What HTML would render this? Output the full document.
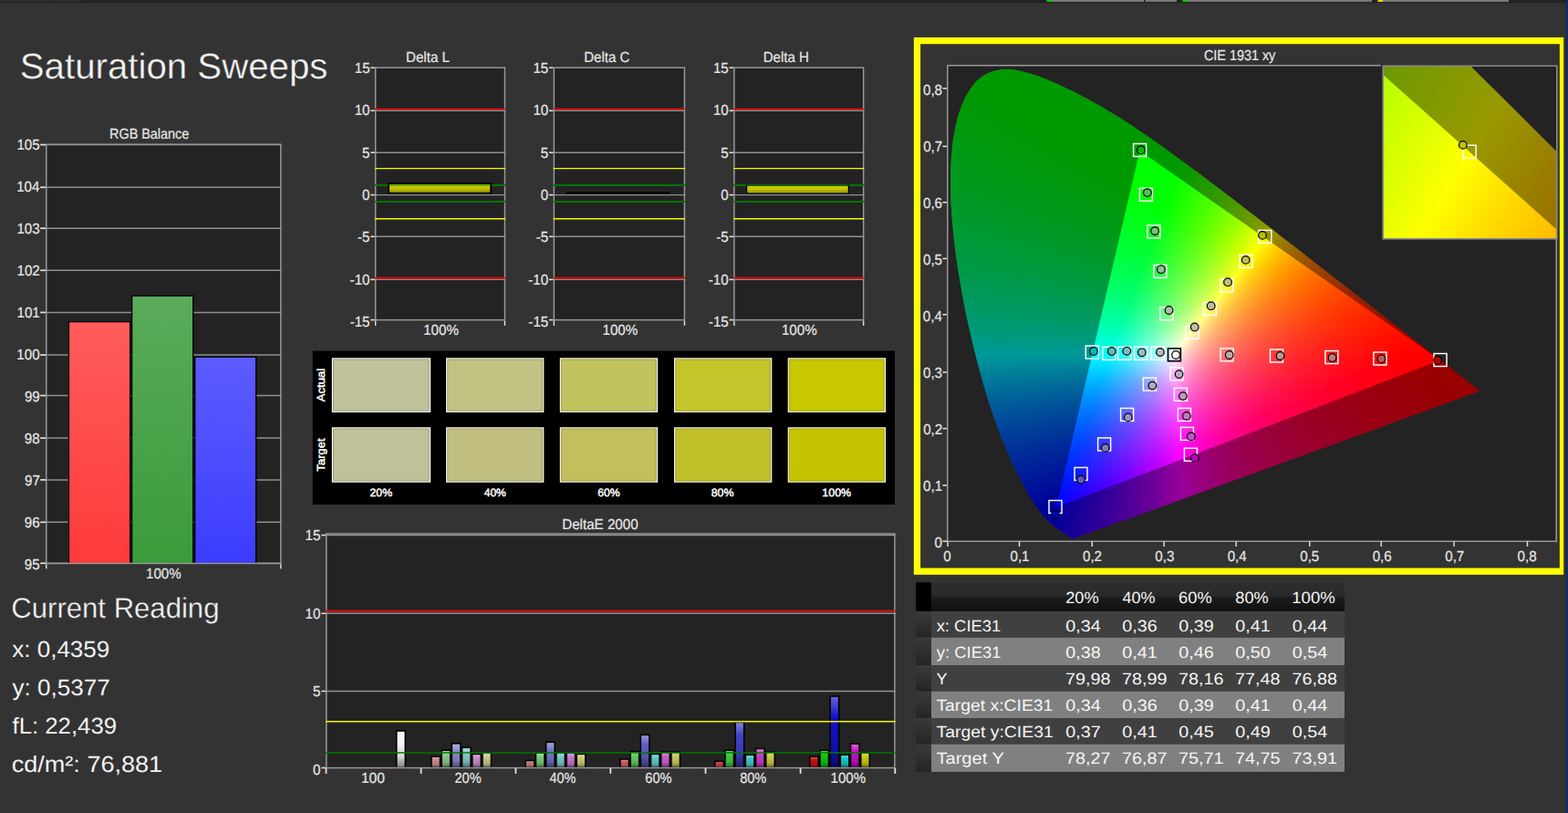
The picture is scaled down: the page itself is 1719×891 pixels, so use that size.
<!DOCTYPE html>
<html lang="en"><head><meta charset="utf-8"><title>Saturation Sweeps</title>
<style>
html,body{margin:0;padding:0;background:#333333}
body{width:1719px;height:891px;overflow:hidden;position:relative;font-family:"Liberation Sans", sans-serif}
svg{position:absolute;left:0;top:0;font-family:"Liberation Sans", sans-serif;fill:#e6e6e6;text-rendering:geometricPrecision}
.t{stroke:#e6e6e6;stroke-width:.22px}
.g{position:absolute}
.g i{display:block;height:1px}
</style></head>
<body>
<svg width="1719" height="891" viewBox="0 0 1719 891">
<defs><linearGradient id="gr" x1="0" y1="0" x2="0" y2="1"><stop offset="0" stop-color="#ff5c5c"/><stop offset="1" stop-color="#ff3a3a"/></linearGradient><linearGradient id="gg" x1="0" y1="0" x2="0" y2="1"><stop offset="0" stop-color="#5aab5a"/><stop offset="1" stop-color="#3a9b3a"/></linearGradient><linearGradient id="gb" x1="0" y1="0" x2="0" y2="1"><stop offset="0" stop-color="#5c5cff"/><stop offset="1" stop-color="#3c3cff"/></linearGradient><linearGradient id="gy" x1="0" y1="0" x2="0" y2="1"><stop offset="0" stop-color="#cdcd00"/><stop offset="0.5" stop-color="#c3c300"/><stop offset="1" stop-color="#8e8e00"/></linearGradient><linearGradient id="b0" x1="0" y1="0" x2="0" y2="1"><stop offset="0" stop-color="#f9f9f9"/><stop offset="0.3" stop-color="#f6f6f6"/><stop offset="0.7" stop-color="#d8d8d8"/><stop offset="1" stop-color="#7b7b7b"/></linearGradient><linearGradient id="b1" x1="0" y1="0" x2="0" y2="1"><stop offset="0" stop-color="#dbb3b3"/><stop offset="0.3" stop-color="#c88a8a"/><stop offset="0.7" stop-color="#b07979"/><stop offset="1" stop-color="#644545"/></linearGradient><linearGradient id="b2" x1="0" y1="0" x2="0" y2="1"><stop offset="0" stop-color="#b3dbb3"/><stop offset="0.3" stop-color="#8ac88a"/><stop offset="0.7" stop-color="#79b079"/><stop offset="1" stop-color="#456445"/></linearGradient><linearGradient id="b3" x1="0" y1="0" x2="0" y2="1"><stop offset="0" stop-color="#b3b3db"/><stop offset="0.3" stop-color="#8a8ac8"/><stop offset="0.7" stop-color="#7979b0"/><stop offset="1" stop-color="#454564"/></linearGradient><linearGradient id="b4" x1="0" y1="0" x2="0" y2="1"><stop offset="0" stop-color="#b3dbdb"/><stop offset="0.3" stop-color="#8ac8c8"/><stop offset="0.7" stop-color="#79b0b0"/><stop offset="1" stop-color="#456464"/></linearGradient><linearGradient id="b5" x1="0" y1="0" x2="0" y2="1"><stop offset="0" stop-color="#dbb3db"/><stop offset="0.3" stop-color="#c88ac8"/><stop offset="0.7" stop-color="#b079b0"/><stop offset="1" stop-color="#644564"/></linearGradient><linearGradient id="b6" x1="0" y1="0" x2="0" y2="1"><stop offset="0" stop-color="#dbdbb3"/><stop offset="0.3" stop-color="#c8c88a"/><stop offset="0.7" stop-color="#b0b079"/><stop offset="1" stop-color="#646445"/></linearGradient><linearGradient id="b7" x1="0" y1="0" x2="0" y2="1"><stop offset="0" stop-color="#dba6a6"/><stop offset="0.3" stop-color="#c87676"/><stop offset="0.7" stop-color="#b06868"/><stop offset="1" stop-color="#643b3b"/></linearGradient><linearGradient id="b8" x1="0" y1="0" x2="0" y2="1"><stop offset="0" stop-color="#a6dba6"/><stop offset="0.3" stop-color="#76c876"/><stop offset="0.7" stop-color="#68b068"/><stop offset="1" stop-color="#3b643b"/></linearGradient><linearGradient id="b9" x1="0" y1="0" x2="0" y2="1"><stop offset="0" stop-color="#a6a6db"/><stop offset="0.3" stop-color="#7676c8"/><stop offset="0.7" stop-color="#6868b0"/><stop offset="1" stop-color="#3b3b64"/></linearGradient><linearGradient id="b10" x1="0" y1="0" x2="0" y2="1"><stop offset="0" stop-color="#a6dbdb"/><stop offset="0.3" stop-color="#76c8c8"/><stop offset="0.7" stop-color="#68b0b0"/><stop offset="1" stop-color="#3b6464"/></linearGradient><linearGradient id="b11" x1="0" y1="0" x2="0" y2="1"><stop offset="0" stop-color="#dba6db"/><stop offset="0.3" stop-color="#c876c8"/><stop offset="0.7" stop-color="#b068b0"/><stop offset="1" stop-color="#643b64"/></linearGradient><linearGradient id="b12" x1="0" y1="0" x2="0" y2="1"><stop offset="0" stop-color="#dbdba6"/><stop offset="0.3" stop-color="#c8c876"/><stop offset="0.7" stop-color="#b0b068"/><stop offset="1" stop-color="#64643b"/></linearGradient><linearGradient id="b13" x1="0" y1="0" x2="0" y2="1"><stop offset="0" stop-color="#db9797"/><stop offset="0.3" stop-color="#c85e5e"/><stop offset="0.7" stop-color="#b05353"/><stop offset="1" stop-color="#642f2f"/></linearGradient><linearGradient id="b14" x1="0" y1="0" x2="0" y2="1"><stop offset="0" stop-color="#97db97"/><stop offset="0.3" stop-color="#5ec85e"/><stop offset="0.7" stop-color="#53b053"/><stop offset="1" stop-color="#2f642f"/></linearGradient><linearGradient id="b15" x1="0" y1="0" x2="0" y2="1"><stop offset="0" stop-color="#9797db"/><stop offset="0.3" stop-color="#5e5ec8"/><stop offset="0.7" stop-color="#5353b0"/><stop offset="1" stop-color="#2f2f64"/></linearGradient><linearGradient id="b16" x1="0" y1="0" x2="0" y2="1"><stop offset="0" stop-color="#97dbdb"/><stop offset="0.3" stop-color="#5ec8c8"/><stop offset="0.7" stop-color="#53b0b0"/><stop offset="1" stop-color="#2f6464"/></linearGradient><linearGradient id="b17" x1="0" y1="0" x2="0" y2="1"><stop offset="0" stop-color="#db97db"/><stop offset="0.3" stop-color="#c85ec8"/><stop offset="0.7" stop-color="#b053b0"/><stop offset="1" stop-color="#642f64"/></linearGradient><linearGradient id="b18" x1="0" y1="0" x2="0" y2="1"><stop offset="0" stop-color="#dbdb97"/><stop offset="0.3" stop-color="#c8c85e"/><stop offset="0.7" stop-color="#b0b053"/><stop offset="1" stop-color="#64642f"/></linearGradient><linearGradient id="b19" x1="0" y1="0" x2="0" y2="1"><stop offset="0" stop-color="#db8383"/><stop offset="0.3" stop-color="#c84040"/><stop offset="0.7" stop-color="#b03939"/><stop offset="1" stop-color="#642020"/></linearGradient><linearGradient id="b20" x1="0" y1="0" x2="0" y2="1"><stop offset="0" stop-color="#83db83"/><stop offset="0.3" stop-color="#40c840"/><stop offset="0.7" stop-color="#39b039"/><stop offset="1" stop-color="#206420"/></linearGradient><linearGradient id="b21" x1="0" y1="0" x2="0" y2="1"><stop offset="0" stop-color="#8383db"/><stop offset="0.3" stop-color="#4040c8"/><stop offset="0.7" stop-color="#3939b0"/><stop offset="1" stop-color="#202064"/></linearGradient><linearGradient id="b22" x1="0" y1="0" x2="0" y2="1"><stop offset="0" stop-color="#83dbdb"/><stop offset="0.3" stop-color="#40c8c8"/><stop offset="0.7" stop-color="#39b0b0"/><stop offset="1" stop-color="#206464"/></linearGradient><linearGradient id="b23" x1="0" y1="0" x2="0" y2="1"><stop offset="0" stop-color="#db83db"/><stop offset="0.3" stop-color="#c840c8"/><stop offset="0.7" stop-color="#b039b0"/><stop offset="1" stop-color="#642064"/></linearGradient><linearGradient id="b24" x1="0" y1="0" x2="0" y2="1"><stop offset="0" stop-color="#dbdb83"/><stop offset="0.3" stop-color="#c8c840"/><stop offset="0.7" stop-color="#b0b039"/><stop offset="1" stop-color="#646420"/></linearGradient><linearGradient id="b25" x1="0" y1="0" x2="0" y2="1"><stop offset="0" stop-color="#db6565"/><stop offset="0.3" stop-color="#c81212"/><stop offset="0.7" stop-color="#b01010"/><stop offset="1" stop-color="#640909"/></linearGradient><linearGradient id="b26" x1="0" y1="0" x2="0" y2="1"><stop offset="0" stop-color="#65db65"/><stop offset="0.3" stop-color="#12c812"/><stop offset="0.7" stop-color="#10b010"/><stop offset="1" stop-color="#096409"/></linearGradient><linearGradient id="b27" x1="0" y1="0" x2="0" y2="1"><stop offset="0" stop-color="#6565db"/><stop offset="0.3" stop-color="#1212c8"/><stop offset="0.7" stop-color="#1010b0"/><stop offset="1" stop-color="#090964"/></linearGradient><linearGradient id="b28" x1="0" y1="0" x2="0" y2="1"><stop offset="0" stop-color="#65dbdb"/><stop offset="0.3" stop-color="#12c8c8"/><stop offset="0.7" stop-color="#10b0b0"/><stop offset="1" stop-color="#096464"/></linearGradient><linearGradient id="b29" x1="0" y1="0" x2="0" y2="1"><stop offset="0" stop-color="#db65db"/><stop offset="0.3" stop-color="#c812c8"/><stop offset="0.7" stop-color="#b010b0"/><stop offset="1" stop-color="#640964"/></linearGradient><linearGradient id="b30" x1="0" y1="0" x2="0" y2="1"><stop offset="0" stop-color="#dbdb65"/><stop offset="0.3" stop-color="#c8c812"/><stop offset="0.7" stop-color="#b0b010"/><stop offset="1" stop-color="#646409"/></linearGradient><linearGradient id="th" x1="0" y1="0" x2="0" y2="1"><stop offset="0" stop-color="#2d2d2d"/><stop offset="0.48" stop-color="#292929"/><stop offset="0.5" stop-color="#1d1d1d"/><stop offset="1" stop-color="#101010"/></linearGradient><linearGradient id="rh" x1="0" y1="0" x2="0" y2="1"><stop offset="0" stop-color="#3a3a3a"/><stop offset="1" stop-color="#242424"/></linearGradient></defs>
<rect x="0" y="0" width="1719" height="3.2" fill="#222"/>
<rect x="0" y="0" width="56" height="2" fill="#2c2c2c"/>
<rect x="57" y="0" width="32" height="2" fill="#2c2c2c"/>
<rect x="1153" y="0" width="101" height="2" fill="#787878"/>
<rect x="1255.5" y="0" width="34.5" height="2" fill="#787878"/>
<rect x="1302" y="0" width="202" height="2" fill="#787878"/>
<rect x="1516" y="0" width="138" height="2" fill="#787878"/>
<rect x="1147.5" y="0" width="5.5" height="2" fill="#00c800"/>
<rect x="1296.5" y="0" width="5.5" height="2" fill="#00c800"/>
<rect x="1510.5" y="0" width="5.5" height="2" fill="#dcdc00"/>
<rect x="1717.6" y="0" width="1.4" height="891" fill="#0a2c8c"/>
<rect x="1716.9" y="0" width="0.7" height="891" fill="#1c2230"/>
<text x="21.79" y="86.20" font-size="39.3" textLength="337.69" lengthAdjust="spacingAndGlyphs" fill="#f4f4f4" stroke="#333" stroke-width="0.35">Saturation Sweeps</text>
<rect x="50" y="157.6" width="258.6" height="460.7" fill="#232323"/>
<line x1="50" y1="617.3" x2="308.6" y2="617.3" stroke="#909090" stroke-width="1.5"/>
<line x1="44.2" y1="617.3" x2="50" y2="617.3" stroke="#e4e4e4" stroke-width="1.7"/>
<text x="26.82" y="624.00" font-size="16" textLength="16.82" lengthAdjust="spacingAndGlyphs" class="t">95</text>
<line x1="50" y1="572.3" x2="308.6" y2="572.3" stroke="#909090" stroke-width="1.5"/>
<line x1="44.2" y1="572.3" x2="50" y2="572.3" stroke="#e4e4e4" stroke-width="1.7"/>
<text x="26.86" y="578.00" font-size="16" textLength="16.82" lengthAdjust="spacingAndGlyphs" class="t">96</text>
<line x1="50" y1="525.9" x2="308.6" y2="525.9" stroke="#909090" stroke-width="1.5"/>
<line x1="44.2" y1="525.9" x2="50" y2="525.9" stroke="#e4e4e4" stroke-width="1.7"/>
<text x="26.97" y="532.00" font-size="16" textLength="16.82" lengthAdjust="spacingAndGlyphs" class="t">97</text>
<line x1="50" y1="480.1" x2="308.6" y2="480.1" stroke="#909090" stroke-width="1.5"/>
<line x1="44.2" y1="480.1" x2="50" y2="480.1" stroke="#e4e4e4" stroke-width="1.7"/>
<text x="26.86" y="486.00" font-size="16" textLength="16.82" lengthAdjust="spacingAndGlyphs" class="t">98</text>
<line x1="50" y1="433.5" x2="308.6" y2="433.5" stroke="#909090" stroke-width="1.5"/>
<line x1="44.2" y1="433.5" x2="50" y2="433.5" stroke="#e4e4e4" stroke-width="1.7"/>
<text x="26.90" y="440.00" font-size="16" textLength="16.82" lengthAdjust="spacingAndGlyphs" class="t">99</text>
<line x1="50" y1="389" x2="308.6" y2="389" stroke="#909090" stroke-width="1.5"/>
<line x1="44.2" y1="389" x2="50" y2="389" stroke="#e4e4e4" stroke-width="1.7"/>
<text x="18.35" y="394.00" font-size="16" textLength="25.23" lengthAdjust="spacingAndGlyphs" class="t">100</text>
<line x1="50" y1="342.4" x2="308.6" y2="342.4" stroke="#909090" stroke-width="1.5"/>
<line x1="44.2" y1="342.4" x2="50" y2="342.4" stroke="#e4e4e4" stroke-width="1.7"/>
<text x="18.51" y="348.00" font-size="16" textLength="25.23" lengthAdjust="spacingAndGlyphs" class="t">101</text>
<line x1="50" y1="296.3" x2="308.6" y2="296.3" stroke="#909090" stroke-width="1.5"/>
<line x1="44.2" y1="296.3" x2="50" y2="296.3" stroke="#e4e4e4" stroke-width="1.7"/>
<text x="18.54" y="302.00" font-size="16" textLength="25.23" lengthAdjust="spacingAndGlyphs" class="t">102</text>
<line x1="50" y1="250.2" x2="308.6" y2="250.2" stroke="#909090" stroke-width="1.5"/>
<line x1="44.2" y1="250.2" x2="50" y2="250.2" stroke="#e4e4e4" stroke-width="1.7"/>
<text x="18.43" y="256.00" font-size="16" textLength="25.23" lengthAdjust="spacingAndGlyphs" class="t">103</text>
<line x1="50" y1="205.3" x2="308.6" y2="205.3" stroke="#909090" stroke-width="1.5"/>
<line x1="44.2" y1="205.3" x2="50" y2="205.3" stroke="#e4e4e4" stroke-width="1.7"/>
<text x="18.20" y="210.00" font-size="16" textLength="25.23" lengthAdjust="spacingAndGlyphs" class="t">104</text>
<line x1="50" y1="158.6" x2="308.6" y2="158.6" stroke="#909090" stroke-width="1.5"/>
<line x1="44.2" y1="158.6" x2="50" y2="158.6" stroke="#e4e4e4" stroke-width="1.7"/>
<text x="18.39" y="164.00" font-size="16" textLength="25.23" lengthAdjust="spacingAndGlyphs" class="t">105</text>
<rect x="75.4" y="352.6" width="67.3" height="265" fill="url(#gr)" stroke="#000" stroke-width="1.3"/>
<rect x="144.6" y="324.2" width="67.1" height="293.4" fill="url(#gg)" stroke="#000" stroke-width="1.3"/>
<rect x="213.7" y="391.2" width="67" height="226.4" fill="url(#gb)" stroke="#000" stroke-width="1.3"/>
<rect x="50.75" y="158.35" width="257.1" height="459.2" fill="none" stroke="#999999" stroke-width="1.5"/>
<line x1="50.75" y1="618.3" x2="50.75" y2="623.3" stroke="#e4e4e4" stroke-width="1.4"/>
<line x1="307.85" y1="618.3" x2="307.85" y2="623.3" stroke="#e4e4e4" stroke-width="1.4"/>
<text x="120.11" y="152.10" font-size="16" textLength="87.12" lengthAdjust="spacingAndGlyphs" class="t">RGB Balance</text>
<text x="160.06" y="633.90" font-size="16" textLength="38.67" lengthAdjust="spacingAndGlyphs" class="t">100%</text>
<rect x="410.9" y="73.4" width="143.3" height="278" fill="#232323"/>
<line x1="406.3" y1="350.6" x2="410.9" y2="350.6" stroke="#e4e4e4" stroke-width="1.5"/>
<text x="383.66" y="357.90" font-size="16" textLength="21.85" lengthAdjust="spacingAndGlyphs" class="t">-15</text>
<line x1="410.9" y1="306.4" x2="554.2" y2="306.4" stroke="#909090" stroke-width="1.4"/>
<line x1="406.3" y1="306.4" x2="410.9" y2="306.4" stroke="#e4e4e4" stroke-width="1.5"/>
<text x="383.62" y="311.60" font-size="16" textLength="21.85" lengthAdjust="spacingAndGlyphs" class="t">-10</text>
<line x1="410.9" y1="259.3" x2="554.2" y2="259.3" stroke="#909090" stroke-width="1.4"/>
<line x1="406.3" y1="259.3" x2="410.9" y2="259.3" stroke="#e4e4e4" stroke-width="1.5"/>
<text x="392.09" y="265.30" font-size="16" textLength="13.44" lengthAdjust="spacingAndGlyphs" class="t">-5</text>
<line x1="410.9" y1="213.6" x2="554.2" y2="213.6" stroke="#909090" stroke-width="1.4"/>
<line x1="406.3" y1="213.6" x2="410.9" y2="213.6" stroke="#e4e4e4" stroke-width="1.5"/>
<text x="397.08" y="219.00" font-size="16" textLength="8.41" lengthAdjust="spacingAndGlyphs" class="t">0</text>
<line x1="410.9" y1="167.2" x2="554.2" y2="167.2" stroke="#909090" stroke-width="1.4"/>
<line x1="406.3" y1="167.2" x2="410.9" y2="167.2" stroke="#e4e4e4" stroke-width="1.5"/>
<text x="397.11" y="172.70" font-size="16" textLength="8.41" lengthAdjust="spacingAndGlyphs" class="t">5</text>
<line x1="410.9" y1="121.3" x2="554.2" y2="121.3" stroke="#909090" stroke-width="1.4"/>
<line x1="406.3" y1="121.3" x2="410.9" y2="121.3" stroke="#e4e4e4" stroke-width="1.5"/>
<text x="388.68" y="126.40" font-size="16" textLength="16.82" lengthAdjust="spacingAndGlyphs" class="t">10</text>
<line x1="406.3" y1="74.2" x2="410.9" y2="74.2" stroke="#e4e4e4" stroke-width="1.5"/>
<text x="388.72" y="80.10" font-size="16" textLength="16.82" lengthAdjust="spacingAndGlyphs" class="t">15</text>
<rect x="411.65" y="74.15" width="141.8" height="276.5" fill="none" stroke="#999999" stroke-width="1.5"/>
<line x1="410.9" y1="119.5" x2="554.2" y2="119.5" stroke="#ff0000" stroke-width="1.7"/>
<line x1="410.9" y1="304.6" x2="554.2" y2="304.6" stroke="#ff0000" stroke-width="1.7"/>
<line x1="410.9" y1="203" x2="554.2" y2="203" stroke="#007600" stroke-width="1.8"/>
<line x1="410.9" y1="221" x2="554.2" y2="221" stroke="#007600" stroke-width="1.8"/>
<rect x="426" y="201" width="112.2" height="10.8" fill="url(#gy)" stroke="#000" stroke-width="2"/>
<line x1="427" y1="203" x2="537.2" y2="203" stroke="#1e8c00" stroke-width="1.8" opacity="0.5"/>
<line x1="410.9" y1="184.6" x2="554.2" y2="184.6" stroke="#f8f800" stroke-width="1.35"/>
<line x1="410.9" y1="239.7" x2="554.2" y2="239.7" stroke="#f8f800" stroke-width="1.35"/>
<line x1="411.65" y1="351.4" x2="411.65" y2="356.9" stroke="#e4e4e4" stroke-width="1.4"/>
<line x1="553.45" y1="351.4" x2="553.45" y2="356.9" stroke="#e4e4e4" stroke-width="1.4"/>
<rect x="606.6" y="73.4" width="144.6" height="278" fill="#232323"/>
<line x1="602" y1="350.6" x2="606.6" y2="350.6" stroke="#e4e4e4" stroke-width="1.5"/>
<text x="579.36" y="357.90" font-size="16" textLength="21.85" lengthAdjust="spacingAndGlyphs" class="t">-15</text>
<line x1="606.6" y1="306.4" x2="751.2" y2="306.4" stroke="#909090" stroke-width="1.4"/>
<line x1="602" y1="306.4" x2="606.6" y2="306.4" stroke="#e4e4e4" stroke-width="1.5"/>
<text x="579.32" y="311.60" font-size="16" textLength="21.85" lengthAdjust="spacingAndGlyphs" class="t">-10</text>
<line x1="606.6" y1="259.3" x2="751.2" y2="259.3" stroke="#909090" stroke-width="1.4"/>
<line x1="602" y1="259.3" x2="606.6" y2="259.3" stroke="#e4e4e4" stroke-width="1.5"/>
<text x="587.79" y="265.30" font-size="16" textLength="13.44" lengthAdjust="spacingAndGlyphs" class="t">-5</text>
<line x1="606.6" y1="213.6" x2="751.2" y2="213.6" stroke="#909090" stroke-width="1.4"/>
<line x1="602" y1="213.6" x2="606.6" y2="213.6" stroke="#e4e4e4" stroke-width="1.5"/>
<text x="592.78" y="219.00" font-size="16" textLength="8.41" lengthAdjust="spacingAndGlyphs" class="t">0</text>
<line x1="606.6" y1="167.2" x2="751.2" y2="167.2" stroke="#909090" stroke-width="1.4"/>
<line x1="602" y1="167.2" x2="606.6" y2="167.2" stroke="#e4e4e4" stroke-width="1.5"/>
<text x="592.81" y="172.70" font-size="16" textLength="8.41" lengthAdjust="spacingAndGlyphs" class="t">5</text>
<line x1="606.6" y1="121.3" x2="751.2" y2="121.3" stroke="#909090" stroke-width="1.4"/>
<line x1="602" y1="121.3" x2="606.6" y2="121.3" stroke="#e4e4e4" stroke-width="1.5"/>
<text x="584.38" y="126.40" font-size="16" textLength="16.82" lengthAdjust="spacingAndGlyphs" class="t">10</text>
<line x1="602" y1="74.2" x2="606.6" y2="74.2" stroke="#e4e4e4" stroke-width="1.5"/>
<text x="584.42" y="80.10" font-size="16" textLength="16.82" lengthAdjust="spacingAndGlyphs" class="t">15</text>
<rect x="607.35" y="74.15" width="143.1" height="276.5" fill="none" stroke="#999999" stroke-width="1.5"/>
<line x1="606.6" y1="119.5" x2="751.2" y2="119.5" stroke="#ff0000" stroke-width="1.7"/>
<line x1="606.6" y1="304.6" x2="751.2" y2="304.6" stroke="#ff0000" stroke-width="1.7"/>
<line x1="606.6" y1="203" x2="751.2" y2="203" stroke="#007600" stroke-width="1.8"/>
<line x1="606.6" y1="221" x2="751.2" y2="221" stroke="#007600" stroke-width="1.8"/>
<rect x="620.8" y="210.3" width="114.2" height="2.6" fill="#000"/>
<line x1="606.6" y1="184.6" x2="751.2" y2="184.6" stroke="#f8f800" stroke-width="1.35"/>
<line x1="606.6" y1="239.7" x2="751.2" y2="239.7" stroke="#f8f800" stroke-width="1.35"/>
<line x1="607.35" y1="351.4" x2="607.35" y2="356.9" stroke="#e4e4e4" stroke-width="1.4"/>
<line x1="750.45" y1="351.4" x2="750.45" y2="356.9" stroke="#e4e4e4" stroke-width="1.4"/>
<rect x="804.1" y="73.4" width="143.3" height="278" fill="#232323"/>
<line x1="799.5" y1="350.6" x2="804.1" y2="350.6" stroke="#e4e4e4" stroke-width="1.5"/>
<text x="776.86" y="357.90" font-size="16" textLength="21.85" lengthAdjust="spacingAndGlyphs" class="t">-15</text>
<line x1="804.1" y1="306.4" x2="947.4" y2="306.4" stroke="#909090" stroke-width="1.4"/>
<line x1="799.5" y1="306.4" x2="804.1" y2="306.4" stroke="#e4e4e4" stroke-width="1.5"/>
<text x="776.82" y="311.60" font-size="16" textLength="21.85" lengthAdjust="spacingAndGlyphs" class="t">-10</text>
<line x1="804.1" y1="259.3" x2="947.4" y2="259.3" stroke="#909090" stroke-width="1.4"/>
<line x1="799.5" y1="259.3" x2="804.1" y2="259.3" stroke="#e4e4e4" stroke-width="1.5"/>
<text x="785.29" y="265.30" font-size="16" textLength="13.44" lengthAdjust="spacingAndGlyphs" class="t">-5</text>
<line x1="804.1" y1="213.6" x2="947.4" y2="213.6" stroke="#909090" stroke-width="1.4"/>
<line x1="799.5" y1="213.6" x2="804.1" y2="213.6" stroke="#e4e4e4" stroke-width="1.5"/>
<text x="790.28" y="219.00" font-size="16" textLength="8.41" lengthAdjust="spacingAndGlyphs" class="t">0</text>
<line x1="804.1" y1="167.2" x2="947.4" y2="167.2" stroke="#909090" stroke-width="1.4"/>
<line x1="799.5" y1="167.2" x2="804.1" y2="167.2" stroke="#e4e4e4" stroke-width="1.5"/>
<text x="790.31" y="172.70" font-size="16" textLength="8.41" lengthAdjust="spacingAndGlyphs" class="t">5</text>
<line x1="804.1" y1="121.3" x2="947.4" y2="121.3" stroke="#909090" stroke-width="1.4"/>
<line x1="799.5" y1="121.3" x2="804.1" y2="121.3" stroke="#e4e4e4" stroke-width="1.5"/>
<text x="781.88" y="126.40" font-size="16" textLength="16.82" lengthAdjust="spacingAndGlyphs" class="t">10</text>
<line x1="799.5" y1="74.2" x2="804.1" y2="74.2" stroke="#e4e4e4" stroke-width="1.5"/>
<text x="781.92" y="80.10" font-size="16" textLength="16.82" lengthAdjust="spacingAndGlyphs" class="t">15</text>
<rect x="804.85" y="74.15" width="141.8" height="276.5" fill="none" stroke="#999999" stroke-width="1.5"/>
<line x1="804.1" y1="119.5" x2="947.4" y2="119.5" stroke="#ff0000" stroke-width="1.7"/>
<line x1="804.1" y1="304.6" x2="947.4" y2="304.6" stroke="#ff0000" stroke-width="1.7"/>
<line x1="804.1" y1="203" x2="947.4" y2="203" stroke="#007600" stroke-width="1.8"/>
<line x1="804.1" y1="221" x2="947.4" y2="221" stroke="#007600" stroke-width="1.8"/>
<rect x="818.55" y="203.15" width="111.8" height="9" fill="url(#gy)" stroke="#000" stroke-width="1.3"/>
<line x1="819.2" y1="203" x2="929.7" y2="203" stroke="#1e8c00" stroke-width="1.8" opacity="0.5"/>
<line x1="804.1" y1="184.6" x2="947.4" y2="184.6" stroke="#f8f800" stroke-width="1.35"/>
<line x1="804.1" y1="239.7" x2="947.4" y2="239.7" stroke="#f8f800" stroke-width="1.35"/>
<line x1="804.85" y1="351.4" x2="804.85" y2="356.9" stroke="#e4e4e4" stroke-width="1.4"/>
<line x1="946.65" y1="351.4" x2="946.65" y2="356.9" stroke="#e4e4e4" stroke-width="1.4"/>
<text x="445.05" y="68.00" font-size="16" textLength="47.85" lengthAdjust="spacingAndGlyphs" class="t">Delta L</text>
<text x="640.18" y="68.00" font-size="16" textLength="50.15" lengthAdjust="spacingAndGlyphs" class="t">Delta C</text>
<text x="836.72" y="68.00" font-size="16" textLength="50.15" lengthAdjust="spacingAndGlyphs" class="t">Delta H</text>
<text x="464.16" y="367.20" font-size="16" textLength="38.67" lengthAdjust="spacingAndGlyphs" class="t">100%</text>
<text x="660.56" y="367.20" font-size="16" textLength="38.67" lengthAdjust="spacingAndGlyphs" class="t">100%</text>
<text x="856.96" y="367.20" font-size="16" textLength="38.67" lengthAdjust="spacingAndGlyphs" class="t">100%</text>
<rect x="342.8" y="384.5" width="638.2" height="168.5" fill="#000"/>
<rect x="364.4" y="392.9" width="107.1" height="58.4" fill="#c1c19b" stroke="#fcfcf4" stroke-width="1.2"/>
<rect x="365.5" y="394" width="104.9" height="56.2" fill="none" stroke="#000" stroke-opacity="0.18" stroke-width="1"/>
<rect x="364.4" y="468.9" width="107.1" height="59.2" fill="#c0c09a" stroke="#fcfcf4" stroke-width="1.2"/>
<rect x="365.5" y="470" width="104.9" height="57" fill="none" stroke="#000" stroke-opacity="0.18" stroke-width="1"/>
<rect x="489.6" y="392.9" width="106.1" height="58.4" fill="#c2c282" stroke="#fcfcf4" stroke-width="1.2"/>
<rect x="490.7" y="394" width="103.9" height="56.2" fill="none" stroke="#000" stroke-opacity="0.18" stroke-width="1"/>
<rect x="489.6" y="468.9" width="106.1" height="59.2" fill="#c0bf80" stroke="#fcfcf4" stroke-width="1.2"/>
<rect x="490.7" y="470" width="103.9" height="57" fill="none" stroke="#000" stroke-opacity="0.18" stroke-width="1"/>
<rect x="614.4" y="392.9" width="106.1" height="58.4" fill="#c2c25e" stroke="#fcfcf4" stroke-width="1.2"/>
<rect x="615.5" y="394" width="103.9" height="56.2" fill="none" stroke="#000" stroke-opacity="0.18" stroke-width="1"/>
<rect x="614.4" y="468.9" width="106.1" height="59.2" fill="#c1c05c" stroke="#fcfcf4" stroke-width="1.2"/>
<rect x="615.5" y="470" width="103.9" height="57" fill="none" stroke="#000" stroke-opacity="0.18" stroke-width="1"/>
<rect x="739.6" y="392.9" width="106.1" height="58.4" fill="#c4c42b" stroke="#fcfcf4" stroke-width="1.2"/>
<rect x="740.7" y="394" width="103.9" height="56.2" fill="none" stroke="#000" stroke-opacity="0.18" stroke-width="1"/>
<rect x="739.6" y="468.9" width="106.1" height="59.2" fill="#c2c02a" stroke="#fcfcf4" stroke-width="1.2"/>
<rect x="740.7" y="470" width="103.9" height="57" fill="none" stroke="#000" stroke-opacity="0.18" stroke-width="1"/>
<rect x="864.3" y="392.9" width="106.1" height="58.4" fill="#c8c800" stroke="#fcfcf4" stroke-width="1.2"/>
<rect x="865.4" y="394" width="103.9" height="56.2" fill="none" stroke="#000" stroke-opacity="0.18" stroke-width="1"/>
<rect x="864.3" y="468.9" width="106.1" height="59.2" fill="#c6c400" stroke="#fcfcf4" stroke-width="1.2"/>
<rect x="865.4" y="470" width="103.9" height="57" fill="none" stroke="#000" stroke-opacity="0.18" stroke-width="1"/>
<text x="405.59" y="543.70" font-size="12.2" textLength="24.43" lengthAdjust="spacingAndGlyphs" fill="#fff" stroke="#fff" stroke-width="0.45">20%</text>
<text x="530.73" y="543.70" font-size="12.2" textLength="24.08" lengthAdjust="spacingAndGlyphs" fill="#fff" stroke="#fff" stroke-width="0.45">40%</text>
<text x="655.19" y="543.70" font-size="12.2" textLength="24.43" lengthAdjust="spacingAndGlyphs" fill="#fff" stroke="#fff" stroke-width="0.45">60%</text>
<text x="779.67" y="543.70" font-size="12.2" textLength="24.75" lengthAdjust="spacingAndGlyphs" fill="#fff" stroke="#fff" stroke-width="0.45">80%</text>
<text x="901.37" y="543.70" font-size="12.2" textLength="31.66" lengthAdjust="spacingAndGlyphs" fill="#fff" stroke="#fff" stroke-width="0.45">100%</text>
<text transform="translate(356.4,422) rotate(-90)" font-size="12.2" fill="#fff" text-anchor="middle" textLength="36.51" lengthAdjust="spacingAndGlyphs" stroke="#fff" stroke-width="0.45">Actual</text>
<text transform="translate(356.4,498.4) rotate(-90)" font-size="12.2" fill="#fff" text-anchor="middle" textLength="35.98" lengthAdjust="spacingAndGlyphs" stroke="#fff" stroke-width="0.45">Target</text>
<rect x="357" y="584.2" width="624.6" height="258.1" fill="#232323"/>
<line x1="352.4" y1="841.5" x2="357" y2="841.5" stroke="#e4e4e4" stroke-width="1.5"/>
<text x="342.98" y="849.20" font-size="16" textLength="8.41" lengthAdjust="spacingAndGlyphs" class="t">0</text>
<line x1="357" y1="757.5" x2="981.6" y2="757.5" stroke="#909090" stroke-width="1.4"/>
<line x1="352.4" y1="757.5" x2="357" y2="757.5" stroke="#e4e4e4" stroke-width="1.5"/>
<text x="343.01" y="763.43" font-size="16" textLength="8.41" lengthAdjust="spacingAndGlyphs" class="t">5</text>
<line x1="357" y1="672.3" x2="981.6" y2="672.3" stroke="#909090" stroke-width="1.4"/>
<line x1="352.4" y1="672.3" x2="357" y2="672.3" stroke="#e4e4e4" stroke-width="1.5"/>
<text x="334.58" y="677.66" font-size="16" textLength="16.82" lengthAdjust="spacingAndGlyphs" class="t">10</text>
<line x1="357" y1="586.5" x2="981.6" y2="586.5" stroke="#909090" stroke-width="1.4"/>
<line x1="352.4" y1="586.5" x2="357" y2="586.5" stroke="#e4e4e4" stroke-width="1.5"/>
<text x="334.62" y="591.89" font-size="16" textLength="16.82" lengthAdjust="spacingAndGlyphs" class="t">15</text>
<rect x="434.7" y="801" width="9.6" height="40.4" fill="url(#b0)" stroke="#000" stroke-width="1.6"/>
<rect x="472.9" y="829.15" width="9.6" height="12.25" fill="url(#b1)" stroke="#000" stroke-width="1.6"/>
<rect x="484.1" y="822.25" width="9.6" height="19.15" fill="url(#b2)" stroke="#000" stroke-width="1.6"/>
<rect x="495.3" y="814.85" width="9.6" height="26.55" fill="url(#b3)" stroke="#000" stroke-width="1.6"/>
<rect x="506.5" y="819.25" width="9.6" height="22.15" fill="url(#b4)" stroke="#000" stroke-width="1.6"/>
<rect x="517.7" y="826.35" width="9.6" height="15.05" fill="url(#b5)" stroke="#000" stroke-width="1.6"/>
<rect x="528.9" y="824.85" width="9.6" height="16.55" fill="url(#b6)" stroke="#000" stroke-width="1.6"/>
<rect x="576.2" y="833.45" width="9.6" height="7.95" fill="url(#b7)" stroke="#000" stroke-width="1.6"/>
<rect x="587.4" y="825.05" width="9.6" height="16.35" fill="url(#b8)" stroke="#000" stroke-width="1.6"/>
<rect x="598.6" y="813.35" width="9.6" height="28.05" fill="url(#b9)" stroke="#000" stroke-width="1.6"/>
<rect x="609.8" y="825.05" width="9.6" height="16.35" fill="url(#b10)" stroke="#000" stroke-width="1.6"/>
<rect x="621" y="825.05" width="9.6" height="16.35" fill="url(#b11)" stroke="#000" stroke-width="1.6"/>
<rect x="632.2" y="826.35" width="9.6" height="15.05" fill="url(#b12)" stroke="#000" stroke-width="1.6"/>
<rect x="679.9" y="831.95" width="9.6" height="9.45" fill="url(#b13)" stroke="#000" stroke-width="1.6"/>
<rect x="691.1" y="823.55" width="9.6" height="17.85" fill="url(#b14)" stroke="#000" stroke-width="1.6"/>
<rect x="702.3" y="805.35" width="9.6" height="36.05" fill="url(#b15)" stroke="#000" stroke-width="1.6"/>
<rect x="713.5" y="826.35" width="9.6" height="15.05" fill="url(#b16)" stroke="#000" stroke-width="1.6"/>
<rect x="724.7" y="824.15" width="9.6" height="17.25" fill="url(#b17)" stroke="#000" stroke-width="1.6"/>
<rect x="735.9" y="824.15" width="9.6" height="17.25" fill="url(#b18)" stroke="#000" stroke-width="1.6"/>
<rect x="783.7" y="834.35" width="9.6" height="7.05" fill="url(#b19)" stroke="#000" stroke-width="1.6"/>
<rect x="794.9" y="822.25" width="9.6" height="19.15" fill="url(#b20)" stroke="#000" stroke-width="1.6"/>
<rect x="806.1" y="791.35" width="9.6" height="50.05" fill="url(#b21)" stroke="#000" stroke-width="1.6"/>
<rect x="817.3" y="827.25" width="9.6" height="14.15" fill="url(#b22)" stroke="#000" stroke-width="1.6"/>
<rect x="828.5" y="820.45" width="9.6" height="20.95" fill="url(#b23)" stroke="#000" stroke-width="1.6"/>
<rect x="839.7" y="824.15" width="9.6" height="17.25" fill="url(#b24)" stroke="#000" stroke-width="1.6"/>
<rect x="887.7" y="829.15" width="9.6" height="12.25" fill="url(#b25)" stroke="#000" stroke-width="1.6"/>
<rect x="898.9" y="822.25" width="9.6" height="19.15" fill="url(#b26)" stroke="#000" stroke-width="1.6"/>
<rect x="910.1" y="763.05" width="9.6" height="78.35" fill="url(#b27)" stroke="#000" stroke-width="1.6"/>
<rect x="921.3" y="827.25" width="9.6" height="14.15" fill="url(#b28)" stroke="#000" stroke-width="1.6"/>
<rect x="932.5" y="815.15" width="9.6" height="26.25" fill="url(#b29)" stroke="#000" stroke-width="1.6"/>
<rect x="943.7" y="825.05" width="9.6" height="16.35" fill="url(#b30)" stroke="#000" stroke-width="1.6"/>
<rect x="357.75" y="584.95" width="623.1" height="256.6" fill="none" stroke="#999999" stroke-width="1.5"/>
<line x1="357" y1="669.7" x2="981.6" y2="669.7" stroke="#cc1212" stroke-width="2.2"/>
<line x1="357" y1="790.7" x2="981.6" y2="790.7" stroke="#f4f400" stroke-width="1.5"/>
<line x1="357" y1="825" x2="981.6" y2="825" stroke="#007a00" stroke-width="1.5"/>
<line x1="357.5" y1="841.8" x2="357.5" y2="847.9" stroke="#e4e4e4" stroke-width="1.8"/>
<line x1="461.6" y1="841.8" x2="461.6" y2="847.9" stroke="#e4e4e4" stroke-width="1.8"/>
<line x1="565.4" y1="841.8" x2="565.4" y2="847.9" stroke="#e4e4e4" stroke-width="1.8"/>
<line x1="669.3" y1="841.8" x2="669.3" y2="847.9" stroke="#e4e4e4" stroke-width="1.8"/>
<line x1="773.5" y1="841.8" x2="773.5" y2="847.9" stroke="#e4e4e4" stroke-width="1.8"/>
<line x1="877.6" y1="841.8" x2="877.6" y2="847.9" stroke="#e4e4e4" stroke-width="1.8"/>
<line x1="981.3" y1="841.8" x2="981.3" y2="847.9" stroke="#e4e4e4" stroke-width="1.8"/>
<text x="395.93" y="858.40" font-size="16" textLength="25.97" lengthAdjust="spacingAndGlyphs" class="t">100</text>
<text x="498.47" y="858.40" font-size="16" textLength="29.23" lengthAdjust="spacingAndGlyphs" class="t">20%</text>
<text x="602.48" y="858.40" font-size="16" textLength="28.81" lengthAdjust="spacingAndGlyphs" class="t">40%</text>
<text x="707.27" y="858.40" font-size="16" textLength="29.23" lengthAdjust="spacingAndGlyphs" class="t">60%</text>
<text x="811.18" y="858.40" font-size="16" textLength="29.11" lengthAdjust="spacingAndGlyphs" class="t">80%</text>
<text x="910.52" y="858.40" font-size="16" textLength="38.56" lengthAdjust="spacingAndGlyphs" class="t">100%</text>
<text x="616.25" y="579.80" font-size="16" textLength="83.34" lengthAdjust="spacingAndGlyphs" class="t">DeltaE 2000</text>
<text x="12.35" y="676.90" font-size="31.2" textLength="228.10" lengthAdjust="spacingAndGlyphs" fill="#f2f2f2" stroke="#333" stroke-width="0.3">Current Reading</text>
<text x="13.28" y="719.80" font-size="25" textLength="106.94" lengthAdjust="spacingAndGlyphs" fill="#f2f2f2">x: 0,4359</text>
<text x="13.53" y="761.70" font-size="25" textLength="107.12" lengthAdjust="spacingAndGlyphs" fill="#f2f2f2">y: 0,5377</text>
<text x="13.51" y="803.70" font-size="25" textLength="114.57" lengthAdjust="spacingAndGlyphs" fill="#f2f2f2">fL: 22,439</text>
<text x="12.75" y="845.70" font-size="25" textLength="165.39" lengthAdjust="spacingAndGlyphs" fill="#f2f2f2">cd/m²: 76,881</text>
<rect x="1004" y="638.2" width="470" height="31.8" fill="url(#th)"/>
<rect x="1004" y="638.2" width="17" height="31.8" fill="#000"/>
<text x="1168.19" y="661.20" font-size="17.8" textLength="36.53" lengthAdjust="spacingAndGlyphs" fill="#f6f6f6">20%</text>
<text x="1230.60" y="661.20" font-size="17.8" textLength="36.02" lengthAdjust="spacingAndGlyphs" fill="#f6f6f6">40%</text>
<text x="1292.09" y="661.20" font-size="17.8" textLength="36.53" lengthAdjust="spacingAndGlyphs" fill="#f6f6f6">60%</text>
<text x="1354.33" y="661.20" font-size="17.8" textLength="36.39" lengthAdjust="spacingAndGlyphs" fill="#f6f6f6">80%</text>
<text x="1416.20" y="661.20" font-size="17.8" textLength="47.65" lengthAdjust="spacingAndGlyphs" fill="#f6f6f6">100%</text>
<rect x="1021" y="670" width="453" height="28.8" fill="#404040"/>
<rect x="1004" y="670" width="17" height="28.8" fill="url(#rh)"/>
<text x="1026.67" y="691.80" font-size="17.8" textLength="70.71" lengthAdjust="spacingAndGlyphs" fill="#f6f6f6">x: CIE31</text>
<text x="1168.31" y="691.80" font-size="17.8" textLength="38.46" lengthAdjust="spacingAndGlyphs" fill="#f6f6f6">0,34</text>
<text x="1230.21" y="691.80" font-size="17.8" textLength="38.46" lengthAdjust="spacingAndGlyphs" fill="#f6f6f6">0,36</text>
<text x="1292.21" y="691.80" font-size="17.8" textLength="38.46" lengthAdjust="spacingAndGlyphs" fill="#f6f6f6">0,39</text>
<text x="1354.31" y="691.80" font-size="17.8" textLength="38.46" lengthAdjust="spacingAndGlyphs" fill="#f6f6f6">0,41</text>
<text x="1416.81" y="691.80" font-size="17.8" textLength="38.46" lengthAdjust="spacingAndGlyphs" fill="#f6f6f6">0,44</text>
<rect x="1021" y="698.8" width="453" height="30.4" fill="#808080"/>
<rect x="1004" y="698.8" width="17" height="30.4" fill="url(#rh)"/>
<text x="1026.85" y="720.80" font-size="17.8" textLength="70.52" lengthAdjust="spacingAndGlyphs" fill="#f6f6f6">y: CIE31</text>
<text x="1168.31" y="720.80" font-size="17.8" textLength="38.46" lengthAdjust="spacingAndGlyphs" fill="#f6f6f6">0,38</text>
<text x="1230.21" y="720.80" font-size="17.8" textLength="38.46" lengthAdjust="spacingAndGlyphs" fill="#f6f6f6">0,41</text>
<text x="1292.21" y="720.80" font-size="17.8" textLength="38.46" lengthAdjust="spacingAndGlyphs" fill="#f6f6f6">0,46</text>
<text x="1354.31" y="720.80" font-size="17.8" textLength="38.46" lengthAdjust="spacingAndGlyphs" fill="#f6f6f6">0,50</text>
<text x="1416.81" y="720.80" font-size="17.8" textLength="38.46" lengthAdjust="spacingAndGlyphs" fill="#f6f6f6">0,54</text>
<rect x="1021" y="729.2" width="453" height="28.5" fill="#404040"/>
<rect x="1004" y="729.2" width="17" height="28.5" fill="url(#rh)"/>
<text x="1026.50" y="750.10" font-size="17.8" textLength="12.00" lengthAdjust="spacingAndGlyphs" fill="#f6f6f6">Y</text>
<text x="1168.11" y="750.10" font-size="17.8" textLength="49.45" lengthAdjust="spacingAndGlyphs" fill="#f6f6f6">79,98</text>
<text x="1230.01" y="750.10" font-size="17.8" textLength="49.45" lengthAdjust="spacingAndGlyphs" fill="#f6f6f6">78,99</text>
<text x="1292.01" y="750.10" font-size="17.8" textLength="49.45" lengthAdjust="spacingAndGlyphs" fill="#f6f6f6">78,16</text>
<text x="1354.11" y="750.10" font-size="17.8" textLength="49.45" lengthAdjust="spacingAndGlyphs" fill="#f6f6f6">77,48</text>
<text x="1416.61" y="750.10" font-size="17.8" textLength="49.45" lengthAdjust="spacingAndGlyphs" fill="#f6f6f6">76,88</text>
<rect x="1021" y="757.7" width="453" height="29.5" fill="#808080"/>
<rect x="1004" y="757.7" width="17" height="29.5" fill="url(#rh)"/>
<text x="1026.46" y="778.60" font-size="17.8" textLength="127.89" lengthAdjust="spacingAndGlyphs" fill="#f6f6f6">Target x:CIE31</text>
<text x="1168.31" y="778.60" font-size="17.8" textLength="38.46" lengthAdjust="spacingAndGlyphs" fill="#f6f6f6">0,34</text>
<text x="1230.21" y="778.60" font-size="17.8" textLength="38.46" lengthAdjust="spacingAndGlyphs" fill="#f6f6f6">0,36</text>
<text x="1292.21" y="778.60" font-size="17.8" textLength="38.46" lengthAdjust="spacingAndGlyphs" fill="#f6f6f6">0,39</text>
<text x="1354.31" y="778.60" font-size="17.8" textLength="38.46" lengthAdjust="spacingAndGlyphs" fill="#f6f6f6">0,41</text>
<text x="1416.81" y="778.60" font-size="17.8" textLength="38.46" lengthAdjust="spacingAndGlyphs" fill="#f6f6f6">0,44</text>
<rect x="1021" y="787.2" width="453" height="28.5" fill="#404040"/>
<rect x="1004" y="787.2" width="17" height="28.5" fill="url(#rh)"/>
<text x="1026.46" y="808.40" font-size="17.8" textLength="128.30" lengthAdjust="spacingAndGlyphs" fill="#f6f6f6">Target y:CIE31</text>
<text x="1168.31" y="808.40" font-size="17.8" textLength="38.46" lengthAdjust="spacingAndGlyphs" fill="#f6f6f6">0,37</text>
<text x="1230.21" y="808.40" font-size="17.8" textLength="38.46" lengthAdjust="spacingAndGlyphs" fill="#f6f6f6">0,41</text>
<text x="1292.21" y="808.40" font-size="17.8" textLength="38.46" lengthAdjust="spacingAndGlyphs" fill="#f6f6f6">0,45</text>
<text x="1354.31" y="808.40" font-size="17.8" textLength="38.46" lengthAdjust="spacingAndGlyphs" fill="#f6f6f6">0,49</text>
<text x="1416.81" y="808.40" font-size="17.8" textLength="38.46" lengthAdjust="spacingAndGlyphs" fill="#f6f6f6">0,54</text>
<rect x="1021" y="815.7" width="453" height="30.2" fill="#808080"/>
<rect x="1004" y="815.7" width="17" height="30.2" fill="url(#rh)"/>
<text x="1026.45" y="837.20" font-size="17.8" textLength="74.48" lengthAdjust="spacingAndGlyphs" fill="#f6f6f6">Target Y</text>
<text x="1168.11" y="837.20" font-size="17.8" textLength="49.45" lengthAdjust="spacingAndGlyphs" fill="#f6f6f6">78,27</text>
<text x="1230.01" y="837.20" font-size="17.8" textLength="49.45" lengthAdjust="spacingAndGlyphs" fill="#f6f6f6">76,87</text>
<text x="1292.01" y="837.20" font-size="17.8" textLength="49.45" lengthAdjust="spacingAndGlyphs" fill="#f6f6f6">75,71</text>
<text x="1354.11" y="837.20" font-size="17.8" textLength="49.45" lengthAdjust="spacingAndGlyphs" fill="#f6f6f6">74,75</text>
<text x="1416.61" y="837.20" font-size="17.8" textLength="49.45" lengthAdjust="spacingAndGlyphs" fill="#f6f6f6">73,91</text>
<clipPath id="yc"><rect x="0" y="0" width="1714.2" height="891"/></clipPath>
<rect x="1005.45" y="44.6" width="708.05" height="581.6" fill="none" stroke="#ffff00" stroke-width="7.3" clip-path="url(#yc)"/>
<rect x="1038" y="71" width="669" height="523.2" fill="#232323"/>
</svg>
<div class="g" style="left:1039px;top:74px;width:590px;height:520px;clip-path:polygon(138.3px 516.1px,138.3px 516.1px,138.3px 516.1px,138.2px 516.1px,138.2px 516.1px,138.2px 516.1px,138.1px 516.1px,138.1px 516.1px,138.0px 516.2px,138.0px 516.2px,138.0px 516.2px,137.9px 516.2px,137.9px 516.2px,137.8px 516.2px,137.8px 516.2px,137.7px 516.2px,137.7px 516.2px,137.6px 516.2px,137.5px 516.2px,137.5px 516.2px,137.4px 516.2px,137.3px 516.2px,137.3px 516.2px,137.2px 516.2px,137.1px 516.2px,137.0px 516.2px,136.9px 516.2px,136.8px 516.2px,136.7px 516.2px,136.6px 516.2px,136.5px 516.2px,136.3px 516.1px,136.1px 516.0px,136.0px 516.0px,135.7px 515.9px,135.5px 515.7px,135.3px 515.6px,135.0px 515.5px,134.8px 515.3px,134.5px 515.1px,134.2px 514.9px,133.8px 514.7px,133.4px 514.4px,133.0px 514.2px,132.6px 513.9px,132.1px 513.5px,131.6px 513.2px,131.1px 512.8px,130.6px 512.4px,130.0px 512.0px,129.4px 511.6px,128.7px 511.1px,128.0px 510.6px,127.2px 510.1px,126.3px 509.5px,125.4px 508.9px,124.4px 508.2px,123.4px 507.5px,122.3px 506.8px,121.1px 506.0px,119.9px 505.1px,118.7px 504.2px,117.3px 503.1px,115.9px 502.0px,114.4px 500.8px,112.8px 499.4px,111.2px 498.0px,109.5px 496.4px,107.6px 494.5px,105.6px 492.2px,103.4px 489.6px,101.1px 486.7px,98.6px 483.3px,95.9px 479.6px,93.2px 475.4px,90.2px 470.8px,87.1px 465.4px,83.7px 459.3px,80.2px 452.6px,76.5px 445.2px,72.5px 436.9px,68.3px 427.7px,63.8px 417.7px,59.2px 406.7px,54.6px 394.7px,50.0px 381.6px,45.3px 367.4px,40.6px 352.2px,36.1px 336.2px,31.5px 319.1px,27.0px 300.9px,22.6px 282.1px,18.7px 263.2px,15.1px 243.9px,11.7px 224.2px,8.8px 204.4px,6.5px 185.2px,4.8px 166.5px,3.5px 148.0px,2.9px 130.0px,3.1px 113.0px,4.0px 96.8px,5.6px 81.3px,8.0px 66.9px,11.0px 53.9px,15.0px 42.2px,19.7px 31.8px,25.1px 22.9px,30.9px 15.5px,37.3px 10.0px,44.2px 6.1px,51.5px 3.5px,59.0px 2.0px,66.7px 1.7px,74.6px 2.7px,82.7px 4.5px,90.7px 6.7px,98.8px 9.2px,106.9px 12.4px,115.0px 15.8px,122.9px 19.3px,130.6px 22.9px,138.2px 26.6px,145.8px 30.4px,153.2px 34.4px,160.6px 38.4px,167.9px 42.6px,175.1px 46.9px,182.4px 51.3px,189.6px 55.8px,196.8px 60.4px,204.0px 65.1px,211.1px 69.9px,218.3px 74.8px,225.4px 79.7px,232.5px 84.7px,239.6px 89.8px,246.7px 94.9px,253.7px 100.0px,260.8px 105.2px,267.9px 110.5px,275.0px 115.8px,282.1px 121.1px,289.3px 126.5px,296.4px 131.8px,303.4px 137.2px,310.5px 142.6px,317.6px 148.1px,324.6px 153.5px,331.7px 158.9px,338.7px 164.3px,345.8px 169.7px,352.7px 175.1px,359.7px 180.5px,366.6px 185.9px,373.5px 191.2px,380.3px 196.5px,387.1px 201.8px,393.8px 207.0px,400.5px 212.2px,407.1px 217.4px,413.6px 222.4px,420.1px 227.5px,426.5px 232.4px,432.7px 237.3px,438.9px 242.1px,445.0px 246.9px,451.0px 251.5px,456.9px 256.1px,462.6px 260.5px,468.2px 264.9px,473.6px 269.2px,478.9px 273.3px,483.9px 277.2px,488.8px 281.0px,493.5px 284.6px,498.0px 288.1px,502.5px 291.6px,506.8px 294.9px,510.9px 298.2px,514.9px 301.2px,518.6px 304.1px,522.2px 306.9px,525.6px 309.5px,528.8px 312.0px,531.9px 314.4px,534.8px 316.7px,537.6px 318.8px,540.2px 320.9px,542.7px 322.8px,545.0px 324.6px,547.2px 326.3px,549.3px 328.0px,551.2px 329.5px,553.1px 330.9px,554.8px 332.3px,556.5px 333.5px,558.1px 334.8px,559.5px 335.9px,560.9px 337.0px,562.3px 338.1px,563.6px 339.1px,564.8px 340.1px,566.0px 341.0px,567.1px 341.9px,568.2px 342.7px,569.2px 343.5px,570.2px 344.2px,571.1px 345.0px,572.0px 345.6px,572.8px 346.2px,573.6px 346.8px,574.3px 347.4px,574.9px 347.9px,575.6px 348.4px,576.1px 348.8px,576.7px 349.2px,577.2px 349.6px,577.6px 350.0px,578.1px 350.3px,578.5px 350.7px,578.9px 351.0px,579.2px 351.2px,579.5px 351.5px,579.8px 351.7px,580.1px 351.9px,580.3px 352.1px,580.5px 352.2px,580.7px 352.4px,580.9px 352.6px,581.1px 352.7px,581.3px 352.8px,581.4px 353.0px,581.6px 353.1px,581.7px 353.2px,581.8px 353.3px,582.0px 353.4px,582.1px 353.5px,582.3px 353.6px,582.4px 353.7px,582.5px 353.8px,582.7px 353.9px,582.8px 354.0px,582.9px 354.1px,583.0px 354.2px,583.1px 354.3px,583.2px 354.3px,583.3px 354.4px,583.3px 354.4px,583.4px 354.5px,583.4px 354.5px,583.5px 354.5px,583.5px 354.6px,583.5px 354.6px,583.5px 354.6px,583.6px 354.6px,583.6px 354.6px)"><i></i><i style="background:linear-gradient(90deg,#0f0 57px,#0f0 70px)"></i><i style="background:linear-gradient(90deg,#0f0 53px,#0f0 77px)"></i><i style="background:linear-gradient(90deg,#0f0 49px,#0f0 82px)"></i><i style="background:linear-gradient(90deg,#0f0 46px,#0f0 86px)"></i><i style="background:linear-gradient(90deg,#0f0 43px,#0f0 90px)"></i><i style="background:linear-gradient(90deg,#0f0 41px,#0f0 93px)"></i><i style="background:linear-gradient(90deg,#0f0 39px,#0f0 96px)"></i><i style="background:linear-gradient(90deg,#0f0 37px,#0f0 99px)"></i><i style="background:linear-gradient(90deg,#0f0 36px,#0f0 102px)"></i><i style="background:linear-gradient(90deg,#0f0 35px,#0f0 105px)"></i><i style="background:linear-gradient(90deg,#0f0 33px,#0f0 107px)"></i><i style="background:linear-gradient(90deg,#0f0 32px,#0f0 110px)"></i><i style="background:linear-gradient(90deg,#0f0 31px,#0f0 112px)"></i><i style="background:linear-gradient(90deg,#0f0 30px,#0f0 115px)"></i><i style="background:linear-gradient(90deg,#0f0 29px,#0f0 117px)"></i><i style="background:linear-gradient(90deg,#0f0 28px,#0f0 119px)"></i><i style="background:linear-gradient(90deg,#00ff01 27px,#0f0 121px)"></i><i style="background:linear-gradient(90deg,#00ff01 27px,#0f0 124px)"></i><i style="background:linear-gradient(90deg,#00ff01 26px,#0f0 126px)"></i><i style="background:linear-gradient(90deg,#00ff02 25px,#0f0 128px)"></i><i style="background:linear-gradient(90deg,#00ff03 24px,#0f0 36px,#0f0 130px)"></i><i style="background:linear-gradient(90deg,#00ff03 23px,#0f0 38px,#0f0 132px)"></i><i style="background:linear-gradient(90deg,#00ff04 23px,#0f0 39px,#0f0 134px)"></i><i style="background:linear-gradient(90deg,#00ff04 22px,#0f0 41px,#0f0 137px)"></i><i style="background:linear-gradient(90deg,#00ff04 22px,#0f0 43px,#0f0 139px)"></i><i style="background:linear-gradient(90deg,#00ff05 21px,#0f0 44px,#0f0 141px)"></i><i style="background:linear-gradient(90deg,#00ff05 21px,#0f0 46px,#0f0 143px)"></i><i style="background:linear-gradient(90deg,#00ff06 20px,#0f0 47px,#0f0 144px)"></i><i style="background:linear-gradient(90deg,#00ff07 19px,#0f0 49px,#0f0 146px)"></i><i style="background:linear-gradient(90deg,#00ff07 19px,#0f0 51px,#0f0 148px)"></i><i style="background:linear-gradient(90deg,#00ff07 18px,#0f0 52px,#0f0 150px)"></i><i style="background:linear-gradient(90deg,#00ff08 18px,#0f0 54px,#0f0 152px)"></i><i style="background:linear-gradient(90deg,#00ff08 17px,#0f0 55px,#0f0 154px)"></i><i style="background:linear-gradient(90deg,#00ff09 17px,#0f0 57px,#0f0 156px)"></i><i style="background:linear-gradient(90deg,#00ff09 16px,#0f0 59px,#0f0 158px)"></i><i style="background:linear-gradient(90deg,#00ff0a 16px,#0f0 60px,#0f0 159px)"></i><i style="background:linear-gradient(90deg,#00ff0a 15px,#0f0 62px,#0f0 161px)"></i><i style="background:linear-gradient(90deg,#00ff0b 15px,#0f0 63px,#0f0 163px)"></i><i style="background:linear-gradient(90deg,#00ff0b 14px,#0f0 65px,#0f0 165px)"></i><i style="background:linear-gradient(90deg,#00ff0c 14px,#0f0 67px,#0f0 167px)"></i><i style="background:linear-gradient(90deg,#00ff0c 14px,#0f0 68px,#0f0 168px)"></i><i style="background:linear-gradient(90deg,#00ff0d 13px,#0f0 70px,#0f0 170px)"></i><i style="background:linear-gradient(90deg,#00ff0d 13px,#0f0 72px,#0f0 172px)"></i><i style="background:linear-gradient(90deg,#00ff0d 13px,#0f0 73px,#0f0 173px)"></i><i style="background:linear-gradient(90deg,#00ff0e 12px,#0f0 75px,#0f0 175px)"></i><i style="background:linear-gradient(90deg,#00ff0e 12px,#0f0 76px,#0f0 177px)"></i><i style="background:linear-gradient(90deg,#00ff0f 12px,#0f0 78px,#0f0 178px)"></i><i style="background:linear-gradient(90deg,#00ff0f 11px,#0f0 80px,#0f0 180px)"></i><i style="background:linear-gradient(90deg,#00ff10 11px,#0f0 81px,#0f0 182px)"></i><i style="background:linear-gradient(90deg,#00ff10 11px,#0f0 83px,#0f0 183px)"></i><i style="background:linear-gradient(90deg,#0f1 10px,#0f0 84px,#0f0 185px)"></i><i style="background:linear-gradient(90deg,#0f1 10px,#0f0 86px,#0f0 187px)"></i><i style="background:linear-gradient(90deg,#00ff12 10px,#0f0 88px,#0f0 188px)"></i><i style="background:linear-gradient(90deg,#00ff12 9px,#0f0 89px,#0f0 190px)"></i><i style="background:linear-gradient(90deg,#00ff13 9px,#0f0 91px,#0f0 191px)"></i><i style="background:linear-gradient(90deg,#00ff13 9px,#0f0 92px,#0f0 193px)"></i><i style="background:linear-gradient(90deg,#00ff14 9px,#0f0 94px,#0f0 195px)"></i><i style="background:linear-gradient(90deg,#00ff14 8px,#0f0 96px,#0f0 196px)"></i><i style="background:linear-gradient(90deg,#00ff15 8px,#0f0 97px,#0f0 198px)"></i><i style="background:linear-gradient(90deg,#00ff15 8px,#0f0 99px,#0f0 199px)"></i><i style="background:linear-gradient(90deg,#00ff15 8px,#0f0 100px,#0f0 201px)"></i><i style="background:linear-gradient(90deg,#00ff16 7px,#0f0 102px,#0f0 202px)"></i><i style="background:linear-gradient(90deg,#00ff17 7px,#0f0 104px,#0f0 204px)"></i><i style="background:linear-gradient(90deg,#00ff17 7px,#0f0 105px,#0f0 205px)"></i><i style="background:linear-gradient(90deg,#00ff17 7px,#0f0 107px,#0f0 207px)"></i><i style="background:linear-gradient(90deg,#00ff18 6px,#0f0 108px,#0f0 208px)"></i><i style="background:linear-gradient(90deg,#00ff18 6px,#0f0 110px,#0f0 210px)"></i><i style="background:linear-gradient(90deg,#00ff19 6px,#0f0 112px,#0f0 211px)"></i><i style="background:linear-gradient(90deg,#00ff19 6px,#0f0 113px,#0f0 213px)"></i><i style="background:linear-gradient(90deg,#00ff1a 6px,#0f0 115px,#0f0 214px)"></i><i style="background:linear-gradient(90deg,#00ff1a 6px,#0f0 117px,#0f0 216px)"></i><i style="background:linear-gradient(90deg,#00ff1b 5px,#0f0 118px,#0f0 217px)"></i><i style="background:linear-gradient(90deg,#00ff1b 5px,#0f0 120px,#0f0 219px)"></i><i style="background:linear-gradient(90deg,#00ff1c 5px,#0f0 121px,#0f0 220px)"></i><i style="background:linear-gradient(90deg,#00ff1c 5px,#0f0 123px,#0f0 222px)"></i><i style="background:linear-gradient(90deg,#00ff1d 5px,#0f0 125px,#0f0 223px)"></i><i style="background:linear-gradient(90deg,#00ff1d 5px,#0f0 126px,#0f0 224px)"></i><i style="background:linear-gradient(90deg,#00ff1e 4px,#0f0 128px,#0f0 226px)"></i><i style="background:linear-gradient(90deg,#00ff1e 4px,#0f0 129px,#0f0 227px)"></i><i style="background:linear-gradient(90deg,#00ff1f 4px,#0f0 131px,#0f0 229px)"></i><i style="background:linear-gradient(90deg,#00ff1f 4px,#0f0 133px,#0f0 230px)"></i><i style="background:linear-gradient(90deg,#00ff20 4px,#0f0 134px,#0f0 232px)"></i><i style="background:linear-gradient(90deg,#00ff20 4px,#0f0 136px,#0f0 233px)"></i><i style="background:linear-gradient(90deg,#00ff20 4px,#0f0 137px,#0f0 234px)"></i><i style="background:linear-gradient(90deg,#00ff21 4px,#0f0 139px,#0f0 236px)"></i><i style="background:linear-gradient(90deg,#00ff21 4px,#0f0 141px,#0f0 237px)"></i><i style="background:linear-gradient(90deg,#0f2 3px,#0f0 142px,#0f0 239px)"></i><i style="background:linear-gradient(90deg,#00ff23 3px,#0f0 144px,#0f0 240px)"></i><i style="background:linear-gradient(90deg,#00ff23 3px,#0f0 146px,#0f0 241px)"></i><i style="background:linear-gradient(90deg,#00ff23 3px,#0f0 147px,#0f0 243px)"></i><i style="background:linear-gradient(90deg,#00ff24 3px,#0f0 149px,#0f0 244px)"></i><i style="background:linear-gradient(90deg,#00ff24 3px,#0f0 150px,#0f0 246px)"></i><i style="background:linear-gradient(90deg,#00ff25 3px,#0f0 152px,#0f0 247px)"></i><i style="background:linear-gradient(90deg,#00ff25 3px,#0f0 154px,#0f0 248px)"></i><i style="background:linear-gradient(90deg,#00ff26 3px,#0f0 155px,#0f0 250px)"></i><i style="background:linear-gradient(90deg,#00ff27 2px,#0f0 157px,#0f0 251px)"></i><i style="background:linear-gradient(90deg,#00ff27 2px,#0f0 158px,#0f0 252px)"></i><i style="background:linear-gradient(90deg,#00ff28 2px,#0f0 160px,#0f0 254px)"></i><i style="background:linear-gradient(90deg,#00ff28 2px,#0f0 162px,#0f0 255px)"></i><i style="background:linear-gradient(90deg,#00ff29 2px,#0f0 163px,#0f0 254px,#03ff00 257px)"></i><i style="background:linear-gradient(90deg,#00ff29 2px,#0f0 165px,#0f0 254px,#04ff00 258px)"></i><i style="background:linear-gradient(90deg,#00ff2a 2px,#0f0 166px,#0f0 254px,#06ff00 259px)"></i><i style="background:linear-gradient(90deg,#00ff2a 2px,#0f0 168px,#0f0 253px,#09ff00 261px)"></i><i style="background:linear-gradient(90deg,#00ff2b 2px,#0f0 170px,#0f0 253px,#0bff00 262px)"></i><i style="background:linear-gradient(90deg,#00ff2b 2px,#00ff17 90px,#0f0 171px,#0f0 253px,#0dff00 263px)"></i><i style="background:linear-gradient(90deg,#00ff2c 2px,#00ff17 91px,#0f0 173px,#0f0 252px,#10ff00 265px)"></i><i style="background:linear-gradient(90deg,#00ff2c 2px,#00ff17 92px,#0f0 174px,#0f0 252px,#12ff00 266px)"></i><i style="background:linear-gradient(90deg,#00ff2d 2px,#00ff18 93px,#0f0 176px,#0f0 252px,#14ff00 267px)"></i><i style="background:linear-gradient(90deg,#00ff2d 2px,#00ff18 94px,#0f0 178px,#0f0 251px,#17ff00 269px)"></i><i style="background:linear-gradient(90deg,#00ff2e 2px,#00ff18 95px,#0f0 179px,#0f0 251px,#19ff00 270px)"></i><i style="background:linear-gradient(90deg,#00ff2e 2px,#00ff18 96px,#0f0 181px,#0f0 251px,#1bff00 271px)"></i><i style="background:linear-gradient(90deg,#00ff2f 2px,#00ff19 96px,#0f0 183px,#0f0 250px,#1eff00 273px)"></i><i style="background:linear-gradient(90deg,#00ff2f 2px,#00ff19 98px,#0f0 184px,#0f0 250px,#20ff00 274px)"></i><i style="background:linear-gradient(90deg,#00ff30 2px,#00ff19 98px,#0f0 186px,#0f0 249px,#2f0 275px)"></i><i style="background:linear-gradient(90deg,#00ff30 2px,#00ff1a 99px,#0f0 187px,#0f0 249px,#25ff00 277px)"></i><i style="background:linear-gradient(90deg,#00ff31 2px,#00ff1a 101px,#0f0 189px,#0f0 249px,#27ff00 278px)"></i><i style="background:linear-gradient(90deg,#00ff31 2px,#00ff1a 101px,#0f0 191px,#0f0 248px,#2bff00 280px)"></i><i style="background:linear-gradient(90deg,#00ff32 2px,#00ff1a 102px,#0f0 192px,#0f0 248px,#2dff00 281px)"></i><i style="background:linear-gradient(90deg,#0f3 2px,#00ff1b 103px,#0f0 194px,#0f0 248px,#2fff00 282px)"></i><i style="background:linear-gradient(90deg,#0f3 2px,#00ff1b 104px,#0f0 195px,#0f0 247px,#3f0 284px)"></i><i style="background:linear-gradient(90deg,#00ff34 2px,#00ff1b 105px,#0f0 197px,#0f0 247px,#35ff00 285px)"></i><i style="background:linear-gradient(90deg,#00ff34 2px,#00ff1c 106px,#0f0 199px,#0f0 247px,#37ff00 286px)"></i><i style="background:linear-gradient(90deg,#00ff35 2px,#00ff1c 107px,#0f0 200px,#0f0 246px,#39ff00 287px)"></i><i style="background:linear-gradient(90deg,#00ff36 1px,#00ff1c 107px,#0f0 202px,#0f0 246px,#3dff00 289px)"></i><i style="background:linear-gradient(90deg,#00ff36 1px,#00ff1d 108px,#0f0 203px,#0f0 246px,#3fff00 290px)"></i><i style="background:linear-gradient(90deg,#00ff37 1px,#00ff1d 109px,#0f0 205px,#0f0 245px,#41ff00 291px)"></i><i style="background:linear-gradient(90deg,#00ff37 1px,#00ff1d 110px,#0f0 207px,#0f0 245px,#45ff00 293px)"></i><i style="background:linear-gradient(90deg,#00ff38 1px,#00ff1e 111px,#0f0 208px,#0f0 245px,#48ff00 294px)"></i><i style="background:linear-gradient(90deg,#00ff38 1px,#00ff1e 112px,#0f0 210px,#0f0 244px,#4aff00 295px)"></i><i style="background:linear-gradient(90deg,#00ff39 1px,#00ff1e 113px,#0f0 211px,#0f0 244px,#4eff00 297px)"></i><i style="background:linear-gradient(90deg,#00ff39 1px,#00ff1f 114px,#0f0 213px,#0f0 244px,#50ff00 298px)"></i><i style="background:linear-gradient(90deg,#00ff3a 2px,#00ff1f 115px,#0f0 215px,#0f0 243px,#24ff00 269px,#53ff00 299px)"></i><i style="background:linear-gradient(90deg,#00ff3a 2px,#00ff1f 116px,#0f0 216px,#0f0 243px,#57ff00 301px)"></i><i style="background:linear-gradient(90deg,#00ff3b 2px,#00ff20 117px,#0f0 218px,#0f0 242px,#26ff00 269px,#59ff00 302px)"></i><i style="background:linear-gradient(90deg,#00ff3c 2px,#00ff20 118px,#0f0 220px,#0f0 242px,#29ff00 271px,#5cff00 303px)"></i><i style="background:linear-gradient(90deg,#00ff3c 2px,#00ff20 119px,#0f0 221px,#0f0 242px,#2fff00 274px,#60ff00 305px)"></i><i style="background:linear-gradient(90deg,#00ff3d 2px,#00ff21 120px,#0f0 223px,#0f0 241px,#2bff00 271px,#63ff00 306px)"></i><i style="background:linear-gradient(90deg,#00ff3d 2px,#00ff21 121px,#0f0 224px,#0f0 241px,#2eff00 273px,#6f0 307px)"></i><i style="background:linear-gradient(90deg,#00ff3e 2px,#00ff21 122px,#0f0 226px,#0f0 241px,#34ff00 276px,#6aff00 309px)"></i><i style="background:linear-gradient(90deg,#00ff3f 2px,#0f2 123px,#0f0 228px,#0f0 240px,#30ff00 273px,#6dff00 310px)"></i><i style="background:linear-gradient(90deg,#00ff3f 2px,#00ff27 106px,#0f0 229px,#0f0 240px,#34ff00 275px,#6fff00 311px)"></i><i style="background:linear-gradient(90deg,#00ff40 2px,#00ff26 110px,#0f0 231px,#0f0 240px,#37ff00 277px,#72ff00 312px)"></i><i style="background:linear-gradient(90deg,#00ff40 2px,#00ff26 115px,#0f0 239px,#37ff00 276px,#7f0 314px)"></i><i style="background:linear-gradient(90deg,#00ff41 2px,#00ff25 119px,#0f0 239px,#39ff00 277px,#7aff00 315px)"></i><i style="background:linear-gradient(90deg,#00ff42 2px,#00ff25 122px,#0f0 239px,#3dff00 279px,#7cff00 316px)"></i><i style="background:linear-gradient(90deg,#00ff42 2px,#00ff24 128px,#0f0 238px,#3cff00 278px,#81ff00 318px)"></i><i style="background:linear-gradient(90deg,#00ff43 2px,#00ff24 129px,#0f0 238px,#3eff00 279px,#84ff00 319px)"></i><i style="background:linear-gradient(90deg,#0f4 2px,#00ff25 129px,#00ff01 238px,#41ff00 280px,#87ff00 320px)"></i><i style="background:linear-gradient(90deg,#0f4 2px,#00ff26 128px,#00ff02 237px,#42ff00 280px,#8cff00 322px)"></i><i style="background:linear-gradient(90deg,#00ff45 2px,#00ff26 129px,#00ff03 237px,#0aff00 244px,#4f0 281px,#8fff00 323px)"></i><i style="background:linear-gradient(90deg,#00ff45 2px,#00ff27 129px,#00ff03 237px,#0eff00 246px,#47ff00 282px,#92ff00 324px)"></i><i style="background:linear-gradient(90deg,#00ff46 2px,#00ff28 128px,#00ff04 236px,#10ff00 247px,#47ff00 282px,#97ff00 326px)"></i><i style="background:linear-gradient(90deg,#00ff47 2px,#00ff28 128px,#00ff05 236px,#13ff00 249px,#4aff00 283px,#9bff00 327px)"></i><i style="background:linear-gradient(90deg,#00ff47 2px,#00ff29 127px,#00ff06 235px,#17ff00 251px,#49ff00 282px,#9eff00 328px)"></i><i style="background:linear-gradient(90deg,#00ff48 3px,#00ff2a 128px,#00ff07 235px,#19ff00 252px,#4cff00 283px,#a1ff00 329px)"></i><i style="background:linear-gradient(90deg,#00ff49 3px,#00ff2a 128px,#00ff07 235px,#1dff00 254px,#50ff00 285px,#a6ff00 331px)"></i><i style="background:linear-gradient(90deg,#00ff49 3px,#00ff2b 127px,#00ff08 234px,#1fff00 255px,#4fff00 284px,#af0 332px)"></i><i style="background:linear-gradient(90deg,#00ff4a 3px,#00ff2c 127px,#00ff09 234px,#23ff00 257px,#52ff00 285px,#adff00 333px)"></i><i style="background:linear-gradient(90deg,#00ff4b 3px,#00ff2d 127px,#00ff0a 234px,#25ff00 258px,#56ff00 287px,#b3ff00 335px)"></i><i style="background:linear-gradient(90deg,#00ff4b 3px,#00ff2d 127px,#00ff0b 233px,#29ff00 260px,#5f0 286px,#86ff00 312px,#b6ff00 336px)"></i><i style="background:linear-gradient(90deg,#00ff4c 3px,#00ff2e 127px,#00ff0b 233px,#2dff00 262px,#58ff00 287px,#89ff00 313px,#baff00 337px)"></i><i style="background:linear-gradient(90deg,#00ff4d 3px,#00ff2f 127px,#00ff0c 233px,#30ff00 263px,#5bff00 288px,#8cff00 314px,#c0ff00 339px)"></i><i style="background:linear-gradient(90deg,#00ff4d 3px,#00ff30 126px,#00ff0d 232px,#34ff00 265px,#5cff00 288px,#8fff00 315px,#c3ff00 340px)"></i><i style="background:linear-gradient(90deg,#00ff4e 3px,#00ff31 126px,#00ff0e 232px,#36ff00 266px,#5fff00 289px,#92ff00 316px,#c7ff00 341px)"></i><i style="background:linear-gradient(90deg,#00ff4f 3px,#00ff31 126px,#00ff0f 232px,#3aff00 268px,#61ff00 290px,#96ff00 317px,#cbff00 342px)"></i><i style="background:linear-gradient(90deg,#00ff4f 3px,#00ff32 126px,#00ff10 231px,#3fff00 270px,#62ff00 290px,#9f0 318px,#d1ff00 344px)"></i><i style="background:linear-gradient(90deg,#00ff50 3px,#0f3 126px,#00ff10 231px,#41ff00 271px,#65ff00 291px,#9cff00 319px,#d5ff00 345px)"></i><i style="background:linear-gradient(90deg,#00ff51 3px,#0f3 126px,#01ff11 231px,#46ff00 273px,#6f0 291px,#9eff00 319px,#d9ff00 346px)"></i><i style="background:linear-gradient(90deg,#00ff51 4px,#00ff34 126px,#00ff12 230px,#48ff00 274px,#69ff00 292px,#a3ff00 321px,#dfff00 348px)"></i><i style="background:linear-gradient(90deg,#00ff52 4px,#00ff35 126px,#00ff13 230px,#4dff00 276px,#6cff00 293px,#a7ff00 322px,#e3ff00 349px)"></i><i style="background:linear-gradient(90deg,#00ff53 4px,#00ff36 126px,#01ff14 230px,#51ff00 278px,#6dff00 293px,#a8ff00 322px,#e8ff00 350px)"></i><i style="background:linear-gradient(90deg,#00ff53 4px,#00ff37 125px,#00ff15 229px,#54ff00 279px,#70ff00 294px,#aeff00 324px,#ef0 352px)"></i><i style="background:linear-gradient(90deg,#00ff54 4px,#00ff37 125px,#00ff16 229px,#59ff00 281px,#73ff00 295px,#b1ff00 325px,#f2ff00 353px)"></i><i style="background:linear-gradient(90deg,#0f5 4px,#00ff38 125px,#00ff17 228px,#28ff0d 253px,#5bff00 282px,#72ff00 294px,#b3ff00 325px,#f7ff00 354px)"></i><i style="background:linear-gradient(90deg,#00ff56 4px,#00ff39 125px,#00ff18 228px,#2eff0c 256px,#60ff00 284px,#76ff00 295px,#b7ff00 326px,#fbff00 355px)"></i><i style="background:linear-gradient(90deg,#00ff56 4px,#00ff3a 125px,#00ff18 228px,#37ff0b 261px,#65ff00 286px,#73ff00 293px,#b6ff00 325px,#fdff00 355px,#fffc00 357px)"></i><i style="background:linear-gradient(90deg,#00ff57 4px,#00ff3b 124px,#00ff19 227px,#2fff0e 256px,#6aff00 288px,#b1ff00 322px,#ff0 355px,#fff700 358px)"></i><i style="background:linear-gradient(90deg,#00ff58 4px,#00ff3c 124px,#00ff1a 227px,#33ff0e 258px,#6dff00 289px,#b4ff00 323px,#ff0 354px,#fff300 359px)"></i><i style="background:linear-gradient(90deg,#00ff59 4px,#00ff3c 124px,#00ff1b 227px,#3aff0d 261px,#78ff00 294px,#b8ff00 324px,#feff00 353px,#ffed00 361px)"></i><i style="background:linear-gradient(90deg,#00ff59 5px,#00ff3d 124px,#00ff1c 226px,#37ff0f 259px,#75ff00 292px,#b7ff00 323px,#fdff00 352px,#ffe900 362px)"></i><i style="background:linear-gradient(90deg,#00ff5a 5px,#00ff3e 124px,#00ff1d 226px,#39ff0f 260px,#76ff01 292px,#b7ff00 322px,#fdff00 351px,#ff0 352px,#ffe500 363px)"></i><i style="background:linear-gradient(90deg,#00ff5b 5px,#00ff3f 124px,#01ff1e 226px,#3aff10 260px,#78ff02 292px,#b8ff00 322px,#ff0 351px,#ffe100 364px)"></i><i style="background:linear-gradient(90deg,#00ff5b 5px,#00ff3f 124px,#00ff1f 225px,#38ff12 258px,#77ff03 291px,#83ff00 297px,#b8ff00 321px,#feff00 350px,#ffdb00 366px)"></i><i style="background:linear-gradient(90deg,#00ff5c 5px,#00ff40 124px,#00ff20 225px,#3aff12 259px,#78ff04 291px,#89ff00 299px,#b9ff00 321px,#feff00 349px,#ffd700 367px)"></i><i style="background:linear-gradient(90deg,#00ff5d 5px,#00ff41 124px,#01ff21 225px,#39ff13 258px,#77ff05 290px,#8eff00 301px,#c4ff00 325px,#fdff00 348px,#ffd400 368px)"></i><i style="background:linear-gradient(90deg,#00ff5e 5px,#00ff42 123px,#0f2 224px,#38ff15 257px,#76ff06 289px,#92ff00 302px,#c8ff00 326px,#ff0 348px,#ffce00 370px)"></i><i style="background:linear-gradient(90deg,#00ff5e 5px,#00ff43 123px,#00ff23 224px,#39ff16 257px,#77ff07 289px,#97ff00 304px,#caff00 326px,#feff00 347px,#ffe300 359px,#ffcb00 371px)"></i><i style="background:linear-gradient(90deg,#00ff5f 5px,#0f4 123px,#00ff24 223px,#35ff18 254px,#74ff09 287px,#9bff00 305px,#cbff00 326px,#feff00 346px,#ffdf00 360px,#ffc700 372px)"></i><i style="background:linear-gradient(90deg,#00ff60 5px,#00ff45 123px,#00ff25 223px,#37ff18 255px,#76ff0a 287px,#a1ff00 307px,#fdff00 345px,#fd0 360px,#ffc400 373px)"></i><i style="background:linear-gradient(90deg,#00ff61 6px,#00ff46 123px,#00ff26 223px,#3aff18 256px,#77ff0b 287px,#a7ff00 309px,#ff0 345px,#fd0 359px,#ffbf00 375px)"></i><i style="background:linear-gradient(90deg,#00ff61 6px,#00ff46 123px,#00ff27 222px,#35ff1b 253px,#76ff0c 286px,#abff00 310px,#ff0 344px,#ffdc00 359px,#ffbc00 376px)"></i><i style="background:linear-gradient(90deg,#00ff62 6px,#00ff47 123px,#00ff28 222px,#3aff1b 255px,#77ff0d 286px,#b1ff00 312px,#feff00 343px,#ffd800 360px,#ffb900 377px)"></i><i style="background:linear-gradient(90deg,#00ff63 6px,#00ff48 123px,#00ff29 222px,#3bff1c 255px,#78ff0e 286px,#b5ff00 313px,#fdff00 342px,#ffd400 361px,#ffb400 379px)"></i><i style="background:linear-gradient(90deg,#00ff64 6px,#00ff49 122px,#00ff2a 221px,#36ff1e 252px,#75ff0f 284px,#bf0 315px,#fffe00 342px,#ffd400 360px,#ffb100 380px)"></i><i style="background:linear-gradient(90deg,#00ff65 6px,#00ff4a 122px,#00ff2b 221px,#3bff1e 254px,#79ff10 285px,#bfff00 316px,#ff0 341px,#ffd300 360px,#ffae00 381px)"></i><i style="background:linear-gradient(90deg,#0f6 6px,#00ff4b 122px,#01ff2c 221px,#3aff1f 253px,#78ff11 284px,#c6ff00 318px,#feff00 340px,#ffd100 360px,#ffab00 382px)"></i><i style="background:linear-gradient(90deg,#0f6 6px,#00ff4c 122px,#00ff2d 220px,#37ff21 251px,#75ff13 282px,#cf0 320px,#feff00 339px,#ffcd00 361px,#ffa700 384px)"></i><i style="background:linear-gradient(90deg,#00ff67 7px,#00ff4d 122px,#00ff2e 220px,#39ff21 252px,#76ff14 282px,#d1ff00 321px,#fffe00 339px,#ffce00 360px,#ffa400 385px)"></i><i style="background:linear-gradient(90deg,#00ff68 7px,#00ff4e 122px,#01ff2f 220px,#3aff22 252px,#77ff15 282px,#a6ff0b 303px,#d7ff00 323px,#ff0 338px,#ffe300 349px,#fc0 360px,#ffa100 386px)"></i><i style="background:linear-gradient(90deg,#00ff69 7px,#00ff4f 122px,#00ff30 219px,#37ff24 250px,#76ff16 281px,#a8ff0c 303px,#dcff00 324px,#ff0 337px,#ffe100 349px,#ffc800 361px,#ff9d00 388px)"></i><i style="background:linear-gradient(90deg,#00ff6a 7px,#00ff4f 122px,#00ff31 219px,#3aff25 251px,#78ff17 281px,#acff0c 304px,#e3ff00 326px,#feff00 336px,#ffe000 349px,#ffc700 361px,#ff9b00 389px)"></i><i style="background:linear-gradient(90deg,#00ff6a 7px,#00ff51 121px,#00ff32 218px,#33ff27 247px,#74ff19 279px,#b5ff0b 307px,#eaff00 328px,#fffe00 336px,#ffe200 347px,#ffc700 360px,#ffaf00 374px,#ff9800 390px)"></i><i style="background:linear-gradient(90deg,#00ff6b 7px,#00ff52 121px,#0f3 218px,#38ff27 249px,#76ff1a 279px,#b6ff0c 307px,#efff00 329px,#ff0 335px,#ffe000 347px,#ffc500 360px,#ffac00 375px,#ff9600 391px)"></i><i style="background:linear-gradient(90deg,#00ff6c 7px,#00ff52 121px,#00ff34 218px,#39ff28 249px,#77ff1b 279px,#b8ff0d 307px,#ff0 334px,#ffdf00 347px,#ffc200 361px,#ffa900 376px,#ff9200 393px)"></i><i style="background:linear-gradient(90deg,#00ff6d 7px,#00ff53 121px,#00ff36 217px,#36ff2a 247px,#76ff1d 278px,#b7ff0f 306px,#feff00 333px,#fd0 347px,#ffc000 361px,#ffa600 377px,#ff9000 394px)"></i><i style="background:linear-gradient(90deg,#00ff6e 8px,#00ff54 121px,#00ff37 217px,#39ff2b 248px,#77ff1d 278px,#b9ff10 306px,#feff01 332px,#ffdb00 347px,#ffbf00 361px,#ffa500 377px,#ff8d00 395px)"></i><i style="background:linear-gradient(90deg,#00ff6f 8px,#0f5 121px,#00ff38 217px,#3aff2c 248px,#76ff1f 277px,#b6ff12 304px,#fffe02 332px,#ffdb00 346px,#ffbd00 361px,#ffa200 378px,#ff8a00 397px)"></i><i style="background:linear-gradient(90deg,#00ff6f 8px,#00ff57 120px,#00ff39 216px,#35ff2e 245px,#75ff20 276px,#b7ff13 304px,#ffff04 331px,#ffdc00 345px,#ffbc00 361px,#ffa100 378px,#ff8700 398px)"></i><i style="background:linear-gradient(90deg,#00ff70 8px,#00ff57 121px,#00ff3a 216px,#3aff2e 247px,#77ff21 276px,#b9ff14 304px,#feff05 330px,#ffe800 339px,#ffda00 345px,#ffba00 361px,#ff9e00 379px,#ff8500 399px)"></i><i style="background:linear-gradient(90deg,#00ff71 8px,#00ff58 121px,#01ff3b 216px,#3bff2f 247px,#78ff22 276px,#b8ff15 303px,#feff07 329px,#ffe100 341px,#ffb900 361px,#ff9d00 379px,#ff8300 400px)"></i><i style="background:linear-gradient(90deg,#00ff72 8px,#00ff59 120px,#00ff3c 215px,#36ff31 244px,#75ff24 274px,#b5ff17 301px,#fffe08 329px,#fd0 342px,#ffb700 361px,#ff9a00 380px,#ff8000 402px)"></i><i style="background:linear-gradient(90deg,#00ff73 8px,#00ff5a 120px,#00ff3d 215px,#3bff32 246px,#78ff25 275px,#b9ff18 302px,#ffff0a 328px,#ffd600 344px,#ffb500 361px,#ff9700 381px,#ff7e00 403px)"></i><i style="background:linear-gradient(90deg,#00ff74 9px,#00ff5b 120px,#01ff3e 215px,#39ff33 245px,#77ff26 274px,#b8ff19 301px,#ffff0b 327px,#ffd200 345px,#ffb400 361px,#ff9600 381px,#ff7b00 404px)"></i><i style="background:linear-gradient(90deg,#00ff75 9px,#00ff5c 120px,#00ff40 214px,#36ff35 243px,#76ff28 273px,#b7ff1b 300px,#feff0d 326px,#fc0 347px,#ffb200 361px,#ff9300 382px,#ff7800 406px)"></i><i style="background:linear-gradient(90deg,#00ff76 9px,#00ff5d 120px,#00ff41 214px,#39ff36 244px,#75ff2a 272px,#b4ff1d 298px,#fffe0e 326px,#ffd504 342px,#ffc700 349px,#ffb100 361px,#ff9200 382px,#ff7600 407px)"></i><i style="background:linear-gradient(90deg,#0f7 9px,#00ff5f 119px,#00ff42 213px,#34ff38 241px,#74ff2b 271px,#b6ff1e 298px,#fffe10 325px,#ffd404 342px,#ffc300 350px,#ffaf00 361px,#ff9000 383px,#ff7400 408px)"></i><i style="background:linear-gradient(90deg,#00ff78 9px,#00ff60 119px,#00ff43 213px,#37ff38 242px,#76ff2c 271px,#b8ff1f 298px,#ff1 324px,#ffd406 341px,#ffbe00 352px,#ffb000 360px,#ff8e00 383px,#ff7200 409px)"></i><i style="background:linear-gradient(90deg,#00ff78 9px,#00ff61 119px,#0f4 213px,#3aff39 243px,#77ff2d 271px,#b9ff20 298px,#feff13 323px,#ffd207 341px,#ffba00 353px,#ffac00 361px,#ff8c00 384px,#ff6f00 411px)"></i><i style="background:linear-gradient(90deg,#00ff79 9px,#00ff62 119px,#00ff46 212px,#33ff3c 239px,#74ff2f 269px,#b1ff24 294px,#fffd14 323px,#ffd008 341px,#ffb500 355px,#ffab00 361px,#ff8a00 385px,#ff6e00 412px)"></i><i style="background:linear-gradient(90deg,#00ff7a 10px,#00ff63 119px,#00ff47 212px,#38ff3c 241px,#75ff30 269px,#b5ff24 295px,#fffe16 322px,#ffd109 340px,#ffa900 361px,#f80 385px,#ff6c00 413px)"></i><i style="background:linear-gradient(90deg,#00ff7b 10px,#00ff64 119px,#00ff48 212px,#39ff3d 241px,#76ff32 269px,#b7ff25 295px,#ffff17 321px,#ffd10a 339px,#ffa800 361px,#ff8600 386px,#ff6900 415px)"></i><i style="background:linear-gradient(90deg,#00ff7c 10px,#00ff65 119px,#00ff4a 211px,#36ff3f 239px,#75ff33 268px,#b9ff26 295px,#ffff19 320px,#ffcf0b 339px,#ffa600 361px,#ff8500 386px,#ff6700 416px)"></i><i style="background:linear-gradient(90deg,#00ff7d 10px,#0f6 119px,#00ff4b 211px,#39ff40 240px,#77ff34 268px,#b8ff28 294px,#feff1b 319px,#ffcd0c 339px,#ffa500 361px,#ff8200 387px,#ff6500 417px)"></i><i style="background:linear-gradient(90deg,#00ff7e 10px,#00ff67 119px,#01ff4c 211px,#3aff41 240px,#76ff36 267px,#b4ff2a 292px,#fffe1c 319px,#ffce0e 338px,#ffa401 361px,#ff8100 387px,#ff6400 418px)"></i><i style="background:linear-gradient(90deg,#00ff7f 10px,#00ff68 118px,#00ff4d 210px,#35ff44 237px,#75ff38 266px,#b6ff2b 292px,#fffe1e 318px,#ffe315 328px,#ffcc0e 338px,#ffa202 361px,#ff7f00 388px,#ff6100 420px)"></i><i style="background:linear-gradient(90deg,#00ff80 11px,#00ff69 119px,#00ff4f 210px,#3aff44 239px,#79ff38 267px,#baff2c 293px,#ffff20 317px,#ffe317 327px,#ffcc10 337px,#ffa203 360px,#ff9800 367px,#ff7e00 388px,#ff5f00 421px)"></i><i style="background:linear-gradient(90deg,#00ff81 11px,#00ff6b 118px,#00ff50 209px,#32ff47 235px,#75ff3a 265px,#b7ff2e 291px,#feff21 316px,#ffe118 327px,#ffca11 337px,#ffa104 360px,#ff9500 368px,#ff7d00 388px,#ff5e00 422px)"></i><i style="background:linear-gradient(90deg,#00ff82 11px,#00ff6c 118px,#00ff51 209px,#35ff48 236px,#74ff3c 264px,#b1ff31 288px,#fffd22 316px,#ffe21a 326px,#ffc811 337px,#ff9e04 361px,#ff9100 370px,#ff7900 390px,#ff5b00 424px)"></i><i style="background:linear-gradient(90deg,#00ff83 11px,#00ff6d 118px,#00ff53 209px,#38ff48 237px,#76ff3d 264px,#b5ff32 289px,#fffe24 315px,#ffe21b 325px,#ffc913 336px,#ff9e05 360px,#ff8e00 371px,#ff7800 390px,#ff5a00 425px)"></i><i style="background:linear-gradient(90deg,#00ff84 11px,#00ff6e 118px,#01ff54 209px,#39ff4a 237px,#77ff3f 264px,#b7ff33 289px,#ffff26 314px,#ffe31d 324px,#ffc914 335px,#ffb20d 347px,#ff9c06 360px,#ff8b00 373px,#f70 390px,#ff5800 426px)"></i><i style="background:linear-gradient(90deg,#00ff85 11px,#00ff6f 118px,#0f5 208px,#36ff4c 235px,#76ff40 263px,#b9ff34 289px,#ffff28 313px,#ffe11e 324px,#ffc715 335px,#ff9b07 360px,#f80 374px,#ff7600 390px,#ff5600 427px)"></i><i style="background:linear-gradient(90deg,#00ff86 12px,#00ff70 118px,#00ff57 208px,#39ff4c 236px,#77ff42 263px,#b8ff36 288px,#feff2a 312px,#ffdf1f 324px,#ffc717 334px,#ffb00f 346px,#ff9a07 360px,#ff8400 376px,#ff7400 391px,#ff5400 429px)"></i><i style="background:linear-gradient(90deg,#00ff87 12px,#00ff71 118px,#00ff58 207px,#34ff4f 233px,#74ff44 261px,#b7ff38 287px,#fdff2c 311px,#ffdc20 324px,#ffc618 334px,#ffaf10 346px,#ff9808 360px,#ff8100 378px,#ff7200 392px,#ff5300 430px)"></i><i style="background:linear-gradient(90deg,#0f8 12px,#00ff73 118px,#00ff59 207px,#37ff50 234px,#75ff45 261px,#b6ff3a 286px,#fcff2e 310px,#fffe2d 311px,#ffdf22 322px,#ffc418 334px,#ffad10 346px,#ff9709 360px,#ff7e00 379px,#ff7100 392px,#ff5100 431px)"></i><i style="background:linear-gradient(90deg,#00ff89 12px,#00ff74 118px,#00ff5b 207px,#3aff51 235px,#79ff46 262px,#bbff3b 287px,#ffff2f 310px,#ffe024 321px,#ffc41a 333px,#ffab11 346px,#ff9509 360px,#ff7b00 381px,#ff6f00 393px,#ff4f00 433px)"></i><i style="background:linear-gradient(90deg,#00ff8a 12px,#00ff75 117px,#00ff5c 206px,#35ff53 232px,#76ff48 260px,#b7ff3d 285px,#feff31 309px,#ffde25 321px,#ffc41c 332px,#ffab13 345px,#ff940a 360px,#ff7800 383px,#ff6100 407px,#ff4d00 434px)"></i><i style="background:linear-gradient(90deg,#00ff8b 12px,#00ff76 117px,#00ff5e 206px,#38ff54 233px,#77ff49 260px,#b9ff3e 285px,#fdff33 308px,#ffdc26 321px,#ffc31c 332px,#ffaa13 345px,#ff940b 359px,#ff7600 384px,#ff5f00 408px,#ff4c00 435px)"></i><i style="background:linear-gradient(90deg,#00ff8c 13px,#0f7 118px,#00ff5f 206px,#39ff55 233px,#76ff4b 259px,#b8ff40 284px,#fdff35 307px,#fffe34 308px,#ffda26 321px,#ffc11d 332px,#ffa814 345px,#ff930c 359px,#ff7200 386px,#ff5e00 409px,#ff4b00 436px)"></i><i style="background:linear-gradient(90deg,#00ff8d 13px,#00ff79 117px,#00ff60 205px,#35ff57 231px,#75ff4d 258px,#b7ff42 283px,#ffff36 307px,#ffdf2a 318px,#ffc31f 330px,#ffa815 344px,#ff910d 359px,#ff7000 387px,#ff5b00 411px,#ff4800 438px)"></i><i style="background:linear-gradient(90deg,#00ff8e 13px,#00ff7a 117px,#00ff62 205px,#39ff58 232px,#76ff4e 258px,#b9ff43 283px,#feff38 306px,#ffdd2b 318px,#ffc120 330px,#ffa716 344px,#ff900d 359px,#ff6d00 389px,#ff5900 412px,#ff4700 439px)"></i><i style="background:linear-gradient(90deg,#00ff8f 13px,#00ff7b 117px,#01ff63 205px,#3aff5a 232px,#78ff50 258px,#b8ff45 282px,#feff3a 305px,#ffdb2c 318px,#ffbf21 330px,#ffa517 344px,#ff8e0e 359px,#ff6a00 391px,#ff5700 414px,#ff4600 440px)"></i><i style="background:linear-gradient(90deg,#00ff91 13px,#00ff7c 117px,#00ff65 204px,#36ff5c 230px,#74ff52 256px,#b7ff47 281px,#fdff3c 304px,#ffd92d 318px,#ffbe22 330px,#ffa418 344px,#ff8d0f 359px,#ff6800 392px,#f50 416px,#f40 442px)"></i><i style="background:linear-gradient(90deg,#00ff92 13px,#00ff7e 117px,#0f6 204px,#3aff5d 231px,#76ff53 256px,#b6ff49 280px,#fcff3e 303px,#ffff3d 304px,#ffdc2f 316px,#ffbe23 329px,#ffa419 343px,#ff8c0f 359px,#ff6500 394px,#ff4200 443px)"></i><i style="background:linear-gradient(90deg,#00ff93 14px,#00ff7f 117px,#01ff68 204px,#3bff5e 231px,#7f5 256px,#b8ff4b 280px,#ffff3f 303px,#ffdc31 315px,#ffbe25 328px,#ffa41a 342px,#ff8c11 358px,#ff7608 376px,#ff6300 395px,#ff4100 444px)"></i><i style="background:linear-gradient(90deg,#00ff94 14px,#00ff80 117px,#00ff69 203px,#37ff61 229px,#76ff57 255px,#b7ff4d 279px,#feff42 302px,#ffda32 315px,#ffbe27 327px,#ffa21b 342px,#ff8a11 358px,#ff7508 376px,#ff6100 397px,#ff4000 445px)"></i><i style="background:linear-gradient(90deg,#00ff95 14px,#00ff82 117px,#00ff6b 203px,#3bff62 230px,#77ff58 255px,#b9ff4e 279px,#fdff44 301px,#ffd833 315px,#ffbd27 327px,#ffa11c 342px,#ff8912 358px,#ff7309 377px,#ff5e00 399px,#ff3e00 447px)"></i><i style="background:linear-gradient(90deg,#00ff96 14px,#00ff83 116px,#00ff6c 202px,#33ff65 226px,#74ff5b 253px,#b5ff50 277px,#fdff46 300px,#fffe45 301px,#ffd634 315px,#ffbb28 327px,#ff9f1d 342px,#ff8813 358px,#ff7009 378px,#ff5c00 400px,#ff3d00 448px)"></i><i style="background:linear-gradient(90deg,#00ff97 14px,#00ff84 116px,#00ff6e 202px,#38ff65 228px,#78ff5c 254px,#baff52 278px,#ffff47 300px,#ffdc38 312px,#ffbb2a 326px,#ff9f1e 341px,#ff8613 358px,#ff6e09 379px,#ff5a00 402px,#ff3b00 449px)"></i><i style="background:linear-gradient(90deg,#00ff98 15px,#00ff86 116px,#00ff6f 202px,#39ff67 228px,#77ff5e 253px,#b9ff54 277px,#feff49 299px,#ffd939 312px,#ffbb2c 325px,#ff9e1f 341px,#ff8514 358px,#ff6d09 379px,#ff5800 403px,#ff3a00 451px)"></i><i style="background:linear-gradient(90deg,#0f9 15px,#00ff87 116px,#00ff71 201px,#33ff69 225px,#76ff60 252px,#b8ff56 276px,#feff4b 298px,#ffd73a 312px,#ffb92c 325px,#ff9c1f 341px,#ff8415 358px,#ff6b0a 380px,#f50 405px,#ff3800 452px)"></i><i style="background:linear-gradient(90deg,#00ff9b 15px,#0f8 116px,#00ff73 201px,#39ff6a 227px,#77ff61 252px,#b8ff58 275px,#fdff4e 297px,#fffe4d 298px,#ffd83c 311px,#ffba2e 324px,#ff9c21 340px,#ff8416 357px,#ff6a0a 380px,#ff5300 407px,#ff3700 453px)"></i><i style="background:linear-gradient(90deg,#00ff9c 15px,#00ff8a 116px,#00ff74 201px,#3aff6c 227px,#79ff63 252px,#baff59 275px,#ffff4f 297px,#ffdb3f 309px,#ffba30 323px,#ff9c22 339px,#ff8216 357px,#ff680a 381px,#ff5100 408px,#ff3600 454px)"></i><i style="background:linear-gradient(90deg,#00ff9d 15px,#00ff8b 115px,#00ff76 200px,#34ff6e 224px,#75ff65 250px,#b9ff5b 274px,#ffff51 296px,#ffd940 309px,#ffb830 323px,#ff9b23 339px,#ff8117 357px,#ff660b 382px,#ff4f00 410px,#ff3400 456px)"></i><i style="background:linear-gradient(90deg,#00ff9e 15px,#00ff8d 115px,#0f7 200px,#3aff6f 226px,#76ff67 250px,#b8ff5d 273px,#feff53 295px,#ffd640 309px,#ffb631 323px,#ff9924 339px,#ff8018 357px,#ff650b 382px,#ff4d00 411px,#f30 457px)"></i><i style="background:linear-gradient(90deg,#00ff9f 16px,#00ff8e 116px,#01ff79 200px,#3bff71 226px,#78ff68 250px,#baff5f 273px,#fdff56 294px,#ffd742 308px,#ffb633 322px,#ff9925 338px,#ff8019 356px,#ff640c 382px,#ff4b00 413px,#ff3200 458px)"></i><i style="background:linear-gradient(90deg,#00ffa1 16px,#00ff8f 115px,#00ff7b 199px,#35ff73 223px,#74ff6b 248px,#b6ff62 271px,#fcff58 293px,#fffe57 294px,#ffd543 308px,#ffb434 322px,#ff9826 338px,#ff7d19 357px,#ff610b 384px,#ff4900 415px,#ff3000 460px)"></i><i style="background:linear-gradient(90deg,#00ffa2 16px,#00ff91 115px,#00ff7c 199px,#3bff74 225px,#78ff6c 249px,#bbff63 272px,#ffff5a 293px,#ffd846 306px,#ffb736 320px,#ff9827 337px,#ff7d1a 356px,#ff600c 384px,#ff4700 416px,#ff2f00 461px)"></i><i style="background:linear-gradient(90deg,#00ffa3 16px,#00ff92 115px,#01ff7e 199px,#3aff76 224px,#77ff6e 248px,#baff65 271px,#feff5c 292px,#ffd547 306px,#ffb537 320px,#ff9628 337px,#ff7c1b 356px,#ff5f0d 384px,#ff4500 418px,#ff2e00 462px)"></i><i style="background:linear-gradient(90deg,#00ffa4 16px,#00ff94 115px,#00ff80 198px,#36ff79 222px,#76ff70 247px,#b9ff67 270px,#fdff5e 291px,#ffd348 306px,#ffb338 320px,#ff9529 337px,#ff7a1c 356px,#ff5d0d 385px,#f40 419px,#ff2d00 463px)"></i><i style="background:linear-gradient(90deg,#00ffa6 17px,#00ff95 115px,#00ff81 198px,#3aff7a 223px,#78ff72 247px,#b8ff69 269px,#fdff60 290px,#fffe60 291px,#ffd149 306px,#ffb139 320px,#ff9329 337px,#ff791c 356px,#ff5b0d 386px,#ff4200 421px,#ff2c00 465px)"></i><i style="background:linear-gradient(90deg,#00ffa7 17px,#00ff97 115px,#00ff83 197px,#33ff7d 220px,#74ff74 245px,#b7ff6c 268px,#ffff62 290px,#ffd74e 303px,#ffb33b 318px,#ff952c 335px,#ff791d 355px,#ff5a0d 386px,#ff4000 423px,#ff2b00 466px)"></i><i style="background:linear-gradient(90deg,#00ffa8 17px,#00ff98 115px,#00ff85 197px,#37ff7e 221px,#75ff76 245px,#b9ff6d 268px,#ffff65 289px,#ffd54e 303px,#ffb23c 318px,#ff932c 335px,#ff781e 355px,#ff590e 386px,#ff3e00 424px,#ff2900 467px)"></i><i style="background:linear-gradient(90deg,#00ffa9 17px,#00ff9a 115px,#00ff87 197px,#3bff7f 222px,#77ff78 245px,#b8ff70 267px,#feff67 288px,#ffd551 302px,#ffb23e 317px,#ff922d 335px,#ff761f 355px,#ff570e 387px,#ff3c00 426px,#ff2800 469px)"></i><i style="background:linear-gradient(90deg,#00ffab 17px,#00ff9b 114px,#00ff89 196px,#32ff82 218px,#73ff7a 243px,#b7ff72 266px,#fdff69 287px,#ffd351 302px,#ffb03f 317px,#ff902e 335px,#ff751f 355px,#ff550e 388px,#ff3b00 427px,#ff2700 470px)"></i><i style="background:linear-gradient(90deg,#00ffac 18px,#00ff9d 115px,#00ff8a 196px,#38ff83 220px,#75ff7c 243px,#b6ff74 265px,#fcff6c 286px,#fffe6b 287px,#ffd152 302px,#ffb041 316px,#ff902f 334px,#ff7521 354px,#ff540f 388px,#ff3900 429px,#ff2600 471px)"></i><i style="background:linear-gradient(90deg,#00ffad 18px,#00ff9e 115px,#00ff8c 196px,#3cff85 221px,#79ff7e 244px,#bbff76 266px,#ffff6e 286px,#ffd456 300px,#ffb042 315px,#ff9031 333px,#ff7421 354px,#ff530f 388px,#ff3800 430px,#ff2500 472px)"></i><i style="background:linear-gradient(90deg,#00ffaf 18px,#00ffa0 114px,#00ff8e 195px,#35ff88 218px,#75ff80 242px,#b7ff78 264px,#feff70 285px,#ffd157 300px,#ffae43 315px,#ff8f31 333px,#ff7322 354px,#ff510f 389px,#ff3600 432px,#ff2400 474px)"></i><i style="background:linear-gradient(90deg,#00ffb0 18px,#00ffa1 114px,#00ff90 195px,#39ff89 219px,#77ff82 242px,#b9ff7a 264px,#fdff73 284px,#ffd259 299px,#ffaf45 314px,#ff8f33 332px,#ff7223 353px,#ff5010 389px,#ff3500 433px,#ff2300 475px)"></i><i style="background:linear-gradient(90deg,#00ffb1 18px,#00ffa3 114px,#01ff92 195px,#3aff8b 219px,#78ff84 242px,#b8ff7d 263px,#fcff75 283px,#fffe74 284px,#ffd05a 299px,#ffad46 314px,#ff8d34 332px,#ff7124 353px,#ff4f10 389px,#ff3401 433px,#f20 476px)"></i><i style="background:linear-gradient(90deg,#00ffb3 19px,#00ffa5 114px,#00ff94 194px,#34ff8e 216px,#74ff87 240px,#b7ff7f 262px,#ff7 283px,#ffd35d 297px,#ffad48 313px,#ff8c34 332px,#ff7024 353px,#ff4e11 389px,#ff3402 432px,#ff2100 477px)"></i><i style="background:linear-gradient(90deg,#00ffb4 19px,#00ffa6 114px,#00ff95 194px,#3aff8f 218px,#79ff88 241px,#b9ff81 262px,#feff7a 282px,#ffd05e 297px,#ffab48 313px,#ff8a35 332px,#ff6f25 353px,#ff4e12 389px,#ff3302 433px,#ff1f00 479px)"></i><i style="background:linear-gradient(90deg,#00ffb5 19px,#00ffa8 114px,#01ff97 194px,#3bff91 218px,#77ff8a 240px,#b8ff84 261px,#feff7c 281px,#ffd160 296px,#ffab4a 312px,#ff8a37 331px,#ff6f26 352px,#ff4d12 388px,#ff3303 431px,#ff2e00 441px,#ff1e00 480px)"></i><i style="background:linear-gradient(90deg,#00ffb7 19px,#00ffa9 114px,#0f9 193px,#37ff93 216px,#76ff8d 239px,#b7ff86 260px,#fdff7f 280px,#fffe7e 281px,#ffce61 296px,#ffa94b 312px,#ff8837 331px,#ff6d27 352px,#ff4c13 388px,#ff3203 431px,#ff2c00 443px,#ff1d00 481px)"></i><i style="background:linear-gradient(90deg,#00ffb8 19px,#00ffab 114px,#00ff9b 193px,#3bff95 217px,#78ff8f 239px,#b9ff88 260px,#fcff81 279px,#fffe81 280px,#ffe370 288px,#ffcc62 296px,#ffa94d 311px,#ff8839 330px,#ff6c27 352px,#ff4b14 388px,#ff3103 432px,#ff2b00 444px,#ff1c00 483px)"></i><i style="background:linear-gradient(90deg,#00ffba 20px,#00ffad 114px,#01ff9d 193px,#3cff97 217px,#7aff91 239px,#bcff8a 260px,#ffff83 279px,#ffd268 293px,#ffaa4f 310px,#ff883a 329px,#ff6c29 351px,#ff5319 377px,#ff3e0c 407px,#ff2a00 445px,#ff1b00 484px)"></i><i style="background:linear-gradient(90deg,#0fb 20px,#00ffae 114px,#00ff9f 192px,#36ff9a 214px,#75ff94 237px,#b7ff8d 258px,#feff86 278px,#ffd068 293px,#ffaa51 309px,#ff883c 328px,#ff6b29 351px,#ff521a 377px,#ff3c0c 408px,#ff2800 447px,#ff1a00 485px)"></i><i style="background:linear-gradient(90deg,#00ffbd 20px,#00ffb0 114px,#00ffa1 192px,#3aff9c 215px,#77ff96 237px,#b9ff8f 258px,#fdff89 277px,#ffcd69 293px,#ffa851 309px,#ff873d 328px,#ff692a 351px,#ff511a 377px,#ff3b0d 408px,#ff2700 449px,#ff1900 486px)"></i><i style="background:linear-gradient(90deg,#00ffbe 20px,#00ffb2 113px,#00ffa3 191px,#33ff9e 212px,#73ff98 235px,#b5ff92 256px,#fcff8b 276px,#fffe8a 277px,#ffe279 285px,#ffcb6a 293px,#ffa652 309px,#ff853d 328px,#ff682b 351px,#ff4f1a 378px,#ff3a0d 409px,#ff2600 450px,#ff1800 488px)"></i><i style="background:linear-gradient(90deg,#00ffc0 20px,#00ffb4 113px,#00ffa5 191px,#39ffa0 214px,#78ff9a 236px,#b7ff94 256px,#ffff8e 276px,#ffd170 290px,#ffa855 307px,#ff853f 327px,#ff682c 350px,#ff4f1c 377px,#ff390d 409px,#ff2400 452px,#ff1700 489px)"></i><i style="background:linear-gradient(90deg,#00ffc1 21px,#00ffb5 114px,#00ffa7 191px,#3bffa2 214px,#76ff9d 235px,#baff97 256px,#feff90 275px,#ffcf71 290px,#ffa656 307px,#ff843f 327px,#ff672c 350px,#ff4e1c 377px,#ff380e 409px,#ff2300 453px,#ff1600 490px)"></i><i style="background:linear-gradient(90deg,#00ffc2 21px,#00ffb7 113px,#0fa 190px,#34ffa5 211px,#75ff9f 234px,#b8ff99 255px,#fdff93 274px,#ffcc71 290px,#ffa457 307px,#ff8240 327px,#ff662d 350px,#ff4c1c 378px,#ff370e 410px,#f20 455px,#ff1500 492px)"></i><i style="background:linear-gradient(90deg,#00ffc4 21px,#00ffb9 113px,#00ffac 190px,#38ffa7 212px,#77ffa1 234px,#b7ff9c 254px,#fdff96 273px,#fffe95 274px,#ffe584 281px,#ffcd74 289px,#ffa559 306px,#ff8242 326px,#ff652e 349px,#ff4c1d 377px,#ff370f 409px,#ff2000 457px,#ff1400 493px)"></i><i style="background:linear-gradient(90deg,#00ffc6 21px,#0fb 113px,#01ffae 190px,#39ffa9 212px,#75ffa4 233px,#b6ff9e 253px,#fcff99 272px,#fffe98 273px,#ffe285 281px,#ffca75 289px,#ffa55b 305px,#ff8243 325px,#ff642f 349px,#ff4b1e 377px,#ff350f 410px,#ff1f00 458px,#ff1400 494px)"></i><i style="background:linear-gradient(90deg,#00ffc7 22px,#00ffbc 113px,#00ffb0 189px,#35ffac 210px,#74ffa6 232px,#b9ffa1 253px,#ffff9b 272px,#ffce79 287px,#ffa55d 304px,#ff8245 324px,#ff6430 348px,#ff4b1f 376px,#ff350f 410px,#ff1e00 460px,#ff1300 495px)"></i><i style="background:linear-gradient(90deg,#00ffc9 22px,#00ffbe 113px,#00ffb2 189px,#39ffae 211px,#76ffa9 232px,#b7ffa4 252px,#feff9e 271px,#ffcb7a 287px,#ffa35e 304px,#ff8146 324px,#ff6331 348px,#ff4a1f 376px,#ff3410 410px,#ff1d00 461px,#ff1200 497px)"></i><i style="background:linear-gradient(90deg,#00ffca 22px,#01ffb4 189px,#3affb0 211px,#78ffab 232px,#baffa6 252px,#fdffa1 270px,#fffd9f 271px,#ffe48e 278px,#ffcc7c 286px,#ffa360 303px,#ff7f46 324px,#ff6231 348px,#ff481f 377px,#ff3210 411px,#ff1c00 463px,#f10 498px)"></i><i style="background:linear-gradient(90deg,#0fc 22px,#00ffb7 188px,#33ffb3 208px,#73ffae 230px,#b5ffa9 250px,#fcffa4 269px,#fffea3 270px,#ffe18e 278px,#ffc97d 286px,#ffa160 303px,#ff7e47 324px,#ff6032 348px,#ff4720 377px,#ff3211 411px,#ff1a00 465px,#ff1000 499px)"></i><i style="background:linear-gradient(90deg,#00ffcd 22px,#00ffb9 188px,#3affb5 210px,#78ffb0 231px,#bbffab 251px,#ffffa6 269px,#ffe594 276px,#ffcc82 284px,#ffa364 301px,#ff7f4a 322px,#ff6033 347px,#ff4721 376px,#ff3111 411px,#ff1900 466px,#ff0f00 501px)"></i><i style="background:linear-gradient(90deg,#00ffcf 23px,#01ffbb 188px,#38ffb7 209px,#74ffb3 229px,#b6ffae 249px,#feffa9 268px,#fffca7 269px,#ffe294 276px,#ffca82 284px,#ff9f63 302px,#ff7c49 323px,#ff5e33 348px,#ff4521 377px,#ff2f11 412px,#ff1800 468px,#ff0e00 502px)"></i><i style="background:linear-gradient(90deg,#00ffd1 23px,#00ffbd 187px,#34ffba 207px,#72ffb6 228px,#aeffb2 246px,#fdffac 267px,#fffdab 268px,#ffe397 275px,#ffca85 283px,#ff9f65 301px,#ff7c4b 322px,#ff5e34 347px,#ff4421 377px,#ff2f12 412px,#ff1700 469px,#ff0d00 503px)"></i><i style="background:linear-gradient(90deg,#00ffd2 23px,#00ffc0 187px,#3bffbc 209px,#77ffb8 229px,#b4ffb4 247px,#fffeae 267px,#ffe49b 274px,#ffcb88 282px,#ffa067 300px,#ff7c4d 321px,#ff5d36 346px,#f42 376px,#ff2e12 412px,#ff1600 471px,#ff0d00 504px)"></i><i style="background:linear-gradient(90deg,#00ffd4 23px,#00ffc2 186px,#31ffbf 205px,#73ffbb 227px,#b7ffb7 247px,#ffffb2 266px,#ffe49e 273px,#ffcb8b 281px,#ffa06a 299px,#ff7c4e 320px,#ff5c36 346px,#ff4323 376px,#ff2d12 412px,#ff1500 473px,#ff0c00 506px)"></i><i style="background:linear-gradient(90deg,#00ffd5 24px,#00ffc4 186px,#38ffc1 207px,#78ffbd 228px,#b9ffb9 247px,#feffb5 265px,#ffcc8e 280px,#ffa06c 298px,#ff7c50 319px,#ff5c38 345px,#ff4223 376px,#ff2c13 412px,#ff1400 474px,#ff0b00 507px)"></i><i style="background:linear-gradient(90deg,#00ffd7 24px,#00ffc7 186px,#39ffc3 207px,#73ffc0 226px,#adffbd 243px,#feffb8 264px,#fffcb6 265px,#ffe2a2 272px,#ffc98e 280px,#ff9e6c 298px,#ff794f 320px,#ff5a37 346px,#ff3d21 382px,#ff250e 426px,#ff1300 476px,#ff0a00 508px)"></i><i style="background:linear-gradient(90deg,#00ffd9 24px,#00ffc9 185px,#32ffc6 204px,#72ffc3 225px,#afffc0 243px,#fffdba 264px,#ffe3a5 271px,#ffca91 279px,#ff9e6f 297px,#ff7951 319px,#ff5a39 345px,#ff3c22 381px,#ff240f 426px,#ff1200 477px,#ff0900 510px)"></i><i style="background:linear-gradient(90deg,#00ffdb 24px,#0fc 185px,#39ffc9 206px,#77ffc5 226px,#b5ffc2 244px,#fffebe 263px,#ffe4a8 270px,#ffca94 278px,#ff9e71 296px,#ff7853 318px,#ff593a 344px,#ff3c23 380px,#ff240f 425px,#f10 479px,#ff0800 511px)"></i><i style="background:linear-gradient(90deg,#00ffdc 25px,#01ffce 185px,#3bffcb 206px,#79ffc8 226px,#bcffc5 245px,#ffffc1 262px,#ffe1a9 270px,#ffc795 278px,#ff9c72 296px,#ff7754 318px,#ff583b 344px,#ff3b23 380px,#ff2310 425px,#ff1000 481px,#ff0800 512px)"></i><i style="background:linear-gradient(90deg,#00ffde 25px,#00ffd1 184px,#30ffce 202px,#71ffcb 223px,#acffc9 240px,#feffc5 261px,#fffcc2 262px,#ffe1ac 269px,#ffc898 277px,#ffb084 286px,#ff9a72 296px,#ff7554 318px,#ff573b 344px,#ff3a24 380px,#ff2310 425px,#ff0f00 482px,#ff0700 513px)"></i><i style="background:linear-gradient(90deg,#00ffe0 25px,#00ffd3 184px,#37ffd1 204px,#73ffce 223px,#aeffcb 240px,#fdffc8 260px,#fffdc6 261px,#ffe2b0 268px,#ffc89b 276px,#ffb087 285px,#ff9a74 295px,#ff7556 317px,#ff563c 344px,#ff3924 381px,#ff2110 426px,#ff0e00 484px,#ff0600 515px)"></i><i style="background:linear-gradient(90deg,#00ffe2 25px,#01ffd6 184px,#39ffd3 204px,#75ffd1 223px,#b4ffce 241px,#fffeca 260px,#ffe3b3 267px,#ffc99e 275px,#ffb189 284px,#ff9a77 294px,#ff7558 316px,#ff563d 343px,#ff3825 380px,#ff2111 425px,#ff0d00 485px,#ff0500 516px)"></i><i style="background:linear-gradient(90deg,#00ffe3 25px,#00ffd8 183px,#34ffd6 202px,#77ffd4 223px,#b7ffd1 241px,#ffffce 259px,#ffe3b7 266px,#ffc9a1 274px,#ffb18c 283px,#ff9a79 293px,#ff7559 315px,#ff553f 342px,#ff3826 379px,#ff2112 424px,#ff0c00 487px,#ff0400 517px)"></i><i style="background:linear-gradient(90deg,#00ffe5 26px,#00ffdb 183px,#39ffd9 203px,#72ffd7 221px,#b6ffd4 240px,#feffd2 258px,#fffbcf 259px,#ffe0b7 266px,#ffc7a1 274px,#ffaf8d 283px,#ff987a 293px,#ff7259 316px,#ff533e 343px,#ff3726 380px,#ff1f12 426px,#ff0b00 489px,#ff0400 519px)"></i><i style="background:linear-gradient(90deg,#00ffe7 26px,#01ffdd 183px,#3affdc 203px,#74ffda 221px,#adffd8 237px,#fdffd5 257px,#fffcd3 258px,#ffe1bb 265px,#ffc7a4 273px,#ffaf8f 282px,#ff987c 292px,#ff725b 315px,#ff5340 342px,#ff3627 379px,#ff1f12 425px,#ff0a00 490px,#ff0300 520px)"></i><i style="background:linear-gradient(90deg,#00ffe9 26px,#00ffe0 182px,#32ffdf 200px,#72ffdd 220px,#afffdb 237px,#fffdd7 257px,#ffe2bf 264px,#ffc7a8 272px,#ffaf92 281px,#ff997e 291px,#ff725c 314px,#ff5341 341px,#ff3628 378px,#ff1f13 424px,#ff0900 492px,#ff0200 521px)"></i><i style="background:linear-gradient(90deg,#00ffeb 26px,#00ffe3 182px,#3affe1 202px,#78ffe0 221px,#b6ffde 238px,#fffedb 256px,#ffe2c2 263px,#ffc8ab 271px,#ffaf95 280px,#ff9981 290px,#ff725e 313px,#ff5242 341px,#ff3528 379px,#ff1e13 425px,#ff0800 493px,#ff0100 523px)"></i><i style="background:linear-gradient(90deg,#00ffed 27px,#00ffe6 181px,#2fffe4 198px,#73ffe3 219px,#b8ffe1 238px,#ffffdf 255px,#ffdfc3 263px,#ffc5ab 271px,#ffad95 280px,#ff9781 290px,#ff705f 313px,#ff5143 340px,#ff3429 378px,#ff1d14 424px,#ff0700 495px,#ff0100 524px)"></i><i style="background:linear-gradient(90deg,#00ffef 27px,#00ffe8 181px,#34ffe7 199px,#71ffe6 218px,#abffe5 234px,#feffe3 254px,#fffce0 255px,#ffdcc3 263px,#ffc3ac 271px,#ffab96 280px,#ff9582 290px,#ff6f5f 313px,#ff4f43 341px,#ff3329 379px,#ff1c14 425px,#ff0600 497px,#f00 525px)"></i><i style="background:linear-gradient(90deg,#00fff1 27px,#00ffeb 181px,#38ffea 200px,#73ffe9 218px,#aeffe8 234px,#fdffe6 253px,#fffde4 254px,#ffddc7 262px,#ffc3af 270px,#ffab99 279px,#ff9584 289px,#ff6f61 312px,#ff4f44 340px,#ff322a 378px,#ff1c15 424px,#ff0500 498px,#f00 526px)"></i><i style="background:linear-gradient(90deg,#00fff3 27px,#0fe 180px,#30ffed 197px,#72ffec 217px,#b1ffeb 234px,#fffee9 253px,#ffdecb 261px,#ffc3b2 269px,#ffab9c 278px,#ff9587 288px,#ff6e63 311px,#ff4e45 340px,#ff322a 378px,#ff1b15 425px,#ff0400 500px,#f00 528px)"></i><i style="background:linear-gradient(90deg,#00fff4 28px,#00fff1 180px,#38fff0 199px,#77ffef 218px,#b7ffef 235px,#ffffed 252px,#ffdecf 260px,#ffc4b6 268px,#ffab9f 277px,#ff9589 287px,#ff6e65 310px,#ff4e46 339px,#ff312b 377px,#ff1a16 424px,#ff0400 501px,#f00 529px)"></i><i style="background:linear-gradient(90deg,#00fff6 28px,#01fff4 180px,#39fff3 199px,#72fff3 216px,#b6fff2 234px,#fefff1 251px,#fffbee 252px,#ffdbcf 260px,#ffc1b6 268px,#ffa99f 277px,#ff938a 287px,#ff6b64 311px,#ff4b46 340px,#ff302b 378px,#ff1916 425px,#ff0300 503px,#f00 530px)"></i><i style="background:linear-gradient(90deg,#00fff9 28px,#00fff7 179px,#31fff6 196px,#71fff6 215px,#adfff6 231px,#fdfff5 250px,#fffcf2 251px,#ffdcd3 259px,#ffc2ba 267px,#ffa9a2 276px,#ff938c 286px,#ff7f79 297px,#ff6b66 310px,#ff4b47 339px,#ff2f2c 377px,#ff1916 425px,#ff0200 505px,#f00 532px)"></i><i style="background:linear-gradient(90deg,#00fffb 28px,#00fffa 179px,#39fff9 198px,#76fff9 216px,#b3fff9 232px,#fffdf7 250px,#ffddd7 258px,#ffc2bd 266px,#ffa9a5 275px,#ff918d 286px,#ff6a67 310px,#ff4a48 339px,#ff2f2d 377px,#ff1817 424px,#ff0101 504px,#f00 533px)"></i><i style="background:linear-gradient(90deg,#00fffd 29px,#01fffd 179px,#3bfffd 198px,#78fffd 216px,#b6fffd 232px,#fffefc 249px,#ffdddb 257px,#ffc2c1 265px,#ffaaa8 274px,#ff918f 285px,#ff7d7c 296px,#ff6968 309px,#ff4a49 338px,#ff2e2d 377px,#ff1717 425px,#ff0101 505px,#f00 534px)"></i><i style="background:linear-gradient(90deg,#0ff 29px,#00feff 178px,#32feff 195px,#6ffeff 213px,#acfeff 229px,#fdfeff 248px,#fffbfc 249px,#ffdadc 257px,#ffc0c1 265px,#ffa7a8 274px,#ff8f90 285px,#ff6869 309px,#ff4849 339px,#ff2c2d 378px,#ff1617 427px,#ff0001 506px,#f00 535px)"></i><i style="background:linear-gradient(90deg,#00fdff 29px,#00fbff 178px,#36fbff 196px,#73fbff 214px,#b0faff 230px,#fdfaff 248px,#fff7fd 249px,#ffd7dc 257px,#ffbdc2 265px,#ffa5a9 274px,#ff8d91 285px,#ff666a 309px,#ff4749 339px,#ff2b2d 379px,#ff1516 429px,#ff0002 503px,#f00 537px)"></i><i style="background:linear-gradient(90deg,#00fbff 29px,#01f8ff 178px,#3af8ff 197px,#74f7ff 214px,#b0f7ff 230px,#fdf6ff 248px,#fff4fd 249px,#ffd4dc 257px,#ffbbc2 265px,#ffa3aa 274px,#ff8b91 285px,#ff656a 309px,#ff454a 339px,#ff292d 380px,#ff1316 431px,#ff0003 501px,#f00 538px)"></i><i style="background:linear-gradient(90deg,#00f9ff 30px,#00f5ff 177px,#35f5ff 195px,#74f4ff 214px,#b0f3ff 230px,#fff0fd 249px,#ffd1dd 257px,#ffb8c2 265px,#ffa0aa 274px,#ff8992 285px,#ff747c 297px,#ff6269 310px,#ff4349 340px,#ff282d 381px,#ff1216 433px,#ff0003 499px,#f00 515px,#f00 539px)"></i><i style="background:linear-gradient(90deg,#00f7ff 30px,#00f2ff 177px,#39f2ff 196px,#75f1ff 214px,#b0f0ff 230px,#ffedfd 249px,#ffcedd 257px,#ffb5c3 265px,#ff9eab 274px,#ff8792 285px,#ff737d 297px,#ff616a 310px,#ff424a 340px,#ff272d 382px,#ff1015 436px,#ff0004 497px,#f00 516px,#f00 541px)"></i><i style="background:linear-gradient(90deg,#00f5ff 30px,#01f0ff 177px,#39efff 196px,#75edff 214px,#b5ecff 231px,#ffeafe 249px,#ffcbde 257px,#ffb0c0 266px,#ff9aa9 275px,#ff8391 286px,#ff6f7c 298px,#ff5e69 311px,#ff404a 341px,#ff252c 384px,#ff0f15 438px,#ff0005 494px,#f00 518px,#f00 542px)"></i><i style="background:linear-gradient(90deg,#00f3ff 31px,#00edff 176px,#37ecff 195px,#76eaff 214px,#b5e9ff 231px,#ffe6fe 249px,#ffc9de 257px,#ffaec1 266px,#ff97a9 275px,#ff8191 286px,#ff6e7c 298px,#ff5d6a 311px,#ff3f4a 341px,#ff232c 385px,#ff0e15 440px,#ff0006 492px,#f00 520px,#f00 543px)"></i><i style="background:linear-gradient(90deg,#00f1ff 31px,#00eaff 176px,#3be8ff 196px,#76e7ff 214px,#b5e5ff 231px,#ffe3fe 249px,#ffc6de 257px,#ffabc1 266px,#ff93a7 276px,#ff8092 286px,#ff6c7d 298px,#ff5b6a 311px,#ff3e4b 341px,#ff222c 386px,#ff0c14 442px,#ff0007 490px,#f00 521px,#f00 544px)"></i><i style="background:linear-gradient(90deg,#00efff 31px,#00e7ff 175px,#32e6ff 193px,#73e4ff 213px,#b5e2ff 231px,#ffe0fe 249px,#ffc3df 257px,#ffa9c2 266px,#ff91a8 276px,#ff7e92 286px,#ff6b7d 298px,#ff5a6b 311px,#ff3c4a 342px,#ff212c 387px,#ff0b14 445px,#ff0008 487px,#f00 523px,#f00 546px)"></i><i style="background:linear-gradient(90deg,#00edff 31px,#00e4ff 175px,#36e3ff 194px,#77e1ff 214px,#b9dfff 232px,#ffdcff 249px,#ffc0df 257px,#ffa6c2 266px,#ff8fa8 276px,#ff7c93 286px,#ff697e 298px,#ff586b 311px,#ff3b4b 342px,#ff1f2c 388px,#ff0a13 447px,#ff0009 485px,#f00 524px,#f00 547px)"></i><i style="background:linear-gradient(90deg,#00ebff 32px,#01e2ff 175px,#3ae0ff 195px,#78deff 214px,#b9dcff 232px,#ffd9ff 249px,#ffbde0 257px,#ffa4c3 266px,#ff8da9 276px,#ff7892 287px,#ff566b 312px,#ff394a 343px,#ff1e2b 390px,#ff0813 450px,#ff000a 483px,#f00 526px,#f00 548px)"></i><i style="background:linear-gradient(90deg,#00e9ff 32px,#00dfff 174px,#32ddff 192px,#75dbff 213px,#b9d8ff 232px,#ffd6ff 249px,#ffbbe0 257px,#ffa1c3 266px,#ff8ba9 276px,#ff7692 287px,#ff546b 312px,#ff384b 343px,#ff1c2b 391px,#ff0712 453px,#ff000a 481px,#f00 527px,#f00 550px)"></i><i style="background:linear-gradient(90deg,#00e7ff 32px,#00dcff 174px,#36daff 193px,#72d8ff 212px,#b6d5ff 231px,#fed2ff 249px,#ffcffb 250px,#ffb5dd 258px,#ff9dc1 267px,#ff87a7 277px,#ff7391 288px,#ff627c 300px,#ff5169 314px,#ff364a 345px,#ff1a2a 394px,#ff0511 458px,#ff000c 478px,#f00 529px,#f00 551px)"></i><i style="background:linear-gradient(90deg,#00e5ff 32px,#01daff 174px,#39d7ff 194px,#72d5ff 212px,#b6d2ff 231px,#fecfff 249px,#ffccfc 250px,#ffb2dd 258px,#ff9ac1 267px,#ff85a8 277px,#ff7191 288px,#ff607d 300px,#ff506a 314px,#ff354a 345px,#ff2639 368px,#ff192a 395px,#ff0411 460px,#ff000c 476px,#f00 530px,#f00 552px)"></i><i style="background:linear-gradient(90deg,#00e3ff 33px,#00d7ff 173px,#31d5ff 191px,#6fd2ff 211px,#abd0ff 228px,#feccff 249px,#ffc9fc 250px,#ffb0de 258px,#ff98c2 267px,#ff83a8 277px,#ff7092 288px,#ff5e7d 300px,#ff4e6a 314px,#ff344b 345px,#ff2539 369px,#ff182a 396px,#ff0311 462px,#ff000d 474px,#f00 532px,#f00 553px)"></i><i style="background:linear-gradient(90deg,#00e1ff 33px,#00d5ff 173px,#38d2ff 193px,#73cfff 212px,#abccff 228px,#fec9ff 249px,#ffc6fc 250px,#ffadde 258px,#ff96c2 267px,#ff81a9 277px,#ff6e92 288px,#ff5d7e 300px,#ff4d6b 314px,#ff324a 346px,#ff2339 370px,#ff1629 398px,#ff0110 466px,#f00 534px,#f00 555px)"></i><i style="background:linear-gradient(90deg,#00dfff 33px,#01d2ff 173px,#38cfff 193px,#74ccff 212px,#afc9ff 229px,#fdc5ff 249px,#ffc3fc 250px,#ffaade 258px,#ff93c3 267px,#ff7fa9 277px,#ff6c93 288px,#ff5b7e 300px,#ff4c6b 314px,#ff314b 346px,#ff2239 371px,#ff1529 399px,#ff0010 468px,#f00 535px,#f00 556px)"></i><i style="background:linear-gradient(90deg,#0df 33px,#00cfff 172px,#33cdff 191px,#71caff 211px,#afc6ff 229px,#fdc2ff 249px,#ffc0fd 250px,#ffa8df 258px,#ff91c3 267px,#ff7daa 277px,#ff6a93 288px,#ff5a7f 300px,#ff4a6c 314px,#ff304b 346px,#ff223a 370px,#ff152a 398px,#f01 466px,#f00 537px,#f00 557px)"></i><i style="background:linear-gradient(90deg,#00dbff 34px,#00cdff 172px,#3acaff 193px,#75c7ff 212px,#afc3ff 229px,#fdbfff 249px,#ffbdfd 250px,#ffa2dc 259px,#ff8dc1 268px,#ff79a8 278px,#ff6792 289px,#ff486b 315px,#ff2e4b 347px,#ff203a 371px,#ff142b 398px,#ff0012 464px,#f00 538px,#f00 559px)"></i><i style="background:linear-gradient(90deg,#00d9ff 34px,#01caff 172px,#3bc7ff 193px,#75c4ff 212px,#afc0ff 229px,#ffbafd 250px,#ffa0dc 259px,#ff8bc1 268px,#ff77a9 278px,#ff6592 289px,#ff476b 315px,#ff2d4b 347px,#ff142c 397px,#ff0013 461px,#ff0001 536px,#f00 560px)"></i><i style="background:linear-gradient(90deg,#00d8ff 34px,#00c8ff 171px,#36c5ff 191px,#72c1ff 211px,#b0bdff 229px,#ffb7fd 250px,#ff9edc 259px,#ff88c2 268px,#ff75a9 278px,#ff6493 289px,#ff537d 302px,#ff446b 316px,#ff2c4b 348px,#ff132c 397px,#ff0014 459px,#ff0002 533px,#f00 561px)"></i><i style="background:linear-gradient(90deg,#00d6ff 35px,#00c6ff 171px,#39c2ff 192px,#76beff 212px,#b3baff 230px,#ffb5fe 250px,#ff9bdd 259px,#ff86c2 268px,#ff73a9 278px,#ff6293 289px,#ff527e 302px,#ff436b 316px,#ff2b4b 348px,#ff132d 396px,#ff0015 457px,#ff0003 530px,#f00 562px)"></i><i style="background:linear-gradient(90deg,#00d4ff 35px,#01c3ff 171px,#3abfff 192px,#76bcff 212px,#b4b8ff 230px,#ffb2fe 250px,#f9d 259px,#ff84c2 268px,#ff71aa 278px,#ff6194 289px,#ff507e 302px,#ff426c 316px,#ff2a4c 348px,#ff122e 395px,#ff0016 455px,#ff0003 529px,#f00 564px)"></i><i style="background:linear-gradient(90deg,#00d2ff 35px,#00c1ff 170px,#35bdff 190px,#74b9ff 211px,#b4b5ff 230px,#ffaffe 250px,#ff96dd 259px,#ff82c3 268px,#ff70aa 278px,#ff5e92 290px,#ff4e7d 303px,#ff406b 317px,#ff284c 349px,#ff122e 395px,#ff0017 452px,#ff0004 526px,#f00 565px)"></i><i style="background:linear-gradient(90deg,#00d0ff 35px,#00bfff 170px,#3bbaff 192px,#77b6ff 212px,#b7b2ff 231px,#ffacfe 250px,#ff94de 259px,#ff80c3 268px,#ff6eab 278px,#ff5c93 290px,#ff3e6b 317px,#ff274c 349px,#ff112f 394px,#ff0018 450px,#ff0005 523px,#f00 566px)"></i><i style="background:linear-gradient(90deg,#00ceff 36px,#00bcff 169px,#33b8ff 189px,#75b4ff 211px,#b8afff 231px,#ffa9ff 250px,#ff91de 259px,#ff7ec4 268px,#ff6cab 278px,#ff5a93 290px,#ff3d6c 317px,#ff254c 350px,#ff1130 394px,#ff0019 448px,#ff0005 522px,#f00 550px,#f00 568px)"></i><i style="background:linear-gradient(90deg,#0cf 36px,#00baff 169px,#3ab6ff 191px,#78b1ff 212px,#b8acff 231px,#ffa7ff 250px,#ff8fde 259px,#ff7cc4 268px,#ff6aac 278px,#ff5994 290px,#ff3c6c 317px,#ff244c 350px,#ff1030 393px,#ff001a 445px,#ff0006 519px,#f00 552px,#f00 569px)"></i><i style="background:linear-gradient(90deg,#00cbff 36px,#01b8ff 169px,#3ab3ff 191px,#79aeff 212px,#bba9ff 232px,#ffa4ff 250px,#ff8ddf 259px,#ff7ac4 268px,#ff68ac 278px,#ff5794 290px,#ff3b6d 317px,#ff234d 350px,#ff1031 392px,#ff001c 443px,#ff0007 517px,#f00 553px,#f00 570px)"></i><i style="background:linear-gradient(90deg,#00c9ff 36px,#00b6ff 168px,#36b1ff 189px,#76acff 211px,#b8a7ff 231px,#ffa1ff 250px,#ff8adf 259px,#ff76c2 269px,#ff65aa 279px,#ff5493 291px,#ff396c 318px,#ff224c 351px,#ff0f32 392px,#ff001d 441px,#ff0008 515px,#f00 555px,#f00 571px)"></i><i style="background:linear-gradient(90deg,#00c7ff 37px,#00b3ff 168px,#36afff 189px,#73aaff 210px,#b8a4ff 231px,#fe9eff 250px,#ff9cfc 251px,#ff86dc 260px,#ff74c3 269px,#ff62a9 280px,#ff5292 292px,#ff376c 319px,#ff204c 352px,#ff0f33 391px,#ff001e 439px,#ff0008 514px,#f00 556px,#f00 573px)"></i><i style="background:linear-gradient(90deg,#00c5ff 37px,#01b1ff 168px,#3aacff 190px,#74a7ff 210px,#b8a1ff 231px,#fe9cff 250px,#ff99fc 251px,#ff84dd 260px,#ff72c3 269px,#ff60a9 280px,#ff5092 292px,#ff356c 319px,#ff1f4c 353px,#ff0e33 391px,#ff001f 436px,#ff0009 512px,#f00 558px,#f00 574px)"></i><i style="background:linear-gradient(90deg,#00c3ff 37px,#00afff 167px,#32aaff 187px,#71a5ff 209px,#aba0ff 227px,#fe99ff 250px,#ff97fc 251px,#ff81dd 260px,#ff70c3 269px,#ff5eaa 280px,#ff4f93 292px,#ff346c 319px,#ff1e4c 353px,#ff0e34 390px,#ff0020 434px,#ff000a 510px,#f00 560px,#f00 575px)"></i><i style="background:linear-gradient(90deg,#00c2ff 38px,#00adff 167px,#38a8ff 189px,#75a2ff 210px,#ae9dff 228px,#fe96ff 250px,#ff94fc 251px,#ff7fdd 260px,#ff6ec4 269px,#ff5caa 280px,#ff4d93 292px,#ff326c 320px,#ff1d4c 354px,#ff0d35 390px,#ff0021 432px,#ff000a 509px,#f00 561px,#f00 577px)"></i><i style="background:linear-gradient(90deg,#00c0ff 38px,#01aaff 167px,#39a5ff 189px,#75a0ff 210px,#ae9bff 228px,#fe93ff 250px,#ff92fd 251px,#ff7dde 260px,#ff6cc4 269px,#ff5bab 280px,#ff4c94 292px,#ff316c 320px,#ff1c4c 354px,#ff0d36 388px,#ff0023 429px,#ff000b 507px,#f00 563px,#f00 578px)"></i><i style="background:linear-gradient(90deg,#00beff 38px,#00a8ff 166px,#34a4ff 187px,#729eff 209px,#af98ff 228px,#fd91ff 250px,#ff8ffd 251px,#ff7bde 260px,#ff6ac5 269px,#ff59ab 280px,#ff4a94 292px,#ff306d 320px,#ff1b4d 354px,#ff0c36 388px,#ff0024 427px,#ff000c 505px,#f00 564px,#f00 579px)"></i><i style="background:linear-gradient(90deg,#00bcff 38px,#00a6ff 166px,#3aa1ff 189px,#769bff 210px,#b295ff 229px,#ff8dfd 251px,#ff79de 260px,#ff68c5 269px,#ff57ab 280px,#ff4995 292px,#ff2f6d 320px,#ff1a4d 354px,#ff0c37 387px,#ff0025 425px,#ff000d 503px,#f00 566px,#f00 580px)"></i><i style="background:linear-gradient(90deg,#0bf 39px,#01a4ff 166px,#3b9eff 189px,#7699ff 210px,#b293ff 229px,#ff8afd 251px,#ff77df 260px,#ff65c3 270px,#ff54aa 281px,#ff4693 293px,#ff2d6d 321px,#ff194d 355px,#ff0b38 386px,#ff0027 422px,#ff000d 502px,#f00 568px,#f00 582px)"></i><i style="background:linear-gradient(90deg,#00b9ff 39px,#00a2ff 165px,#369dff 187px,#7497ff 209px,#b290ff 229px,#ff88fe 251px,#ff74df 260px,#ff63c3 270px,#ff53aa 281px,#ff4594 293px,#ff2c6d 321px,#ff184d 355px,#ff0b39 385px,#ff0028 420px,#ff000e 500px,#f00 567px,#f00 583px)"></i><i style="background:linear-gradient(90deg,#00b7ff 39px,#00a0ff 165px,#3a9aff 188px,#7794ff 210px,#b68eff 230px,#ff85fe 251px,#ff72df 260px,#ff61c4 270px,#ff51ab 281px,#ff4394 293px,#ff2b6d 321px,#ff164d 356px,#ff0a3a 385px,#ff0029 418px,#ff000f 499px,#ff0001 565px,#f00 584px)"></i><i style="background:linear-gradient(90deg,#00b5ff 40px,#019eff 165px,#3a98ff 188px,#7792ff 210px,#b68bff 230px,#ff83fe 251px,#ff70e0 260px,#ff5fc4 270px,#ff50ab 281px,#ff4295 293px,#ff2a6e 321px,#ff154d 356px,#ff0a3b 384px,#ff002b 415px,#ff001d 452px,#ff0009 524px,#f00 585px)"></i><i style="background:linear-gradient(90deg,#00b4ff 40px,#009cff 164px,#3896ff 187px,#7590ff 209px,#b689ff 230px,#ff81fe 251px,#ff6ee0 260px,#ff5dc4 270px,#ff4eab 281px,#ff4095 293px,#ff286e 321px,#ff154e 356px,#ff093c 383px,#ff002c 413px,#ff001d 451px,#ff000a 520px,#f00 584px)"></i><i style="background:linear-gradient(90deg,#00b2ff 40px,#019aff 164px,#3b94ff 188px,#788dff 210px,#b686ff 230px,#ff7efe 251px,#ff6ce0 260px,#ff5bc5 270px,#ff4cac 281px,#ff3f96 293px,#ff276f 321px,#ff144f 355px,#ff093d 381px,#ff002e 410px,#ff001f 448px,#ff000c 513px,#f00 581px)"></i><i style="background:linear-gradient(90deg,#00b0ff 41px,#0098ff 163px,#3492ff 185px,#768bff 209px,#b684ff 230px,#ff7cff 251px,#ff6ae1 260px,#ff5ac5 270px,#ff4bac 281px,#ff3d96 293px,#ff266f 321px,#ff1450 354px,#ff093f 379px,#ff002f 408px,#ff0020 445px,#ff000e 507px,#f00 579px)"></i><i style="background:linear-gradient(90deg,#00afff 41px,#0096ff 163px,#3890ff 186px,#7689ff 209px,#ba81ff 231px,#ff7aff 251px,#ff68e1 260px,#ff58c6 270px,#ff49ad 281px,#ff3c96 293px,#ff2570 321px,#ff1351 354px,#ff0031 406px,#ff0021 444px,#ff000f 504px,#ff0001 576px)"></i><i style="background:linear-gradient(90deg,#00adff 41px,#0194ff 163px,#3b8eff 187px,#7986ff 210px,#ba7fff 231px,#f7f 251px,#ff66e1 260px,#ff56c6 270px,#ff49af 280px,#ff3c99 292px,#ff2571 320px,#ff1252 353px,#ff0032 404px,#f02 442px,#ff0010 501px,#ff0001 573px)"></i><i style="background:linear-gradient(90deg,#00abff 42px,#0093ff 162px,#368cff 185px,#7785ff 209px,#ba7dff 231px,#ff75ff 251px,#ff64e2 260px,#ff54c6 270px,#ff47b0 280px,#ff3a99 292px,#ff2472 320px,#ff1252 353px,#ff0034 401px,#ff0023 441px,#f01 499px,#ff0002 570px)"></i><i style="background:linear-gradient(90deg,#0af 42px,#0091ff 162px,#378aff 185px,#7283ff 207px,#aa7cff 226px,#fe72ff 251px,#ff71fc 252px,#ff60df 261px,#ff51c4 271px,#ff44ae 281px,#ff3898 293px,#ff2372 320px,#ff1153 353px,#ff0035 399px,#ff0023 440px,#ff0012 498px,#ff0003 568px)"></i><i style="background:linear-gradient(90deg,#00a8ff 42px,#018fff 162px,#3a88ff 186px,#7581ff 208px,#ad7aff 227px,#fe70ff 251px,#ff6efc 252px,#ff5edf 261px,#ff4fc5 271px,#ff43ae 281px,#ff3698 293px,#ff2173 320px,#ff1053 353px,#ff0037 397px,#ff0024 439px,#ff0012 496px,#ff0004 565px)"></i><i style="background:linear-gradient(90deg,#00a6ff 42px,#008dff 161px,#3686ff 184px,#727fff 207px,#ae78ff 227px,#fe6eff 251px,#ff6cfc 252px,#ff5cdf 261px,#ff4ec5 271px,#ff41af 281px,#ff3599 293px,#ff2073 320px,#ff0f54 352px,#ff0039 394px,#ff0025 438px,#ff0013 494px,#ff0004 562px)"></i><i style="background:linear-gradient(90deg,#00a5ff 43px,#008bff 161px,#3984ff 185px,#737dff 207px,#ae75ff 227px,#fe6cff 251px,#ff6afd 252px,#ff5ae0 261px,#ff4dc8 270px,#ff41b1 280px,#ff359b 292px,#ff2075 319px,#ff0f55 351px,#ff003a 392px,#ff0026 436px,#ff0014 492px,#ff0005 559px)"></i><i style="background:linear-gradient(90deg,#00a3ff 43px,#0189ff 161px,#3982ff 185px,#767aff 208px,#b173ff 228px,#fe69ff 251px,#ff68fd 252px,#ff58e0 261px,#ff4ac6 271px,#ff3dae 282px,#ff3299 293px,#ff1f75 319px,#ff0e56 351px,#ff003c 390px,#ff0027 435px,#ff0015 490px,#ff0006 556px)"></i><i style="background:linear-gradient(90deg,#00a1ff 43px,#08f 160px,#3581ff 183px,#7479ff 207px,#b171ff 228px,#ff66fd 252px,#ff57e0 261px,#ff4ac8 270px,#ff3eb2 280px,#ff329c 292px,#ff1e77 318px,#ff0e57 350px,#ff003e 387px,#ff0027 434px,#ff0015 489px,#ff0007 554px)"></i><i style="background:linear-gradient(90deg,#00a0ff 44px,#0086ff 160px,#387eff 184px,#7477ff 207px,#b16fff 228px,#ff64fd 252px,#ff55e1 261px,#ff48c9 270px,#ff3bb0 281px,#ff319c 292px,#ff1d77 318px,#ff0d58 350px,#ff003f 385px,#ff0028 433px,#ff0016 487px,#ff0007 551px)"></i><i style="background:linear-gradient(90deg,#009eff 44px,#0184ff 160px,#3b7cff 185px,#7774ff 208px,#b56cff 229px,#ff62fe 252px,#ff53e1 261px,#ff46c9 270px,#ff3ab1 281px,#ff2f9c 292px,#ff1c78 318px,#ff0c59 349px,#ff0041 383px,#ff0029 431px,#ff0017 484px,#ff0008 548px)"></i><i style="background:linear-gradient(90deg,#009dff 44px,#0082ff 159px,#377bff 183px,#7573ff 207px,#b56aff 229px,#ff5ffe 252px,#ff51e1 261px,#ff45c9 270px,#ff38b1 281px,#ff2e9d 292px,#ff1b78 318px,#ff0c5a 348px,#ff0042 381px,#ff002b 429px,#ff0018 482px,#ff0009 545px)"></i><i style="background:linear-gradient(90deg,#009bff 45px,#0080ff 159px,#3a79ff 184px,#7571ff 207px,#b568ff 229px,#ff5dfe 252px,#ff4fe2 261px,#ff43ca 270px,#ff37b1 281px,#ff2d9d 292px,#ff1a78 318px,#ff0b5a 348px,#ff0045 378px,#ff002b 428px,#ff0019 480px,#ff000a 543px)"></i><i style="background:linear-gradient(90deg,#09f 45px,#017fff 159px,#3a77ff 184px,#786eff 208px,#b865ff 230px,#ff5bfe 252px,#ff4de2 261px,#ff41ca 270px,#ff2c9f 291px,#ff1a7a 317px,#ff0b5c 347px,#ff0046 376px,#ff002c 427px,#ff001a 479px,#ff000b 540px)"></i><i style="background:linear-gradient(90deg,#0098ff 45px,#007dff 158px,#3975ff 183px,#766dff 207px,#b564ff 229px,#ff59fe 252px,#ff4be2 261px,#ff40ca 270px,#ff2ba0 291px,#ff197a 317px,#ff0a5c 347px,#ff0048 374px,#ff002d 426px,#ff001b 477px,#ff000c 537px)"></i><i style="background:linear-gradient(90deg,#0096ff 46px,#017bff 158px,#3973ff 183px,#766bff 207px,#b861ff 230px,#ff57ff 252px,#ff4ae2 261px,#ff3ecb 270px,#ff2aa0 291px,#ff187c 316px,#ff095d 346px,#ff004a 371px,#ff002e 424px,#ff001c 474px,#ff000d 534px)"></i><i style="background:linear-gradient(90deg,#0095ff 46px,#007aff 157px,#3572ff 181px,#7769ff 207px,#b85fff 230px,#f5f 252px,#ff48e3 261px,#ff3dcb 270px,#ff28a1 291px,#ff177c 316px,#ff085e 346px,#ff004c 369px,#ff002f 423px,#ff001d 473px,#ff000d 532px)"></i><i style="background:linear-gradient(90deg,#0093ff 46px,#0078ff 157px,#3a70ff 183px,#7767ff 207px,#b85dff 230px,#ff53ff 252px,#ff46e3 261px,#ff3bcb 270px,#ff27a1 291px,#ff167d 316px,#ff085f 345px,#ff004e 367px,#ff0030 421px,#ff001e 470px,#ff000e 529px)"></i><i style="background:linear-gradient(90deg,#0091ff 47px,#0176ff 157px,#3b6eff 183px,#7765ff 207px,#b95bff 230px,#ff51ff 252px,#ff44e3 261px,#ff39cc 270px,#ff26a3 290px,#ff157e 315px,#ff0760 344px,#ff0050 364px,#ff0031 420px,#ff001e 469px,#ff000f 526px)"></i><i style="background:linear-gradient(90deg,#0090ff 47px,#0075ff 156px,#376dff 181px,#7563ff 206px,#b959ff 230px,#ff4fff 252px,#ff38cc 270px,#ff25a3 290px,#ff147f 315px,#ff0761 344px,#ff0052 362px,#ff0032 419px,#ff001f 467px,#ff0010 523px)"></i><i style="background:linear-gradient(90deg,#008fff 47px,#0073ff 156px,#376bff 181px,#7362ff 205px,#ad59ff 226px,#fe4dff 252px,#ff4cfc 253px,#ff36cc 270px,#ff23a2 291px,#ff137f 315px,#ff0661 344px,#ff0054 360px,#ff0042 387px,#ff0032 418px,#ff0020 465px,#f01 521px)"></i><i style="background:linear-gradient(90deg,#008dff 48px,#0171ff 156px,#3869ff 181px,#7360ff 205px,#ad57ff 226px,#fe4bff 252px,#ff4afc 253px,#ff35cd 270px,#ff22a2 291px,#ff1280 315px,#ff0562 343px,#ff0056 358px,#f04 385px,#ff0034 416px,#ff0021 463px,#ff0012 518px)"></i><i style="background:linear-gradient(90deg,#008bff 48px,#0070ff 155px,#3668ff 180px,#745eff 205px,#b055ff 227px,#fe49ff 252px,#ff48fd 253px,#ff33cd 270px,#ff20a3 291px,#ff1180 315px,#ff0463 343px,#ff0059 355px,#ff004a 376px,#ff0035 415px,#f02 461px,#ff0013 515px)"></i><i style="background:linear-gradient(90deg,#008aff 48px,#006eff 155px,#3965ff 181px,#745cff 205px,#b053ff 227px,#fe47ff 252px,#ff46fd 253px,#ff31cd 270px,#ff20a5 290px,#ff1182 314px,#ff0464 342px,#ff005b 353px,#ff004b 375px,#ff0036 413px,#ff0024 458px,#ff0014 512px)"></i><i style="background:linear-gradient(90deg,#08f 49px,#016dff 155px,#3a64ff 181px,#745bff 205px,#b151ff 227px,#ff44fd 253px,#ff30ce 270px,#ff1fa5 290px,#ff1082 314px,#ff0365 342px,#ff005d 351px,#ff004b 375px,#ff0036 413px,#ff0024 458px,#ff0015 510px)"></i><i style="background:linear-gradient(90deg,#0087ff 49px,#006bff 154px,#3862ff 180px,#7559ff 205px,#b14fff 227px,#ff42fd 253px,#ff2ece 270px,#ff1da6 290px,#ff0f84 313px,#ff0366 341px,#ff0060 348px,#ff004d 373px,#ff0037 411px,#ff0025 455px,#ff0016 507px)"></i><i style="background:linear-gradient(90deg,#0085ff 49px,#006aff 154px,#3961ff 180px,#7557ff 205px,#b44dff 228px,#ff40fe 253px,#ff2dce 270px,#ff1ca6 290px,#ff0e84 313px,#ff0267 340px,#ff004e 372px,#ff0039 409px,#ff0026 453px,#ff0017 504px)"></i><i style="background:linear-gradient(90deg,#0084ff 50px,#0168ff 154px,#395fff 180px,#7555ff 205px,#b44bff 228px,#ff3ffe 253px,#ff2bcf 270px,#ff1ca8 289px,#ff0e86 312px,#ff0268 339px,#ff0050 370px,#ff003a 407px,#ff0028 450px,#ff0018 501px)"></i><i style="background:linear-gradient(90deg,#0082ff 50px,#0067ff 153px,#375eff 179px,#7653ff 205px,#b449ff 228px,#ff3dfe 253px,#ff2acf 270px,#ff1aa9 289px,#ff0d86 312px,#ff0169 339px,#ff0050 370px,#ff003a 407px,#ff0028 449px,#ff0019 499px)"></i><i style="background:linear-gradient(90deg,#0081ff 50px,#0065ff 153px,#3a5cff 180px,#7652ff 205px,#b448ff 228px,#ff3bfe 253px,#ff28cf 270px,#ff19a9 289px,#ff0c87 312px,#ff006a 338px,#ff0051 369px,#ff003c 405px,#ff002a 447px,#ff001a 496px)"></i><i style="background:linear-gradient(90deg,#007fff 51px,#0163ff 153px,#3b5aff 180px,#7750ff 205px,#b745ff 229px,#ff39fe 253px,#ff27d0 270px,#ff18a9 289px,#ff0b87 312px,#ff006b 338px,#ff0052 368px,#ff003d 404px,#ff002b 445px,#ff001b 493px)"></i><i style="background:linear-gradient(90deg,#007eff 51px,#0062ff 152px,#3959ff 179px,#774eff 205px,#b744ff 229px,#ff37fe 253px,#ff25d0 270px,#ff17aa 289px,#ff0a89 311px,#ff006c 337px,#ff0053 367px,#ff003e 402px,#ff002c 443px,#ff001c 490px)"></i><i style="background:linear-gradient(90deg,#007dff 51px,#0161ff 152px,#3a57ff 179px,#774dff 205px,#b742ff 229px,#ff36ff 253px,#ff25d3 269px,#ff16ac 288px,#ff098a 310px,#ff006d 336px,#ff0054 366px,#ff003f 401px,#ff002d 441px,#ff001d 488px)"></i><i style="background:linear-gradient(90deg,#007bff 52px,#005fff 151px,#3656ff 177px,#754bff 204px,#b740ff 229px,#ff34ff 253px,#ff23d3 269px,#ff15ac 288px,#ff088b 310px,#ff0075 329px,#ff006e 336px,#f05 366px,#ff0040 400px,#ff002e 439px,#ff001e 485px)"></i><i style="background:linear-gradient(90deg,#007aff 52px,#005eff 151px,#3b54ff 179px,#7849ff 205px,#ba3eff 230px,#ff32ff 253px,#ff22d3 269px,#ff14ac 288px,#ff078b 310px,#f07 327px,#ff006f 335px,#ff0057 364px,#ff0041 398px,#ff002f 437px,#ff001f 482px)"></i><i style="background:linear-gradient(90deg,#0078ff 52px,#015cff 151px,#3b52ff 179px,#7848ff 205px,#ba3cff 230px,#ff30ff 253px,#ff20d4 269px,#ff12ad 288px,#ff078d 309px,#ff007a 325px,#ff0070 334px,#ff0058 363px,#ff0043 396px,#ff0031 434px,#ff0021 479px)"></i><i style="background:linear-gradient(90deg,#07f 53px,#005bff 150px,#3751ff 177px,#7646ff 204px,#b83bff 229px,#ff2fff 253px,#ff1ed1 270px,#ff11ad 288px,#ff068d 309px,#ff007d 322px,#ff0071 334px,#ff0059 362px,#f04 395px,#ff0031 433px,#f02 477px)"></i><i style="background:linear-gradient(90deg,#0075ff 53px,#005aff 150px,#3850ff 177px,#7445ff 203px,#af3bff 226px,#fe2dff 253px,#ff2cfd 254px,#ff1dd2 270px,#ff10ae 288px,#ff0896 303px,#ff0080 320px,#ff0071 334px,#ff0059 362px,#ff0045 394px,#f03 431px,#ff0023 474px)"></i><i style="background:linear-gradient(90deg,#0074ff 54px,#0158ff 150px,#384eff 177px,#7444ff 203px,#b039ff 226px,#fe2bff 253px,#ff2afd 254px,#ff1bd2 270px,#ff0fae 288px,#ff0084 317px,#ff0072 333px,#ff005b 360px,#ff0046 392px,#ff0034 429px,#ff0024 471px)"></i><i style="background:linear-gradient(90deg,#0072ff 54px,#0057ff 149px,#374dff 176px,#7542ff 203px,#b037ff 226px,#fe29ff 253px,#ff28fd 254px,#ff1ad2 270px,#ff0eae 288px,#ff0087 315px,#ff0074 332px,#ff005c 359px,#ff0047 391px,#ff0035 427px,#ff0025 468px)"></i><i style="background:linear-gradient(90deg,#0071ff 54px,#05f 149px,#394bff 177px,#7540ff 203px,#b036ff 226px,#ff27fd 254px,#ff19d5 269px,#ff0db0 287px,#ff008a 313px,#ff0075 331px,#ff005d 358px,#ff0048 389px,#ff0037 424px,#ff0027 465px)"></i><i style="background:linear-gradient(90deg,#0070ff 55px,#0154ff 149px,#3a4aff 177px,#753fff 203px,#b334ff 227px,#ff25fd 254px,#ff18d5 269px,#ff0cb1 287px,#ff008d 311px,#ff0076 331px,#ff005e 358px,#ff0049 388px,#ff0037 423px,#ff0028 463px)"></i><i style="background:linear-gradient(90deg,#006eff 55px,#0053ff 148px,#3848ff 176px,#763dff 203px,#b332ff 227px,#ff23fd 254px,#ff17d6 269px,#ff0bb1 287px,#ff0091 308px,#f07 330px,#ff0060 356px,#ff004b 386px,#ff0039 420px,#ff0029 460px)"></i><i style="background:linear-gradient(90deg,#006dff 55px,#0051ff 148px,#3947ff 176px,#763cff 203px,#b330ff 227px,#ff22fe 254px,#ff15d6 269px,#ff09b1 287px,#ff0094 306px,#ff0078 329px,#ff0061 355px,#ff004c 385px,#ff003a 419px,#ff002a 457px)"></i><i style="background:linear-gradient(90deg,#006bff 56px,#0150ff 148px,#3945ff 176px,#763aff 203px,#b32fff 227px,#ff20fe 254px,#ff14d6 269px,#ff09b3 286px,#ff0097 304px,#ff007a 328px,#ff0062 354px,#ff004d 383px,#ff003c 416px,#ff002c 454px)"></i><i style="background:linear-gradient(90deg,#006aff 56px,#004fff 147px,#3a44ff 176px,#7739ff 203px,#b62dff 228px,#ff1ffe 254px,#ff12d6 269px,#ff08b4 286px,#ff009a 302px,#ff007a 328px,#ff0063 353px,#ff004e 382px,#ff003c 415px,#ff002d 452px)"></i><i style="background:linear-gradient(90deg,#0069ff 57px,#014dff 147px,#3a42ff 176px,#7737ff 203px,#b62bff 228px,#ff1dfe 254px,#ff11d7 269px,#ff07b4 286px,#ff009f 299px,#ff007c 327px,#ff0064 352px,#ff0050 380px,#ff003e 412px,#ff002e 449px)"></i><i style="background:linear-gradient(90deg,#0067ff 57px,#014cff 147px,#3b41ff 176px,#7735ff 203px,#b62aff 228px,#ff1bfe 254px,#ff10d7 269px,#ff06b6 285px,#ff00a2 297px,#ff007d 326px,#f06 350px,#ff0052 378px,#ff003f 410px,#ff0030 446px)"></i><i style="background:linear-gradient(90deg,#06f 57px,#004bff 146px,#3940ff 175px,#7834ff 203px,#b927ff 229px,#ff1aff 254px,#ff0ed7 269px,#ff05b7 285px,#ff00a6 295px,#ff007f 325px,#ff0067 349px,#ff0053 377px,#ff0041 408px,#ff0031 443px)"></i><i style="background:linear-gradient(90deg,#0064ff 58px,#0149ff 146px,#3a3eff 175px,#7832ff 203px,#b926ff 229px,#ff18ff 254px,#ff0dd7 269px,#ff04b7 285px,#ff00ab 292px,#f09 304px,#ff007f 325px,#ff0068 349px,#ff0054 376px,#ff0042 406px,#ff0032 441px)"></i><i style="background:linear-gradient(90deg,#0063ff 58px,#0048ff 145px,#363eff 173px,#7631ff 202px,#b924ff 229px,#ff17ff 254px,#ff0cd8 269px,#ff02b7 285px,#ff009b 303px,#ff0080 324px,#ff006a 347px,#f05 374px,#f04 404px,#ff0034 438px)"></i><i style="background:linear-gradient(90deg,#0062ff 59px,#0047ff 145px,#3b3cff 175px,#792fff 203px,#b923ff 229px,#ff15ff 254px,#ff0bda 268px,#ff02b9 284px,#ff009c 302px,#ff0082 323px,#ff006b 346px,#ff0057 372px,#ff0045 402px,#ff0035 435px)"></i><i style="background:linear-gradient(90deg,#0060ff 59px,#0146ff 145px,#3b3aff 175px,#792eff 203px,#b921ff 229px,#ff14ff 254px,#ff0adb 268px,#ff01ba 284px,#ff009d 302px,#ff0083 322px,#ff006c 345px,#ff0059 370px,#ff0047 399px,#ff0037 432px)"></i><i style="background:linear-gradient(90deg,#005fff 59px,#0045ff 144px,#383aff 173px,#772dff 202px,#b920ff 229px,#ff12ff 254px,#ff08d9 269px,#ff00ba 284px,#ff009d 302px,#ff0084 322px,#ff006d 345px,#ff0059 370px,#ff0038 430px)"></i><i style="background:linear-gradient(90deg,#005eff 60px,#0043ff 144px,#3a38ff 174px,#772cff 202px,#b91eff 229px,#fe11ff 254px,#ff06d9 269px,#ff00ba 284px,#ff009f 301px,#ff0085 321px,#ff006f 343px,#ff005b 368px,#ff003a 427px)"></i><i style="background:linear-gradient(90deg,#005cff 60px,#0142ff 144px,#3937ff 173px,#752bff 201px,#af1fff 225px,#fe0fff 254px,#ff0efd 255px,#ff05d9 269px,#f0b 284px,#ff009f 301px,#ff0087 320px,#ff0070 342px,#ff005d 366px,#ff003b 424px)"></i><i style="background:linear-gradient(90deg,#005bff 61px,#0041ff 143px,#3736ff 172px,#732aff 200px,#af1eff 225px,#ff0dfd 255px,#ff04dc 268px,#ff00ca 276px,#ff00bd 283px,#ff00a1 300px,#f08 319px,#ff0072 340px,#ff005e 364px,#ff003d 421px)"></i><i style="background:linear-gradient(90deg,#005aff 61px,#0040ff 143px,#3a34ff 173px,#7628ff 201px,#b21cff 226px,#ff0bfd 255px,#ff00d1 273px,#ff00bd 283px,#ff00a1 300px,#f08 319px,#ff0073 340px,#ff0060 363px,#ff003e 419px)"></i><i style="background:linear-gradient(90deg,#0058ff 62px,#013eff 143px,#3a33ff 173px,#7626ff 201px,#b21aff 226px,#ff0afd 255px,#ff00d5 271px,#ff00bd 283px,#ff00a2 300px,#ff008a 318px,#ff0074 339px,#ff0061 362px,#ff0040 416px)"></i><i style="background:linear-gradient(90deg,#0057ff 62px,#003dff 142px,#3932ff 172px,#7425ff 200px,#b219ff 226px,#ff09fe 255px,#ff00da 269px,#ff00be 283px,#ff00a3 299px,#ff008c 317px,#ff0076 337px,#ff0063 360px,#ff0042 413px)"></i><i style="background:linear-gradient(90deg,#0056ff 62px,#003cff 142px,#3930ff 172px,#7724ff 201px,#b517ff 227px,#ff07fe 255px,#ff00df 267px,#ff00c0 282px,#ff00a5 298px,#ff008d 316px,#ff0078 336px,#ff0064 358px,#f04 410px)"></i><i style="background:linear-gradient(90deg,#0054ff 63px,#013bff 142px,#3a2fff 172px,#72f 201px,#b515ff 227px,#ff06fe 255px,#ff00e6 264px,#ff00c0 282px,#ff00a6 298px,#ff008f 315px,#ff0079 335px,#f06 357px,#ff0045 408px)"></i><i style="background:linear-gradient(90deg,#0053ff 63px,#003aff 141px,#3a2eff 172px,#7721ff 201px,#b514ff 227px,#ff04fe 255px,#ff00eb 262px,#ff00c2 281px,#ff00a7 297px,#ff0090 314px,#ff007b 333px,#ff0067 355px,#ff0047 405px)"></i><i style="background:linear-gradient(90deg,#0052ff 64px,#0139ff 141px,#3b2cff 172px,#781fff 201px,#b812ff 228px,#ff03fe 255px,#ff00e0 267px,#ff00c3 281px,#ff00a8 297px,#ff0091 314px,#ff007b 333px,#ff0069 354px,#ff0049 402px)"></i><i style="background:linear-gradient(90deg,#0050ff 64px,#0137ff 141px,#3b2bff 172px,#781eff 201px,#b811ff 228px,#ff01fe 255px,#ff00e0 267px,#ff00c3 281px,#ff00a9 296px,#ff0092 313px,#ff007d 332px,#ff006b 352px,#ff004b 399px)"></i><i style="background:linear-gradient(90deg,#004fff 65px,#0036ff 140px,#3a2aff 171px,#781dff 201px,#b80fff 228px,#f0f 255px,#ff00e0 267px,#ff00c3 281px,#f0a 296px,#ff0094 312px,#ff006d 350px,#ff004c 397px)"></i><i style="background:linear-gradient(90deg,#004eff 65px,#0135ff 140px,#3a29ff 171px,#791bff 201px,#ba0dff 229px,#f0f 255px,#ff00e0 267px,#ff00c5 280px,#ff00ac 295px,#ff0095 311px,#ff006f 348px,#ff004e 394px)"></i><i style="background:linear-gradient(90deg,#004cff 66px,#0134ff 140px,#3b28ff 171px,#791aff 201px,#bb0cff 229px,#f100ff 250px,#f0f 255px,#ff00e1 267px,#ff00c6 280px,#ff00ae 294px,#ff0097 310px,#ff0070 347px,#ff0050 391px)"></i><i style="background:linear-gradient(90deg,#004bff 66px,#03f 139px,#3927ff 170px,#7719ff 200px,#b80bff 228px,#ec00ff 248px,#f0f 255px,#ff00e1 267px,#ff00c6 280px,#ff00ae 294px,#ff0098 309px,#ff0072 345px,#ff0052 388px)"></i><i style="background:linear-gradient(90deg,#004aff 66px,#0132ff 139px,#3a25ff 170px,#7718ff 200px,#b80aff 228px,#e600ff 246px,#f0f 255px,#ff00e1 267px,#ff00c8 279px,#ff00b0 293px,#ff009a 308px,#ff0074 343px,#ff0054 386px)"></i><i style="background:linear-gradient(90deg,#0049ff 67px,#0031ff 138px,#3825ff 169px,#7817ff 200px,#aa0cff 222px,#de00ff 243px,#fe00ff 255px,#ff00e1 267px,#ff00c8 279px,#ff00b0 293px,#ff009a 308px,#ff0075 342px,#ff0056 383px)"></i><i style="background:linear-gradient(90deg,#0048ff 67px,#0030ff 138px,#3b23ff 170px,#7815ff 200px,#a80bff 221px,#d900ff 241px,#fe00ff 255px,#ff00e2 267px,#ff00c9 279px,#ff00b2 292px,#ff009c 307px,#f07 340px,#ff0058 380px)"></i><i style="background:linear-gradient(90deg,#0046ff 68px,#012fff 138px,#3922ff 169px,#7615ff 199px,#d400ff 239px,#ff00fd 256px,#ff00e2 267px,#ff00c9 279px,#ff009e 306px,#ff007a 338px,#ff005b 377px)"></i><i style="background:linear-gradient(90deg,#0045ff 68px,#002eff 137px,#3a21ff 169px,#7613ff 199px,#c0f 236px,#fe00ff 255px,#ff00e0 268px,#ff00c9 279px,#ff009f 305px,#ff007b 337px,#ff005d 374px)"></i><i style="background:linear-gradient(90deg,#04f 69px,#002dff 137px,#3a20ff 169px,#7712ff 199px,#c700ff 234px,#fe00ff 255px,#ff00cb 278px,#ff00a1 304px,#ff007d 335px,#ff005f 372px)"></i><i style="background:linear-gradient(90deg,#0042ff 69px,#012bff 137px,#3a1eff 169px,#71f 199px,#c200ff 232px,#fe00ff 255px,#f0c 278px,#ff00a3 303px,#ff0080 333px,#ff0061 369px)"></i><i style="background:linear-gradient(90deg,#0041ff 70px,#002bff 136px,#391eff 168px,#7710ff 199px,#b0f 229px,#fe00ff 255px,#f0c 278px,#ff00a5 302px,#ff0082 331px,#ff0064 366px)"></i><i style="background:linear-gradient(90deg,#0040ff 70px,#0129ff 136px,#391cff 168px,#780eff 199px,#b700ff 227px,#fd00ff 255px,#ff00ce 277px,#ff00a6 301px,#ff0083 330px,#f06 363px)"></i><i style="background:linear-gradient(90deg,#003eff 71px,#0128ff 136px,#3a1bff 168px,#780dff 199px,#b200ff 225px,#fd00ff 255px,#f0c 278px,#ff00a7 301px,#ff0085 329px,#ff0068 361px)"></i><i style="background:linear-gradient(90deg,#003dff 71px,#0027ff 135px,#3a1aff 168px,#780cff 199px,#ad00ff 223px,#fd00ff 255px,#ff00cf 277px,#ff00a8 300px,#ff0087 327px,#ff006b 358px)"></i><i style="background:linear-gradient(90deg,#003cff 72px,#0126ff 135px,#3b19ff 168px,#780bff 199px,#a700ff 220px,#fd00ff 255px,#ff00cf 277px,#f0a 299px,#ff0089 325px,#ff006d 355px)"></i><i style="background:linear-gradient(90deg,#003bff 72px,#0125ff 135px,#3b18ff 168px,#790aff 199px,#a200ff 218px,#f0f 256px,#ff00d3 275px,#ff00ad 297px,#ff008c 323px,#ff0070 352px)"></i><i style="background:linear-gradient(90deg,#003aff 72px,#0024ff 134px,#3a17ff 167px,#7709ff 198px,#9e00ff 216px,#f0f 256px,#ff00d3 275px,#ff00af 296px,#ff008f 321px,#ff0072 350px)"></i><i style="background:linear-gradient(90deg,#0038ff 73px,#0123ff 134px,#3a16ff 167px,#7907ff 199px,#9700ff 213px,#ca00ff 235px,#f0f 256px,#ff00d5 274px,#ff00b1 295px,#ff0091 319px,#ff0075 347px)"></i><i style="background:linear-gradient(90deg,#0037ff 73px,#0122ff 134px,#3b15ff 167px,#7a06ff 199px,#9300ff 211px,#c800ff 234px,#f0f 256px,#ff00d6 274px,#ff00b3 294px,#ff0094 317px,#ff0078 344px)"></i><i style="background:linear-gradient(90deg,#0036ff 74px,#0021ff 133px,#3914ff 166px,#7805ff 198px,#8f00ff 209px,#c500ff 233px,#f0f 256px,#ff00d8 273px,#ff00b4 293px,#ff0096 315px,#ff007b 341px)"></i><i style="background:linear-gradient(90deg,#0035ff 74px,#0120ff 133px,#3a13ff 166px,#7804ff 198px,#8900ff 206px,#ba00ff 228px,#f0f 256px,#ff00d8 273px,#ff00b6 292px,#ff0098 314px,#ff007d 339px)"></i><i style="background:linear-gradient(90deg,#03f 75px,#0020ff 132px,#3812ff 165px,#7603ff 197px,#8500ff 204px,#b700ff 227px,#fe00ff 256px,#ff00d8 273px,#ff00b8 291px,#ff009b 312px,#ff0080 336px)"></i><i style="background:linear-gradient(90deg,#0032ff 75px,#001eff 132px,#3b11ff 166px,#7902ff 198px,#ba00ff 228px,#fe00ff 256px,#ff00d9 273px,#ff00ba 290px,#ff009e 310px,#ff0084 333px)"></i><i style="background:linear-gradient(90deg,#0031ff 76px,#011dff 132px,#3b0fff 166px,#7901ff 198px,#ba00ff 228px,#fe00ff 256px,#ff00db 272px,#ff00bc 289px,#ff00a0 308px,#ff0087 330px)"></i><i style="background:linear-gradient(90deg,#0030ff 76px,#001dff 131px,#3a0fff 165px,#70f 197px,#b800ff 227px,#fe00ff 256px,#ff00d9 273px,#ff00bc 289px,#ff00a2 307px,#ff0089 328px)"></i><i style="background:linear-gradient(90deg,#002fff 77px,#001cff 131px,#3a0eff 165px,#70f 197px,#b800ff 227px,#fe00ff 256px,#ff00db 272px,#ff00be 288px,#ff00a4 306px,#ff008d 325px)"></i><i style="background:linear-gradient(90deg,#002eff 77px,#011aff 131px,#3b0cff 165px,#7800ff 197px,#b800ff 227px,#fe00ff 256px,#ff00dc 272px,#ff00c2 286px,#ff00a8 303px,#ff0091 322px)"></i><i style="background:linear-gradient(90deg,#002cff 78px,#001aff 130px,#390cff 164px,#6a00ff 190px,#7800ff 197px,#b800ff 227px,#fe00ff 256px,#ff00de 271px,#ff00c4 285px,#ff00ab 301px,#ff0094 319px)"></i><i style="background:linear-gradient(90deg,#002bff 78px,#0119ff 130px,#3a0bff 164px,#6400ff 187px,#7800ff 197px,#b800ff 227px,#fd00ff 256px,#ff00dc 272px,#ff00c4 285px,#ff00ad 300px,#ff0097 317px)"></i><i style="background:linear-gradient(90deg,#002aff 79px,#0118ff 130px,#300cff 158px,#6100ff 185px,#7800ff 197px,#b800ff 227px,#fd00ff 256px,#ff00de 271px,#ff00c6 284px,#ff009b 314px)"></i><i style="background:linear-gradient(90deg,#0029ff 79px,#0017ff 129px,#2e0cff 157px,#5d00ff 183px,#70f 196px,#b800ff 227px,#fd00ff 256px,#ff00c8 283px,#ff009f 311px)"></i><i style="background:linear-gradient(90deg,#0028ff 80px,#0116ff 129px,#5800ff 180px,#70f 196px,#b800ff 227px,#fd00ff 256px,#f0c 281px,#ff00a3 308px)"></i><i style="background:linear-gradient(90deg,#0027ff 80px,#0115ff 129px,#50f 178px,#70f 196px,#b800ff 227px,#f0f 257px,#ff00e5 268px,#ff00ce 280px,#ff00a6 306px)"></i><i style="background:linear-gradient(90deg,#0025ff 81px,#0014ff 128px,#5100ff 176px,#7800ff 196px,#b800ff 227px,#f0f 257px,#ff00d2 278px,#f0a 303px)"></i><i style="background:linear-gradient(90deg,#0024ff 82px,#0113ff 128px,#4e00ff 174px,#7800ff 196px,#b900ff 227px,#f0f 257px,#ff00d4 277px,#ff00ae 300px)"></i><i style="background:linear-gradient(90deg,#0023ff 82px,#0112ff 128px,#4900ff 171px,#7800ff 196px,#b900ff 227px,#f0f 257px,#ff00d6 276px,#ff00b3 297px)"></i><i style="background:linear-gradient(90deg,#02f 83px,#0012ff 127px,#4600ff 169px,#7800ff 196px,#b900ff 227px,#f0f 257px,#ff00d8 275px,#ff00b8 294px)"></i><i style="background:linear-gradient(90deg,#0021ff 83px,#0111ff 127px,#4300ff 167px,#7900ff 196px,#b900ff 227px,#f0f 257px,#ff00da 274px,#f0b 292px)"></i><i style="background:linear-gradient(90deg,#001fff 84px,#0110ff 127px,#3e00ff 164px,#7900ff 196px,#b900ff 227px,#fe00ff 257px,#ff00dc 273px,#ff00c0 289px)"></i><i style="background:linear-gradient(90deg,#001eff 84px,#000fff 126px,#3b00ff 162px,#70f 195px,#b900ff 227px,#fe00ff 257px,#ff00de 272px,#ff00c5 286px)"></i><i style="background:linear-gradient(90deg,#001dff 85px,#010eff 126px,#3800ff 160px,#70f 195px,#b900ff 227px,#fe00ff 257px,#ff00ca 283px)"></i><i style="background:linear-gradient(90deg,#001cff 85px,#000dff 125px,#3500ff 158px,#7800ff 195px,#b900ff 227px,#fe00ff 257px,#ff00ce 281px)"></i><i style="background:linear-gradient(90deg,#001bff 86px,#010cff 125px,#3000ff 155px,#7800ff 195px,#b900ff 227px,#fe00ff 257px,#ff00d4 278px)"></i><i style="background:linear-gradient(90deg,#0019ff 87px,#010bff 125px,#2d00ff 153px,#7800ff 195px,#b900ff 227px,#fe00ff 257px,#ff00da 275px)"></i><i style="background:linear-gradient(90deg,#0018ff 87px,#000bff 124px,#2b00ff 151px,#70f 194px,#b700ff 226px,#fe00ff 257px,#ff00e0 272px)"></i><i style="background:linear-gradient(90deg,#0017ff 88px,#010aff 124px,#2600ff 148px,#70f 194px,#b700ff 226px,#fd00ff 257px,#ff00e4 270px)"></i><i style="background:linear-gradient(90deg,#0016ff 88px,#0109ff 124px,#2300ff 146px,#70f 194px,#b700ff 226px,#fd00ff 257px,#ff00ea 267px)"></i><i style="background:linear-gradient(90deg,#0015ff 89px,#0008ff 123px,#2100ff 144px,#70f 194px,#b700ff 226px,#fd00ff 257px,#ff00f1 264px)"></i><i style="background:linear-gradient(90deg,#0014ff 89px,#0107ff 123px,#1c00ff 141px,#6c00ff 188px,#b300ff 224px,#fd00ff 257px,#ff00f8 261px)"></i><i style="background:linear-gradient(90deg,#0013ff 90px,#0007ff 122px,#0904ff 128px,#1a00ff 139px,#4700ff 167px,#7800ff 194px,#af00ff 222px,#fd00ff 257px,#ff00fc 259px)"></i><i style="background:linear-gradient(90deg,#01f 91px,#0006ff 122px,#0c03ff 130px,#1700ff 137px,#4300ff 164px,#7c00ff 196px,#ba00ff 227px,#fa00ff 256px)"></i><i style="background:linear-gradient(90deg,#0010ff 91px,#0005ff 121px,#0a02ff 128px,#4000ff 162px,#7800ff 194px,#b400ff 224px,#f300ff 253px)"></i><i style="background:linear-gradient(90deg,#000fff 92px,#0004ff 121px,#0902ff 127px,#3d00ff 160px,#7500ff 192px,#af00ff 222px,#ec00ff 250px)"></i><i style="background:linear-gradient(90deg,#000eff 93px,#0004ff 120px,#0901ff 127px,#3d00ff 160px,#7300ff 191px,#ab00ff 220px,#e800ff 248px)"></i><i style="background:linear-gradient(90deg,#000dff 93px,#0003ff 120px,#0701ff 125px,#3900ff 157px,#6e00ff 188px,#a600ff 217px,#e100ff 245px)"></i><i style="background:linear-gradient(90deg,#000cff 94px,#0002ff 120px,#0600ff 124px,#3700ff 156px,#6b00ff 186px,#a200ff 215px,#da00ff 242px)"></i><i style="background:linear-gradient(90deg,#000aff 95px,#0001ff 119px,#0600ff 124px,#3600ff 155px,#6700ff 184px,#9c00ff 212px,#d400ff 239px)"></i><i style="background:linear-gradient(90deg,#000aff 95px,#00f 119px,#0400ff 122px,#30f 153px,#6400ff 182px,#9800ff 210px,#cf00ff 237px)"></i><i style="background:linear-gradient(90deg,#0008ff 96px,#00f 119px,#0400ff 122px,#3200ff 152px,#6300ff 181px,#9400ff 208px,#c900ff 234px)"></i><i style="background:linear-gradient(90deg,#0007ff 97px,#00f 118px,#0500ff 122px,#3100ff 151px,#6000ff 179px,#9100ff 206px,#c300ff 231px)"></i><i style="background:linear-gradient(90deg,#0006ff 98px,#00f 118px,#0500ff 122px,#5c00ff 177px,#8b00ff 203px,#bc00ff 228px)"></i><i style="background:linear-gradient(90deg,#0005ff 98px,#00f 118px,#0400ff 121px,#5b00ff 176px,#8a00ff 202px,#b800ff 226px)"></i><i style="background:linear-gradient(90deg,#0004ff 99px,#00f 117px,#0500ff 121px,#5800ff 174px,#b200ff 223px)"></i><i style="background:linear-gradient(90deg,#0002ff 100px,#00f 117px,#0500ff 121px,#50f 172px,#ad00ff 220px)"></i><i style="background:linear-gradient(90deg,#0001ff 101px,#00f 117px,#0700ff 122px,#5300ff 171px,#a700ff 217px)"></i><i style="background:linear-gradient(90deg,#00f 101px,#00f 116px,#0600ff 121px,#5200ff 170px,#a300ff 215px)"></i><i style="background:linear-gradient(90deg,#00f 102px,#00f 116px,#0700ff 121px,#4f00ff 168px,#9d00ff 212px)"></i><i style="background:linear-gradient(90deg,#00f 103px,#00f 116px,#0900ff 122px,#4e00ff 167px,#9800ff 209px)"></i><i style="background:linear-gradient(90deg,#00f 104px,#00f 115px,#0c00ff 124px,#4d00ff 166px,#9200ff 206px)"></i><i style="background:linear-gradient(90deg,#00f 105px,#00f 115px,#0e00ff 125px,#4b00ff 165px,#8d00ff 203px)"></i><i style="background:linear-gradient(90deg,#00f 106px,#00f 115px,#1300ff 128px,#4d00ff 166px,#8a00ff 201px)"></i><i style="background:linear-gradient(90deg,#00f 107px,#0100ff 115px,#1600ff 130px,#4c00ff 165px,#8400ff 198px)"></i><i style="background:linear-gradient(90deg,#00f 108px,#00f 114px,#1a00ff 132px,#4b00ff 164px,#7f00ff 195px)"></i><i style="background:linear-gradient(90deg,#00f 109px,#0100ff 114px,#1e00ff 135px,#4b00ff 164px,#7a00ff 192px)"></i><i style="background:linear-gradient(90deg,#00f 110px,#0100ff 114px,#2500ff 139px,#70f 190px)"></i><i style="background:linear-gradient(90deg,#00f 111px,#00f 113px,#2b00ff 143px,#7200ff 187px)"></i><i style="background:linear-gradient(90deg,#00f 112px,#3200ff 147px,#6d00ff 184px)"></i><i style="background:linear-gradient(90deg,#0100ff 113px,#3400ff 148px,#6800ff 181px)"></i><i style="background:linear-gradient(90deg,#0300ff 114px,#3200ff 147px,#6500ff 179px)"></i><i style="background:linear-gradient(90deg,#0600ff 116px,#30f 147px,#6000ff 176px)"></i><i style="background:linear-gradient(90deg,#0800ff 117px,#5c00ff 173px)"></i><i style="background:linear-gradient(90deg,#0a00ff 118px,#5700ff 170px)"></i><i style="background:linear-gradient(90deg,#0d00ff 120px,#5400ff 168px)"></i><i style="background:linear-gradient(90deg,#0f00ff 121px,#5000ff 165px)"></i><i style="background:linear-gradient(90deg,#1200ff 123px,#4c00ff 162px)"></i><i style="background:linear-gradient(90deg,#1400ff 124px,#4700ff 159px)"></i><i style="background:linear-gradient(90deg,#1700ff 126px,#40f 157px)"></i><i style="background:linear-gradient(90deg,#1900ff 127px,#4000ff 154px)"></i><i style="background:linear-gradient(90deg,#1b00ff 128px,#3c00ff 151px)"></i><i style="background:linear-gradient(90deg,#1e00ff 130px,#3800ff 148px)"></i><i style="background:linear-gradient(90deg,#2000ff 131px,#3500ff 146px)"></i><i style="background:linear-gradient(90deg,#2300ff 133px,#3100ff 143px)"></i><i style="background:linear-gradient(90deg,#2600ff 135px,#2d00ff 140px)"></i><i></i><i></i><i></i><svg width="590" height="520" viewBox="0 0 590 520"><path d="M0 0H590V520H0Z M540.1 320.7 L210.5 91.2 L119.1 482.0Z" fill="#000" fill-opacity="0.4" fill-rule="evenodd"/></svg></div>
<div class="g" style="left:1516px;top:72px;width:191px;height:190px;overflow:hidden;background:#232323"><div style="position:relative;width:191px;height:190px;clip-path:polygon(-906.6px 2112.4px,-906.6px 2112.4px,-906.7px 2112.4px,-906.8px 2112.4px,-906.9px 2112.4px,-907.1px 2112.5px,-907.3px 2112.6px,-907.5px 2112.7px,-907.7px 2112.8px,-907.9px 2112.8px,-908.1px 2112.8px,-908.2px 2112.8px,-908.5px 2112.8px,-908.7px 2112.9px,-909.0px 2113.0px,-909.3px 2113.1px,-909.6px 2113.2px,-909.9px 2113.2px,-910.1px 2113.2px,-910.4px 2113.2px,-910.7px 2113.2px,-911.1px 2113.2px,-911.5px 2113.2px,-911.8px 2113.2px,-912.3px 2113.2px,-912.7px 2113.2px,-913.1px 2113.3px,-913.6px 2113.3px,-914.2px 2113.2px,-914.7px 2113.0px,-915.3px 2112.8px,-916.0px 2112.5px,-916.8px 2112.0px,-917.7px 2111.5px,-918.7px 2110.9px,-919.8px 2110.2px,-921.0px 2109.4px,-922.2px 2108.5px,-923.4px 2107.5px,-924.8px 2106.4px,-926.3px 2105.2px,-928.0px 2103.8px,-929.9px 2102.3px,-931.8px 2100.6px,-933.9px 2098.7px,-936.1px 2096.8px,-938.4px 2094.7px,-940.8px 2092.4px,-943.4px 2090.0px,-946.2px 2087.5px,-949.2px 2084.9px,-952.4px 2082.1px,-956.0px 2079.0px,-959.8px 2075.6px,-964.0px 2072.1px,-968.4px 2068.2px,-973.1px 2064.2px,-978.0px 2059.9px,-983.1px 2055.4px,-988.5px 2050.5px,-994.3px 2045.2px,-1000.5px 2039.3px,-1007.0px 2033.1px,-1013.8px 2026.2px,-1020.9px 2018.6px,-1028.4px 2010.4px,-1036.0px 2001.8px,-1044.3px 1991.8px,-1053.2px 1979.8px,-1063.0px 1965.8px,-1073.5px 1950.3px,-1084.6px 1932.4px,-1096.6px 1911.8px,-1109.2px 1888.7px,-1122.5px 1863.3px,-1136.6px 1834.6px,-1151.7px 1801.6px,-1167.6px 1764.5px,-1184.5px 1723.6px,-1202.3px 1678.2px,-1221.2px 1627.2px,-1241.5px 1570.8px,-1263.0px 1509.5px,-1285.0px 1442.4px,-1307.1px 1368.8px,-1329.2px 1288.3px,-1351.5px 1201.4px,-1373.8px 1108.6px,-1395.6px 1010.4px,-1417.4px 905.6px,-1439.1px 794.2px,-1459.9px 679.2px,-1478.8px 563.2px,-1496.1px 445.1px,-1512.1px 324.0px,-1526.0px 203.1px,-1537.0px 85.5px,-1545.3px -29.4px,-1551.2px -142.9px,-1554.0px -252.7px,-1553.3px -356.8px,-1549.0px -456.1px,-1541.3px -551.0px,-1530.1px -639.6px,-1515.3px -719.3px,-1496.5px -790.6px,-1473.9px -854.2px,-1448.2px -909.2px,-1420.3px -954.2px,-1389.9px -988.2px,-1356.6px -1012.1px,-1321.6px -1027.7px,-1285.8px -1037.0px,-1249.2px -1038.8px,-1211.2px -1032.6px,-1172.6px -1021.4px,-1134.2px -1008.1px,-1095.7px -992.6px,-1056.8px -973.5px,-1018.2px -952.5px,-980.3px -931.0px,-943.2px -909.3px,-906.8px -886.5px,-870.8px -862.9px,-835.1px -838.7px,-799.8px -813.8px,-764.9px -788.1px,-730.3px -761.8px,-695.7px -734.9px,-661.1px -707.3px,-626.7px -679.0px,-592.3px -650.2px,-558.1px -620.9px,-524.0px -591.2px,-490.0px -560.9px,-456.0px -530.3px,-422.1px -499.3px,-388.1px -468.1px,-354.2px -436.4px,-320.3px -404.5px,-286.4px -372.4px,-252.4px -340.0px,-218.4px -307.4px,-184.3px -274.6px,-150.4px -241.7px,-116.5px -208.7px,-82.6px -175.5px,-48.8px -142.3px,-15.1px -109.1px,18.7px -75.9px,52.4px -42.7px,86.0px -9.5px,119.4px 23.6px,152.7px 56.5px,185.8px 89.4px,218.7px 122.2px,251.3px 154.7px,283.7px 186.9px,315.9px 219.0px,347.8px 250.9px,379.4px 282.3px,410.6px 313.5px,441.5px 344.3px,472.0px 374.8px,502.1px 404.7px,531.7px 434.1px,561.0px 463.1px,589.6px 491.6px,617.6px 519.5px,645.0px 546.8px,671.7px 573.6px,697.8px 599.6px,722.9px 624.7px,747.0px 648.8px,770.2px 671.9px,792.7px 694.2px,814.5px 715.9px,835.7px 737.1px,856.3px 757.6px,876.1px 777.3px,895.0px 796.1px,913.0px 813.9px,930.1px 830.8px,946.4px 846.8px,961.9px 862.2px,976.6px 876.9px,990.5px 890.8px,1003.7px 904.0px,1016.2px 916.6px,1028.0px 928.4px,1039.1px 939.5px,1049.6px 949.9px,1059.6px 959.9px,1069.0px 969.2px,1077.8px 978.0px,1086.2px 986.2px,1094.1px 994.1px,1101.7px 1001.6px,1108.7px 1008.6px,1115.4px 1015.4px,1121.9px 1021.8px,1128.1px 1028.0px,1134.0px 1034.0px,1139.7px 1039.6px,1145.1px 1045.0px,1150.2px 1050.1px,1155.1px 1055.0px,1159.7px 1059.6px,1164.1px 1064.0px,1168.2px 1068.1px,1172.1px 1071.9px,1175.8px 1075.5px,1179.3px 1078.8px,1182.4px 1082.0px,1185.4px 1084.9px,1188.1px 1087.6px,1190.7px 1090.2px,1193.1px 1092.6px,1195.3px 1094.9px,1197.4px 1097.0px,1199.4px 1099.0px,1201.2px 1100.8px,1202.9px 1102.5px,1204.5px 1104.0px,1205.9px 1105.4px,1207.1px 1106.6px,1208.1px 1107.7px,1209.1px 1108.7px,1210.0px 1109.6px,1211.0px 1110.5px,1211.8px 1111.4px,1212.7px 1112.2px,1213.5px 1113.0px,1214.2px 1113.7px,1214.8px 1114.4px,1215.5px 1115.0px,1216.1px 1115.7px,1216.8px 1116.4px,1217.5px 1117.0px,1218.1px 1117.7px,1218.8px 1118.3px,1219.4px 1119.0px,1220.0px 1119.6px,1220.6px 1120.1px,1221.1px 1120.6px,1221.5px 1121.1px,1221.9px 1121.5px,1222.3px 1121.8px,1222.6px 1122.1px,1222.8px 1122.4px,1223.0px 1122.6px,1223.2px 1122.8px,1223.3px 1122.9px,1223.5px 1123.0px,1223.6px 1123.1px,1223.7px 1123.2px,1223.7px 1123.3px)"><i style="background:linear-gradient(90deg,#b4ff00 0px,#ff0 152px,#ffec00 191px)"></i><i style="background:linear-gradient(90deg,#b5ff00 0px,#ff0 152px,#ffec00 191px)"></i><i style="background:linear-gradient(90deg,#b5ff00 0px,#ff0 151px,#ffec00 191px)"></i><i style="background:linear-gradient(90deg,#b5ff00 0px,#ff0 151px,#ffeb00 191px)"></i><i style="background:linear-gradient(90deg,#b5ff00 0px,#ff0 150px,#ffeb00 191px)"></i><i style="background:linear-gradient(90deg,#b6ff00 0px,#ff0 150px,#ffeb00 191px)"></i><i style="background:linear-gradient(90deg,#b6ff00 0px,#ff0 149px,#ffeb00 191px)"></i><i style="background:linear-gradient(90deg,#b6ff00 0px,#ff0 148px,#ffea00 191px)"></i><i style="background:linear-gradient(90deg,#b6ff00 0px,#ff0 148px,#ffea00 191px)"></i><i style="background:linear-gradient(90deg,#b7ff00 0px,#ff0 147px,#ffea00 191px)"></i><i style="background:linear-gradient(90deg,#b7ff00 0px,#ff0 147px,#ffe900 191px)"></i><i style="background:linear-gradient(90deg,#b7ff00 0px,#ff0 146px,#ffe900 191px)"></i><i style="background:linear-gradient(90deg,#b7ff00 0px,#ff0 145px,#ffe900 191px)"></i><i style="background:linear-gradient(90deg,#b8ff00 0px,#ff0 145px,#ffe900 191px)"></i><i style="background:linear-gradient(90deg,#b8ff00 0px,#ff0 144px,#ffe800 191px)"></i><i style="background:linear-gradient(90deg,#b8ff00 0px,#ff0 144px,#ffe800 191px)"></i><i style="background:linear-gradient(90deg,#b8ff00 0px,#ff0 143px,#ffe800 191px)"></i><i style="background:linear-gradient(90deg,#b9ff00 0px,#ff0 142px,#ffe700 191px)"></i><i style="background:linear-gradient(90deg,#b9ff00 0px,#ff0 142px,#ffe700 191px)"></i><i style="background:linear-gradient(90deg,#b9ff00 0px,#ff0 141px,#ffe700 191px)"></i><i style="background:linear-gradient(90deg,#b9ff00 0px,#ff0 141px,#ffe700 191px)"></i><i style="background:linear-gradient(90deg,#baff00 0px,#ff0 140px,#ffe600 191px)"></i><i style="background:linear-gradient(90deg,#baff00 0px,#ff0 139px,#ffe600 191px)"></i><i style="background:linear-gradient(90deg,#baff00 0px,#ff0 139px,#ffe600 191px)"></i><i style="background:linear-gradient(90deg,#baff00 0px,#ff0 138px,#ffe500 191px)"></i><i style="background:linear-gradient(90deg,#bf0 0px,#ff0 138px,#ffe500 191px)"></i><i style="background:linear-gradient(90deg,#bf0 0px,#ff0 137px,#ffe500 191px)"></i><i style="background:linear-gradient(90deg,#bf0 0px,#ff0 136px,#ffe500 191px)"></i><i style="background:linear-gradient(90deg,#bf0 0px,#ff0 136px,#ffe400 191px)"></i><i style="background:linear-gradient(90deg,#bcff00 0px,#ff0 135px,#ffe400 191px)"></i><i style="background:linear-gradient(90deg,#bcff00 0px,#ff0 134px,#ffe400 191px)"></i><i style="background:linear-gradient(90deg,#bcff00 0px,#ff0 134px,#ffe300 191px)"></i><i style="background:linear-gradient(90deg,#bcff00 0px,#ff0 133px,#ffe300 191px)"></i><i style="background:linear-gradient(90deg,#bdff00 0px,#ff0 133px,#ffe300 191px)"></i><i style="background:linear-gradient(90deg,#bdff00 0px,#ff0 132px,#ffe300 191px)"></i><i style="background:linear-gradient(90deg,#bdff00 0px,#ff0 131px,#ffe200 191px)"></i><i style="background:linear-gradient(90deg,#bdff00 0px,#ff0 131px,#ffe200 191px)"></i><i style="background:linear-gradient(90deg,#beff00 0px,#ff0 130px,#ffe200 191px)"></i><i style="background:linear-gradient(90deg,#beff00 0px,#ff0 130px,#ffe100 191px)"></i><i style="background:linear-gradient(90deg,#beff00 0px,#ff0 129px,#ffe100 191px)"></i><i style="background:linear-gradient(90deg,#beff00 0px,#ff0 128px,#ffe100 191px)"></i><i style="background:linear-gradient(90deg,#bfff00 0px,#ff0 128px,#ffe100 191px)"></i><i style="background:linear-gradient(90deg,#bfff00 0px,#ff0 127px,#ffe000 191px)"></i><i style="background:linear-gradient(90deg,#bfff00 0px,#ff0 127px,#ffe000 191px)"></i><i style="background:linear-gradient(90deg,#bfff00 0px,#ff0 126px,#ffe000 191px)"></i><i style="background:linear-gradient(90deg,#c0ff00 0px,#ff0 125px,#ffe000 191px)"></i><i style="background:linear-gradient(90deg,#c0ff00 0px,#ff0 125px,#ffdf00 191px)"></i><i style="background:linear-gradient(90deg,#c0ff00 0px,#ff0 124px,#ffdf00 191px)"></i><i style="background:linear-gradient(90deg,#c0ff00 0px,#ff0 124px,#ffdf00 191px)"></i><i style="background:linear-gradient(90deg,#c1ff00 0px,#ff0 123px,#ffde00 191px)"></i><i style="background:linear-gradient(90deg,#c1ff00 0px,#ff0 122px,#ffde00 191px)"></i><i style="background:linear-gradient(90deg,#c1ff00 0px,#ff0 122px,#ffde00 191px)"></i><i style="background:linear-gradient(90deg,#c1ff00 0px,#ff0 121px,#ffde00 191px)"></i><i style="background:linear-gradient(90deg,#c2ff00 0px,#ff0 121px,#fd0 191px)"></i><i style="background:linear-gradient(90deg,#c2ff00 0px,#ff0 120px,#fd0 191px)"></i><i style="background:linear-gradient(90deg,#c2ff00 0px,#ff0 119px,#fd0 191px)"></i><i style="background:linear-gradient(90deg,#c2ff00 0px,#ff0 119px,#ffdc00 191px)"></i><i style="background:linear-gradient(90deg,#c3ff00 0px,#ff0 118px,#ffdc00 191px)"></i><i style="background:linear-gradient(90deg,#c3ff00 0px,#ff0 118px,#ffdc00 191px)"></i><i style="background:linear-gradient(90deg,#c3ff00 0px,#ff0 117px,#ffdc00 191px)"></i><i style="background:linear-gradient(90deg,#c3ff00 0px,#ff0 116px,#ffdb00 191px)"></i><i style="background:linear-gradient(90deg,#c4ff00 0px,#ff0 116px,#ffdb00 191px)"></i><i style="background:linear-gradient(90deg,#c4ff00 0px,#ff0 115px,#ffdb00 191px)"></i><i style="background:linear-gradient(90deg,#c4ff00 0px,#ff0 115px,#ffdb00 191px)"></i><i style="background:linear-gradient(90deg,#c5ff00 0px,#ff0 114px,#ffda00 191px)"></i><i style="background:linear-gradient(90deg,#c5ff00 0px,#ff0 113px,#ffda00 191px)"></i><i style="background:linear-gradient(90deg,#c5ff00 0px,#ff0 113px,#ffda00 191px)"></i><i style="background:linear-gradient(90deg,#c5ff00 0px,#ff0 112px,#ffd900 191px)"></i><i style="background:linear-gradient(90deg,#c6ff00 0px,#ff0 112px,#ffd900 191px)"></i><i style="background:linear-gradient(90deg,#c6ff00 0px,#ff0 111px,#ffd900 191px)"></i><i style="background:linear-gradient(90deg,#c6ff00 0px,#ff0 110px,#ffd900 191px)"></i><i style="background:linear-gradient(90deg,#c6ff00 0px,#ff0 110px,#ffd800 191px)"></i><i style="background:linear-gradient(90deg,#c7ff00 0px,#ff0 109px,#ffd800 191px)"></i><i style="background:linear-gradient(90deg,#c7ff00 0px,#ff0 109px,#ffd800 191px)"></i><i style="background:linear-gradient(90deg,#c7ff00 0px,#ff0 108px,#ffd800 191px)"></i><i style="background:linear-gradient(90deg,#c7ff00 0px,#ff0 107px,#ffd700 191px)"></i><i style="background:linear-gradient(90deg,#c8ff00 0px,#ff0 107px,#ffd700 191px)"></i><i style="background:linear-gradient(90deg,#c8ff00 0px,#ff0 106px,#ffd700 191px)"></i><i style="background:linear-gradient(90deg,#c8ff00 0px,#ff0 106px,#ffd600 191px)"></i><i style="background:linear-gradient(90deg,#c9ff00 0px,#ff0 105px,#ffd600 191px)"></i><i style="background:linear-gradient(90deg,#c9ff00 0px,#ff0 104px,#ffd600 191px)"></i><i style="background:linear-gradient(90deg,#c9ff00 0px,#ff0 104px,#ffd600 191px)"></i><i style="background:linear-gradient(90deg,#c9ff00 0px,#ff0 103px,#ffd500 191px)"></i><i style="background:linear-gradient(90deg,#caff00 0px,#ff0 103px,#ffd500 191px)"></i><i style="background:linear-gradient(90deg,#caff00 0px,#ff0 102px,#ffd500 191px)"></i><i style="background:linear-gradient(90deg,#caff00 0px,#ff0 101px,#ffd500 191px)"></i><i style="background:linear-gradient(90deg,#caff00 0px,#ff0 101px,#ffd400 191px)"></i><i style="background:linear-gradient(90deg,#cbff00 0px,#ff0 100px,#ffd400 191px)"></i><i style="background:linear-gradient(90deg,#cbff00 0px,#ff0 100px,#ffd400 191px)"></i><i style="background:linear-gradient(90deg,#cbff00 0px,#ff0 99px,#ffd400 191px)"></i><i style="background:linear-gradient(90deg,#cf0 0px,#ff0 98px,#ffd300 191px)"></i><i style="background:linear-gradient(90deg,#cf0 0px,#ff0 98px,#ffd300 191px)"></i><i style="background:linear-gradient(90deg,#cf0 0px,#ff0 97px,#ffd300 191px)"></i><i style="background:linear-gradient(90deg,#cf0 0px,#ff0 97px,#ffd200 191px)"></i><i style="background:linear-gradient(90deg,#cdff00 0px,#ff0 96px,#ffd200 191px)"></i><i style="background:linear-gradient(90deg,#cdff00 0px,#ff0 95px,#ffd200 191px)"></i><i style="background:linear-gradient(90deg,#cdff00 0px,#ff0 95px,#ffd200 191px)"></i><i style="background:linear-gradient(90deg,#ceff00 0px,#ff0 94px,#ffd100 191px)"></i><i style="background:linear-gradient(90deg,#ceff00 0px,#ff0 94px,#ffd100 191px)"></i><i style="background:linear-gradient(90deg,#ceff00 0px,#ff0 93px,#ffd100 191px)"></i><i style="background:linear-gradient(90deg,#ceff00 0px,#ff0 92px,#ffd100 191px)"></i><i style="background:linear-gradient(90deg,#cfff00 0px,#ff0 92px,#ffd000 191px)"></i><i style="background:linear-gradient(90deg,#cfff00 0px,#ff0 91px,#ffd000 191px)"></i><i style="background:linear-gradient(90deg,#cfff00 0px,#ff0 91px,#ffd000 191px)"></i><i style="background:linear-gradient(90deg,#cfff00 0px,#ff0 90px,#ffd000 191px)"></i><i style="background:linear-gradient(90deg,#d0ff00 0px,#ff0 89px,#ffcf00 191px)"></i><i style="background:linear-gradient(90deg,#d0ff00 0px,#ff0 89px,#ffcf00 191px)"></i><i style="background:linear-gradient(90deg,#d0ff00 0px,#ff0 88px,#ffcf00 191px)"></i><i style="background:linear-gradient(90deg,#d1ff00 0px,#ff0 88px,#ffce00 191px)"></i><i style="background:linear-gradient(90deg,#d1ff00 0px,#ff0 87px,#ffce00 191px)"></i><i style="background:linear-gradient(90deg,#d1ff00 0px,#ff0 86px,#ffce00 191px)"></i><i style="background:linear-gradient(90deg,#d1ff00 0px,#ff0 86px,#ffe500 136px,#ffce00 191px)"></i><i style="background:linear-gradient(90deg,#d2ff00 0px,#ff0 85px,#ffe500 136px,#ffcd00 191px)"></i><i style="background:linear-gradient(90deg,#d2ff00 0px,#ff0 85px,#ffe500 136px,#ffcd00 191px)"></i><i style="background:linear-gradient(90deg,#d2ff00 0px,#ff0 84px,#ffe500 135px,#ffcd00 191px)"></i><i style="background:linear-gradient(90deg,#d3ff00 0px,#ff0 83px,#ffe400 136px,#ffcd00 191px)"></i><i style="background:linear-gradient(90deg,#d3ff00 0px,#ff0 83px,#ffe400 135px,#fc0 191px)"></i><i style="background:linear-gradient(90deg,#d3ff00 0px,#ff0 82px,#ffe500 134px,#fc0 191px)"></i><i style="background:linear-gradient(90deg,#d3ff00 0px,#ff0 82px,#ffe400 134px,#fc0 191px)"></i><i style="background:linear-gradient(90deg,#d4ff00 0px,#ff0 81px,#ffe400 134px,#fc0 191px)"></i><i style="background:linear-gradient(90deg,#d4ff00 0px,#ff0 80px,#ffe400 134px,#ffcb00 191px)"></i><i style="background:linear-gradient(90deg,#d4ff00 0px,#ff0 80px,#ffe400 133px,#ffcb00 191px)"></i><i style="background:linear-gradient(90deg,#d5ff00 0px,#ff0 79px,#ffe400 133px,#ffcb00 191px)"></i><i style="background:linear-gradient(90deg,#d5ff00 0px,#ff0 79px,#ffe300 133px,#ffcb00 191px)"></i><i style="background:linear-gradient(90deg,#d5ff00 0px,#ff0 78px,#ffe300 132px,#ffca00 191px)"></i><i style="background:linear-gradient(90deg,#d5ff00 0px,#ff0 77px,#ffe300 132px,#ffca00 191px)"></i><i style="background:linear-gradient(90deg,#d6ff00 0px,#ff0 77px,#ffe300 131px,#ffca00 191px)"></i><i style="background:linear-gradient(90deg,#d6ff00 0px,#ff0 76px,#ffe300 131px,#ffc900 191px)"></i><i style="background:linear-gradient(90deg,#d6ff00 0px,#ff0 76px,#ffe300 131px,#ffc900 191px)"></i><i style="background:linear-gradient(90deg,#d7ff00 0px,#ff0 75px,#ffe300 130px,#ffc900 191px)"></i><i style="background:linear-gradient(90deg,#d7ff00 0px,#ff0 74px,#ffe300 130px,#ffc900 191px)"></i><i style="background:linear-gradient(90deg,#d7ff00 0px,#ff0 74px,#ffe200 130px,#ffc800 191px)"></i><i style="background:linear-gradient(90deg,#d8ff00 0px,#ff0 73px,#ffe200 129px,#ffc800 191px)"></i><i style="background:linear-gradient(90deg,#d8ff00 0px,#ff0 72px,#ffe200 130px,#ffc800 191px)"></i><i style="background:linear-gradient(90deg,#d8ff00 0px,#ff0 72px,#ffe200 129px,#ffc800 191px)"></i><i style="background:linear-gradient(90deg,#d8ff00 0px,#ff0 71px,#ffe200 129px,#ffc700 191px)"></i><i style="background:linear-gradient(90deg,#d9ff00 0px,#ff0 71px,#ffe200 128px,#ffc700 191px)"></i><i style="background:linear-gradient(90deg,#d9ff00 0px,#ff0 70px,#ffe100 128px,#ffc700 191px)"></i><i style="background:linear-gradient(90deg,#d9ff00 0px,#ff0 69px,#ffe100 128px,#ffc700 191px)"></i><i style="background:linear-gradient(90deg,#daff00 0px,#ff0 69px,#ffe100 127px,#ffc600 191px)"></i><i style="background:linear-gradient(90deg,#daff00 0px,#ff0 68px,#ffe100 127px,#ffc600 191px)"></i><i style="background:linear-gradient(90deg,#daff00 0px,#ff0 68px,#ffe100 127px,#ffc600 191px)"></i><i style="background:linear-gradient(90deg,#dbff00 0px,#ff0 67px,#ffe100 126px,#ffc600 191px)"></i><i style="background:linear-gradient(90deg,#dbff00 0px,#ff0 66px,#ffe100 126px,#ffc500 191px)"></i><i style="background:linear-gradient(90deg,#dbff00 0px,#ff0 66px,#ffe100 125px,#ffc500 191px)"></i><i style="background:linear-gradient(90deg,#dbff00 0px,#ff0 65px,#ffe000 125px,#ffc500 191px)"></i><i style="background:linear-gradient(90deg,#dcff00 0px,#ff0 65px,#ffe000 125px,#ffc500 191px)"></i><i style="background:linear-gradient(90deg,#dcff00 0px,#ff0 64px,#ffe000 124px,#ffc400 191px)"></i><i style="background:linear-gradient(90deg,#dcff00 0px,#ff0 63px,#ffe000 125px,#ffc400 191px)"></i><i style="background:linear-gradient(90deg,#df0 0px,#ff0 63px,#ffe000 124px,#ffc400 191px)"></i><i style="background:linear-gradient(90deg,#df0 0px,#ff0 62px,#ffe000 123px,#ffc400 191px)"></i><i style="background:linear-gradient(90deg,#df0 0px,#ff0 62px,#ffe000 123px,#ffc300 191px)"></i><i style="background:linear-gradient(90deg,#deff00 0px,#ff0 61px,#ffdf00 123px,#ffc300 191px)"></i><i style="background:linear-gradient(90deg,#deff00 0px,#ff0 60px,#ffdf00 123px,#ffc300 191px)"></i><i style="background:linear-gradient(90deg,#deff00 0px,#ff0 60px,#ffdf00 122px,#ffc300 191px)"></i><i style="background:linear-gradient(90deg,#deff00 0px,#ff0 59px,#ffdf00 122px,#ffc200 191px)"></i><i style="background:linear-gradient(90deg,#dfff00 0px,#ff0 59px,#ffdf00 122px,#ffc200 191px)"></i><i style="background:linear-gradient(90deg,#dfff00 0px,#ff0 58px,#ffdf00 121px,#ffc200 191px)"></i><i style="background:linear-gradient(90deg,#dfff00 0px,#ff0 57px,#ffde00 121px,#ffc100 191px)"></i><i style="background:linear-gradient(90deg,#e0ff00 0px,#ff0 57px,#ffdf00 120px,#ffc100 191px)"></i><i style="background:linear-gradient(90deg,#e0ff00 0px,#ff0 56px,#ffde00 120px,#ffc100 191px)"></i><i style="background:linear-gradient(90deg,#e0ff00 0px,#ff0 56px,#ffde00 120px,#ffc100 191px)"></i><i style="background:linear-gradient(90deg,#e1ff00 0px,#ff0 55px,#ffde00 119px,#ffc000 191px)"></i><i style="background:linear-gradient(90deg,#e1ff00 0px,#ff0 54px,#ffde00 119px,#ffc000 191px)"></i><i style="background:linear-gradient(90deg,#e1ff00 0px,#ff0 54px,#ffde00 119px,#ffc000 191px)"></i><i style="background:linear-gradient(90deg,#e2ff00 0px,#ff0 53px,#ffde00 118px,#ffc000 191px)"></i><i style="background:linear-gradient(90deg,#e2ff00 0px,#ff0 53px,#fd0 118px,#ffbf00 191px)"></i><i style="background:linear-gradient(90deg,#e2ff00 0px,#ff0 52px,#fd0 118px,#ffbf00 191px)"></i><i style="background:linear-gradient(90deg,#e2ff00 0px,#ff0 51px,#fd0 118px,#ffbf00 191px)"></i><i style="background:linear-gradient(90deg,#e3ff00 0px,#ff0 51px,#fd0 117px,#ffbf00 191px)"></i><i style="background:linear-gradient(90deg,#e3ff00 0px,#ff0 50px,#fd0 117px,#ffbe00 191px)"></i><i style="background:linear-gradient(90deg,#e3ff00 0px,#ff0 50px,#ffdc00 117px,#ffbe00 191px)"></i><i style="background:linear-gradient(90deg,#e4ff00 0px,#ff0 49px,#fd0 116px,#ffbe00 191px)"></i><i style="background:linear-gradient(90deg,#e4ff00 0px,#ff0 48px,#ffdc00 116px,#ffbe00 191px)"></i><i style="background:linear-gradient(90deg,#e4ff00 0px,#ff0 48px,#ffdc00 115px,#ffbd00 191px)"></i><i style="background:linear-gradient(90deg,#e5ff00 0px,#ff0 47px,#ffdc00 115px,#ffbd00 191px)"></i><i style="background:linear-gradient(90deg,#e5ff00 0px,#ff0 47px,#ffdc00 115px,#ffbd00 191px)"></i><i style="background:linear-gradient(90deg,#e5ff00 0px,#ff0 46px,#ffdc00 114px,#ffbd00 191px)"></i><i style="background:linear-gradient(90deg,#e6ff00 0px,#ff0 45px,#ffdc00 114px,#ffbc00 191px)"></i><i style="background:linear-gradient(90deg,#e6ff00 0px,#ff0 45px,#ffdb00 114px,#ffbc00 191px)"></i><i style="background:linear-gradient(90deg,#e6ff00 0px,#ff0 44px,#ffdc00 113px,#ffbc00 191px)"></i><i style="background:linear-gradient(90deg,#e7ff00 0px,#ff0 44px,#ffdb00 113px,#ffbc00 191px)"></i><i style="background:linear-gradient(90deg,#e7ff00 0px,#ff0 43px,#ffdb00 113px,#fb0 191px)"></i><i style="background:linear-gradient(90deg,#e7ff00 0px,#ff0 42px,#ffdb00 112px,#fb0 191px)"></i><i style="background:linear-gradient(90deg,#e8ff00 0px,#ff0 42px,#ffdb00 112px,#fb0 191px)"></i><i style="background:linear-gradient(90deg,#e8ff00 0px,#ff0 41px,#ffdb00 112px,#fb0 191px)"></i><i style="background:linear-gradient(90deg,#e8ff00 0px,#ff0 41px,#ffda00 112px,#ffba00 191px)"></i><i style="background:linear-gradient(90deg,#e9ff00 0px,#ff0 40px,#ffda00 111px,#ffba00 191px)"></i><i style="background:linear-gradient(90deg,#e9ff00 0px,#ff0 39px,#ffda00 111px,#ffba00 191px)"></i><i style="background:linear-gradient(90deg,#e9ff00 0px,#ff0 39px,#ffda00 110px,#ffba00 191px)"></i><svg width="191" height="190" viewBox="0 0 191 190"><path d="M0 0H191V190H0Z M1015.9 915.4 L-561.1 -490.6 L-998.1 1903.4Z" fill="#000" fill-opacity="0.4" fill-rule="evenodd"/></svg></div></div>
<svg width="1719" height="891" viewBox="0 0 1719 891">
<path d="M1513.8 71.75 H1038.75 V593.3 H1706.25" fill="none" stroke="#999999" stroke-width="1.5"/>
<path d="M1706.25 594.2 V262" fill="none" stroke="#999999" stroke-width="1.5"/>
<rect x="1516.2" y="72.2" width="190.6" height="189.6" fill="none" stroke="#8a8a8a" stroke-width="1.6"/>
<line x1="1039.06" y1="593.2" x2="1039.06" y2="599" stroke="#e4e4e4" stroke-width="1.4"/>
<line x1="1033.4" y1="593.2" x2="1038" y2="593.2" stroke="#e4e4e4" stroke-width="1.5"/>
<text x="1034.29" y="614.90" font-size="16" textLength="8.41" lengthAdjust="spacingAndGlyphs" class="t">0</text>
<text x="1024.58" y="599.90" font-size="16" textLength="8.41" lengthAdjust="spacingAndGlyphs" class="t">0</text>
<line x1="1117.5" y1="593.2" x2="1117.5" y2="599" stroke="#e4e4e4" stroke-width="1.4"/>
<line x1="1033.4" y1="531.9" x2="1038" y2="531.9" stroke="#e4e4e4" stroke-width="1.5"/>
<text x="1107.50" y="614.90" font-size="16" textLength="21.02" lengthAdjust="spacingAndGlyphs" class="t">0,1</text>
<text x="1012.10" y="537.87" font-size="16" textLength="21.02" lengthAdjust="spacingAndGlyphs" class="t">0,1</text>
<line x1="1197.3" y1="593.2" x2="1197.3" y2="599" stroke="#e4e4e4" stroke-width="1.4"/>
<line x1="1033.4" y1="469.6" x2="1038" y2="469.6" stroke="#e4e4e4" stroke-width="1.5"/>
<text x="1186.97" y="614.90" font-size="16" textLength="21.02" lengthAdjust="spacingAndGlyphs" class="t">0,2</text>
<text x="1012.14" y="475.84" font-size="16" textLength="21.02" lengthAdjust="spacingAndGlyphs" class="t">0,2</text>
<line x1="1276.1" y1="593.2" x2="1276.1" y2="599" stroke="#e4e4e4" stroke-width="1.4"/>
<line x1="1033.4" y1="408" x2="1038" y2="408" stroke="#e4e4e4" stroke-width="1.5"/>
<text x="1266.36" y="614.90" font-size="16" textLength="21.02" lengthAdjust="spacingAndGlyphs" class="t">0,3</text>
<text x="1012.03" y="413.81" font-size="16" textLength="21.02" lengthAdjust="spacingAndGlyphs" class="t">0,3</text>
<line x1="1355.2" y1="593.2" x2="1355.2" y2="599" stroke="#e4e4e4" stroke-width="1.4"/>
<line x1="1033.4" y1="344.7" x2="1038" y2="344.7" stroke="#e4e4e4" stroke-width="1.5"/>
<text x="1345.70" y="614.90" font-size="16" textLength="21.02" lengthAdjust="spacingAndGlyphs" class="t">0,4</text>
<text x="1011.80" y="351.78" font-size="16" textLength="21.02" lengthAdjust="spacingAndGlyphs" class="t">0,4</text>
<line x1="1435.8" y1="593.2" x2="1435.8" y2="599" stroke="#e4e4e4" stroke-width="1.4"/>
<line x1="1033.4" y1="283.4" x2="1038" y2="283.4" stroke="#e4e4e4" stroke-width="1.5"/>
<text x="1425.24" y="614.90" font-size="16" textLength="21.02" lengthAdjust="spacingAndGlyphs" class="t">0,5</text>
<text x="1011.99" y="289.75" font-size="16" textLength="21.02" lengthAdjust="spacingAndGlyphs" class="t">0,5</text>
<line x1="1514.2" y1="593.2" x2="1514.2" y2="599" stroke="#e4e4e4" stroke-width="1.4"/>
<line x1="1033.4" y1="221.8" x2="1038" y2="221.8" stroke="#e4e4e4" stroke-width="1.5"/>
<text x="1504.71" y="614.90" font-size="16" textLength="21.02" lengthAdjust="spacingAndGlyphs" class="t">0,6</text>
<text x="1012.03" y="227.72" font-size="16" textLength="21.02" lengthAdjust="spacingAndGlyphs" class="t">0,6</text>
<line x1="1594" y1="593.2" x2="1594" y2="599" stroke="#e4e4e4" stroke-width="1.4"/>
<line x1="1033.4" y1="160.4" x2="1038" y2="160.4" stroke="#e4e4e4" stroke-width="1.5"/>
<text x="1584.22" y="614.90" font-size="16" textLength="21.02" lengthAdjust="spacingAndGlyphs" class="t">0,7</text>
<text x="1012.14" y="165.69" font-size="16" textLength="21.02" lengthAdjust="spacingAndGlyphs" class="t">0,7</text>
<line x1="1674.5" y1="593.2" x2="1674.5" y2="599" stroke="#e4e4e4" stroke-width="1.4"/>
<line x1="1033.4" y1="96.9" x2="1038" y2="96.9" stroke="#e4e4e4" stroke-width="1.5"/>
<text x="1663.61" y="614.90" font-size="16" textLength="21.02" lengthAdjust="spacingAndGlyphs" class="t">0,8</text>
<text x="1012.03" y="103.66" font-size="16" textLength="21.02" lengthAdjust="spacingAndGlyphs" class="t">0,8</text>
<text x="1319.88" y="66.40" font-size="16" textLength="78.45" lengthAdjust="spacingAndGlyphs" class="t">CIE 1931 xy</text>
<rect x="1572" y="387.5" width="14" height="14" fill="none" stroke="#fff" stroke-width="1.45"/>
<rect x="1505.9" y="386" width="14" height="14" fill="none" stroke="#fff" stroke-width="1.45"/>
<rect x="1452.9" y="384.5" width="14" height="14" fill="none" stroke="#fff" stroke-width="1.45"/>
<rect x="1392.5" y="383" width="14" height="14" fill="none" stroke="#fff" stroke-width="1.45"/>
<rect x="1338" y="381.8" width="14" height="14" fill="none" stroke="#fff" stroke-width="1.45"/>
<rect x="1242.6" y="157.5" width="14" height="14" fill="none" stroke="#fff" stroke-width="1.45"/>
<rect x="1249.4" y="206.3" width="14" height="14" fill="none" stroke="#fff" stroke-width="1.45"/>
<rect x="1257.9" y="246.9" width="14" height="14" fill="none" stroke="#fff" stroke-width="1.45"/>
<rect x="1264.9" y="290.4" width="14" height="14" fill="none" stroke="#fff" stroke-width="1.45"/>
<rect x="1271.9" y="336.8" width="14" height="14" fill="none" stroke="#fff" stroke-width="1.45"/>
<rect x="1150" y="548.5" width="14" height="14" fill="none" stroke="#fff" stroke-width="1.45"/>
<rect x="1178" y="512.4" width="14" height="14" fill="none" stroke="#fff" stroke-width="1.45"/>
<rect x="1203.6" y="479.9" width="14" height="14" fill="none" stroke="#fff" stroke-width="1.45"/>
<rect x="1228.6" y="447.4" width="14" height="14" fill="none" stroke="#fff" stroke-width="1.45"/>
<rect x="1253.4" y="414.1" width="14" height="14" fill="none" stroke="#fff" stroke-width="1.45"/>
<rect x="1190.3" y="379" width="14" height="14" fill="none" stroke="#fff" stroke-width="1.45"/>
<rect x="1208.8" y="380.3" width="14" height="14" fill="none" stroke="#fff" stroke-width="1.45"/>
<rect x="1225.6" y="380.3" width="14" height="14" fill="none" stroke="#fff" stroke-width="1.45"/>
<rect x="1243.6" y="380.3" width="14" height="14" fill="none" stroke="#fff" stroke-width="1.45"/>
<rect x="1262.1" y="380.3" width="14" height="14" fill="none" stroke="#fff" stroke-width="1.45"/>
<rect x="1298.4" y="491.2" width="14" height="14" fill="none" stroke="#fff" stroke-width="1.45"/>
<rect x="1294.4" y="468.4" width="14" height="14" fill="none" stroke="#fff" stroke-width="1.45"/>
<rect x="1291.4" y="447.4" width="14" height="14" fill="none" stroke="#fff" stroke-width="1.45"/>
<rect x="1287.4" y="425.3" width="14" height="14" fill="none" stroke="#fff" stroke-width="1.45"/>
<rect x="1283.1" y="402.8" width="14" height="14" fill="none" stroke="#fff" stroke-width="1.45"/>
<rect x="1379.8" y="252.4" width="14" height="14" fill="none" stroke="#fff" stroke-width="1.45"/>
<rect x="1359" y="279.4" width="14" height="14" fill="none" stroke="#fff" stroke-width="1.45"/>
<rect x="1338" y="305.7" width="14" height="14" fill="none" stroke="#fff" stroke-width="1.45"/>
<rect x="1319.4" y="331.5" width="14" height="14" fill="none" stroke="#fff" stroke-width="1.45"/>
<rect x="1299.9" y="357.3" width="14" height="14" fill="none" stroke="#fff" stroke-width="1.45"/>
<rect x="1280.5" y="381.9" width="13.8" height="13.8" fill="none" stroke="#000" stroke-width="1.7"/>
<circle cx="1576" cy="394.8" r="4.3" fill="#be0000" stroke="#000" stroke-width="1.2"/>
<circle cx="1514.4" cy="393.3" r="4.3" fill="#be5b5b" stroke="#000" stroke-width="1.2"/>
<circle cx="1460.6" cy="392" r="4.3" fill="#be7d7d" stroke="#000" stroke-width="1.2"/>
<circle cx="1403.5" cy="390" r="4.3" fill="#be9797" stroke="#000" stroke-width="1.2"/>
<circle cx="1347.7" cy="389" r="4.3" fill="#beacac" stroke="#000" stroke-width="1.2"/>
<circle cx="1250.9" cy="164.4" r="4.3" fill="#00be00" stroke="#000" stroke-width="1.2"/>
<circle cx="1257.9" cy="211.1" r="4.3" fill="#5bbe5b" stroke="#000" stroke-width="1.2"/>
<circle cx="1266.1" cy="253.1" r="4.3" fill="#7dbe7d" stroke="#000" stroke-width="1.2"/>
<circle cx="1272.9" cy="295.2" r="4.3" fill="#97be97" stroke="#000" stroke-width="1.2"/>
<circle cx="1281.6" cy="340" r="4.3" fill="#acbeac" stroke="#000" stroke-width="1.2"/>
<circle cx="1157" cy="564.1" r="4.3" fill="#0000be" stroke="#000" stroke-width="1.2"/>
<circle cx="1185" cy="525.7" r="4.3" fill="#5b5bbe" stroke="#000" stroke-width="1.2"/>
<circle cx="1211.8" cy="490.9" r="4.3" fill="#7d7dbe" stroke="#000" stroke-width="1.2"/>
<circle cx="1236.8" cy="457.4" r="4.3" fill="#9797be" stroke="#000" stroke-width="1.2"/>
<circle cx="1263.4" cy="422.6" r="4.3" fill="#acacbe" stroke="#000" stroke-width="1.2"/>
<circle cx="1199" cy="385" r="4.3" fill="#00bebe" stroke="#000" stroke-width="1.2"/>
<circle cx="1218.8" cy="385" r="4.3" fill="#5bbebe" stroke="#000" stroke-width="1.2"/>
<circle cx="1235.3" cy="384.8" r="4.3" fill="#7dbebe" stroke="#000" stroke-width="1.2"/>
<circle cx="1251.8" cy="386.3" r="4.3" fill="#97bebe" stroke="#000" stroke-width="1.2"/>
<circle cx="1271.9" cy="386" r="4.3" fill="#acbebe" stroke="#000" stroke-width="1.2"/>
<circle cx="1309.9" cy="501.9" r="4.3" fill="#be00be" stroke="#000" stroke-width="1.2"/>
<circle cx="1305.9" cy="478.4" r="4.3" fill="#be5bbe" stroke="#000" stroke-width="1.2"/>
<circle cx="1300.9" cy="455.9" r="4.3" fill="#be7dbe" stroke="#000" stroke-width="1.2"/>
<circle cx="1296.9" cy="434.1" r="4.3" fill="#be97be" stroke="#000" stroke-width="1.2"/>
<circle cx="1292.6" cy="410.1" r="4.3" fill="#beacbe" stroke="#000" stroke-width="1.2"/>
<circle cx="1384" cy="257.9" r="4.3" fill="#bebe00" stroke="#000" stroke-width="1.2"/>
<circle cx="1365.7" cy="284.9" r="4.3" fill="#bebe5b" stroke="#000" stroke-width="1.2"/>
<circle cx="1346" cy="309.2" r="4.3" fill="#bebe7d" stroke="#000" stroke-width="1.2"/>
<circle cx="1327.7" cy="335.2" r="4.3" fill="#bebe97" stroke="#000" stroke-width="1.2"/>
<circle cx="1309.7" cy="358.5" r="4.3" fill="#bebeac" stroke="#000" stroke-width="1.2"/>
<circle cx="1289.1" cy="389" r="4.3" fill="#fff" stroke="#000" stroke-width="1.2"/>
<rect x="1603.9" y="159.2" width="14.2" height="14.2" fill="none" stroke="#fff" stroke-width="1.45"/>
<circle cx="1603.8" cy="158.9" r="4.3" fill="#c3c300" stroke="#000" stroke-width="1.2"/>
</svg>
</body></html>
